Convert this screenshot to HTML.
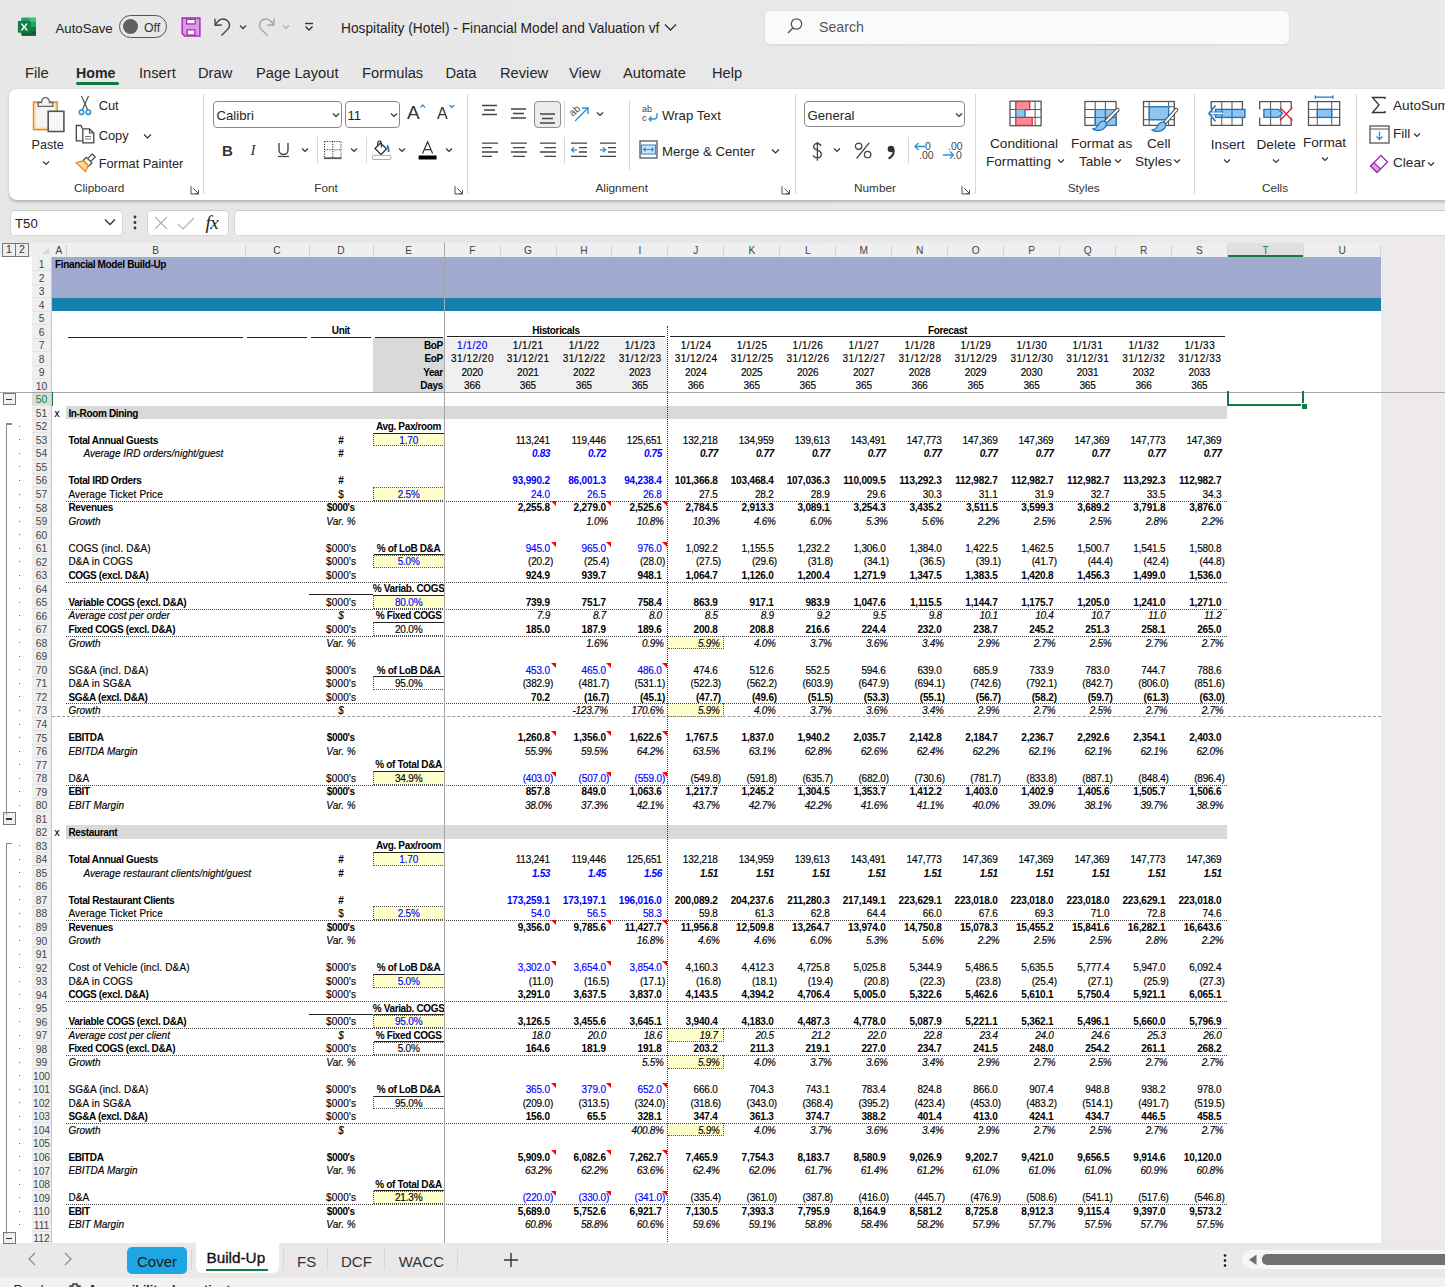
<!DOCTYPE html>
<html><head><meta charset="utf-8">
<style>
*{margin:0;padding:0;}
html,body{width:1445px;height:1287px;overflow:hidden;background:linear-gradient(to right,#e7e7e7 0%,#e9e8e9 55%,#ece9eb 100%);font-family:"Liberation Sans",sans-serif;}
.a{position:absolute;}
.t{position:absolute;white-space:nowrap;line-height:1;}
.t.c{text-align:center;}
.ch{position:absolute;height:14px;line-height:16.2px;text-align:center;font-size:10.2px;color:#444;}
.rh{position:absolute;left:32px;width:19px;height:13.5px;line-height:15px;text-align:center;font-size:10.3px;}
.ob{position:absolute;width:13.6px;height:13.5px;border:1.4px solid #6f7a86;background:#eeeeee;font-size:10.5px;line-height:11.5px;text-align:center;color:#333;box-sizing:border-box;}
.ob2{position:absolute;width:13px;height:12.5px;border:1px solid #777;background:#f0f0f0;font-size:10px;line-height:11px;text-align:center;color:#333;box-sizing:border-box;font-weight:bold;}
.u{position:absolute;white-space:nowrap;color:#222;}
</style></head><body>
<svg class="a" style="left:17px;top:17px;" width="20" height="20" viewBox="0 0 20 20"><rect x="4.5" y="0.8" width="14.5" height="18" rx="1" fill="#107c41"/>
<rect x="4.5" y="0.8" width="7.5" height="9.2" fill="#21a366"/><rect x="12" y="0.8" width="7" height="4.2" fill="#33c481"/>
<rect x="12" y="5" width="7" height="5" fill="#21a366"/><path d="M4.5 14.5 H19 V17.8 A1 1 0 0 1 18 18.8 H5.5 A1 1 0 0 1 4.5 17.8 Z" fill="#185c37"/>
<rect x="0.9" y="4.1" width="12.7" height="11.7" rx="1" fill="#107c41"/>
<path d="M3.6 6.4 H5.6 L7.25 9.2 L8.9 6.4 H10.9 L8.3 10 L11 13.6 H9 L7.25 10.8 L5.5 13.6 H3.5 L6.2 10 Z" fill="#fff"/></svg>
<div class="u" style="left:55.5px;top:20.7px;font-size:13.2px;line-height:15.2px;color:#222;font-weight:normal;">AutoSave</div>
<div class="a" style="left:119px;top:15px;width:48px;height:22.5px;border:1px solid #555;border-radius:12px;box-sizing:border-box;"></div>
<div class="a" style="left:123px;top:19.3px;width:15px;height:15px;border-radius:50%;background:#5f5f5f;"></div>
<div class="u" style="left:144px;top:21.2px;font-size:12.3px;line-height:14.1px;color:#333;font-weight:normal;">Off</div>
<svg class="a" style="left:181px;top:17px;" width="20" height="20" viewBox="0 0 20 20"><path d="M1.2 1 H18.9 V18.9 H3.6 L1.2 16.5 Z" fill="#d99be3" stroke="#a52fb5" stroke-width="1.5"/>
<rect x="5.6" y="2.3" width="8.6" height="4.6" fill="#fff" stroke="#a52fb5" stroke-width="1.3"/>
<rect x="6.2" y="12.8" width="7.6" height="5.2" fill="#fff" stroke="#a52fb5" stroke-width="1.3"/></svg>
<svg class="a" style="left:213px;top:17px;" width="20" height="21" viewBox="0 0 20 21"><path d="M2.3 8.3 C4.5 4 7 2 10 2 C13.5 2 16.5 4.5 16.5 8.5 C16.5 10.5 15.5 11.5 14.5 12.5 L8.5 18.5" fill="none" stroke="#444" stroke-width="1.4"/><path d="M1.8 1.6 L2.3 8.3 L8.8 8" fill="none" stroke="#444" stroke-width="1.4"/></svg>
<svg class="a" style="left:238.5px;top:24px;" width="8" height="6.0" viewBox="0 0 8 6.0"><path d="M1 1.5 L4.0 4.5 L7 1.5" fill="none" stroke="#444" stroke-width="1.4"/></svg>
<svg class="a" style="left:256px;top:17px;" width="20" height="21" viewBox="0 0 20 21"><path d="M17.7 8.3 C15.5 4 13 2 10 2 C6.5 2 3.5 4.5 3.5 8.5 C3.5 10.5 4.5 11.5 5.5 12.5 L11.5 18.5" fill="none" stroke="#a6a6a6" stroke-width="1.4"/><path d="M18.2 1.6 L17.7 8.3 L11.2 8" fill="none" stroke="#a6a6a6" stroke-width="1.4"/></svg>
<svg class="a" style="left:281.5px;top:24px;" width="8" height="6.0" viewBox="0 0 8 6.0"><path d="M1 1.5 L4.0 4.5 L7 1.5" fill="none" stroke="#b0b0b0" stroke-width="1.2"/></svg>
<svg class="a" style="left:303px;top:21px;" width="12" height="12" viewBox="0 0 12 12"><path d="M2 2.5 H10" stroke="#333" stroke-width="1.4"/><path d="M2.5 5.5 L6 9 L9.5 5.5" fill="none" stroke="#333" stroke-width="1.4"/></svg>
<div class="u" style="left:341px;top:20.6px;font-size:13.75px;line-height:15.8px;color:#222;font-weight:normal;">Hospitality (Hotel) - Financial Model and Valuation vf</div>
<svg class="a" style="left:664px;top:22.5px;" width="13" height="8.5" viewBox="0 0 13 8.5"><path d="M1 1.5 L6.5 7.0 L12 1.5" fill="none" stroke="#333" stroke-width="1.4"/></svg>
<div class="a" style="left:764px;top:9.5px;width:526px;height:35px;background:#fafafa;border:1px solid #e2e0e1;border-radius:6px;box-sizing:border-box;box-shadow:0 1px 1px rgba(0,0,0,0.06);"></div>
<svg class="a" style="left:786px;top:17px;" width="18" height="18" viewBox="0 0 18 18"><circle cx="10.5" cy="7" r="5.2" fill="none" stroke="#555" stroke-width="1.3"/><path d="M7 10.8 L2 16" stroke="#555" stroke-width="1.4"/></svg>
<div class="u" style="left:819px;top:18.6px;font-size:14.2px;line-height:16.3px;color:#555;font-weight:normal;">Search</div>
<div class="u" style="left:25px;top:64.9px;font-size:14.7px;line-height:16.9px;color:#262626;font-weight:normal;">File</div>
<div class="u" style="left:76px;top:65.3px;font-size:14.2px;line-height:16.3px;color:#262626;font-weight:bold;">Home</div>
<div class="u" style="left:139px;top:64.9px;font-size:14.7px;line-height:16.9px;color:#262626;font-weight:normal;">Insert</div>
<div class="u" style="left:198px;top:64.9px;font-size:14.7px;line-height:16.9px;color:#262626;font-weight:normal;">Draw</div>
<div class="u" style="left:256px;top:64.9px;font-size:14.7px;line-height:16.9px;color:#262626;font-weight:normal;">Page Layout</div>
<div class="u" style="left:362px;top:64.9px;font-size:14.7px;line-height:16.9px;color:#262626;font-weight:normal;">Formulas</div>
<div class="u" style="left:445.5px;top:64.9px;font-size:14.7px;line-height:16.9px;color:#262626;font-weight:normal;">Data</div>
<div class="u" style="left:500px;top:64.9px;font-size:14.7px;line-height:16.9px;color:#262626;font-weight:normal;">Review</div>
<div class="u" style="left:569px;top:64.9px;font-size:14.7px;line-height:16.9px;color:#262626;font-weight:normal;">View</div>
<div class="u" style="left:623px;top:64.9px;font-size:14.7px;line-height:16.9px;color:#262626;font-weight:normal;">Automate</div>
<div class="u" style="left:712px;top:64.9px;font-size:14.7px;line-height:16.9px;color:#262626;font-weight:normal;">Help</div>
<div class="a" style="left:76px;top:82px;width:43px;height:3px;border-radius:2px;background:#0e7a3e;"></div>
<div class="a" style="left:9px;top:88.5px;width:1460px;height:111px;background:#fff;border-radius:8px;box-shadow:0 1.5px 3px rgba(0,0,0,0.22);"></div>
<div class="u" style="left:39.2px;width:120px;text-align:center;top:182.3px;font-size:11.8px;line-height:13px;color:#333;">Clipboard</div>
<div class="u" style="left:266px;width:120px;text-align:center;top:182.3px;font-size:11.8px;line-height:13px;color:#333;">Font</div>
<div class="u" style="left:561.7px;width:120px;text-align:center;top:182.3px;font-size:11.8px;line-height:13px;color:#333;">Alignment</div>
<div class="u" style="left:815px;width:120px;text-align:center;top:182.3px;font-size:11.8px;line-height:13px;color:#333;">Number</div>
<div class="u" style="left:1023.7px;width:120px;text-align:center;top:182.3px;font-size:11.8px;line-height:13px;color:#333;">Styles</div>
<div class="u" style="left:1215px;width:120px;text-align:center;top:182.3px;font-size:11.8px;line-height:13px;color:#333;">Cells</div>
<div class="a" style="left:203.4px;top:94px;width:1px;height:100px;background:#d6d6d6;"></div>
<div class="a" style="left:466.7px;top:94px;width:1px;height:100px;background:#d6d6d6;"></div>
<div class="a" style="left:794.5px;top:94px;width:1px;height:100px;background:#d6d6d6;"></div>
<div class="a" style="left:974.5px;top:94px;width:1px;height:100px;background:#d6d6d6;"></div>
<div class="a" style="left:1193.5px;top:94px;width:1px;height:100px;background:#d6d6d6;"></div>
<div class="a" style="left:1356px;top:94px;width:1px;height:100px;background:#d6d6d6;"></div>
<svg class="a" style="left:190px;top:185px;" width="10" height="10" viewBox="0 0 10 10"><path d="M1 1 V9 H9" fill="none" stroke="#555" stroke-width="1"/><path d="M3.5 3.5 L8.5 8.5 M5 8.5 H8.5 V5" fill="none" stroke="#555" stroke-width="1"/></svg>
<svg class="a" style="left:454px;top:185px;" width="10" height="10" viewBox="0 0 10 10"><path d="M1 1 V9 H9" fill="none" stroke="#555" stroke-width="1"/><path d="M3.5 3.5 L8.5 8.5 M5 8.5 H8.5 V5" fill="none" stroke="#555" stroke-width="1"/></svg>
<svg class="a" style="left:781px;top:185px;" width="10" height="10" viewBox="0 0 10 10"><path d="M1 1 V9 H9" fill="none" stroke="#555" stroke-width="1"/><path d="M3.5 3.5 L8.5 8.5 M5 8.5 H8.5 V5" fill="none" stroke="#555" stroke-width="1"/></svg>
<svg class="a" style="left:961px;top:185px;" width="10" height="10" viewBox="0 0 10 10"><path d="M1 1 V9 H9" fill="none" stroke="#555" stroke-width="1"/><path d="M3.5 3.5 L8.5 8.5 M5 8.5 H8.5 V5" fill="none" stroke="#555" stroke-width="1"/></svg>
<svg class="a" style="left:32px;top:96px;" width="34" height="38" viewBox="0 0 34 38"><rect x="1.6" y="6.1" width="23.5" height="27.5" fill="#f4f4f4" stroke="#e8831f" stroke-width="1.6"/>
<rect x="3" y="7.5" width="20.7" height="24.7" fill="none" stroke="#fbd98a" stroke-width="1.3"/>
<path d="M6.1 10.4 V6.5 H9.5 C9.8 3 11.5 1.6 13.5 1.6 C15.5 1.6 17.2 3 17.5 6.5 H20.8 V10.4 Z" fill="#f4f4f4" stroke="#666" stroke-width="1.3"/>
<rect x="16.2" y="15.3" width="15.7" height="20.2" fill="#f7f7f7" stroke="#555" stroke-width="1.6"/></svg>
<div class="u" style="left:31.5px;top:138.2px;font-size:12.6px;line-height:14.5px;color:#262626;font-weight:normal;">Paste</div>
<svg class="a" style="left:42px;top:159.5px;" width="8" height="6.0" viewBox="0 0 8 6.0"><path d="M1 1.5 L4.0 4.5 L7 1.5" fill="none" stroke="#333" stroke-width="1.2"/></svg>
<svg class="a" style="left:76px;top:95px;" width="18" height="21" viewBox="0 0 18 21"><path d="M5.5 1 L11.8 15.2 M12.5 1 L6.2 15.2" stroke="#444" stroke-width="1.1"/><circle cx="5.5" cy="17.2" r="2.2" fill="#fff" stroke="#2b8fd6" stroke-width="1.5"/><circle cx="12.3" cy="17.2" r="2.2" fill="#fff" stroke="#2b8fd6" stroke-width="1.5"/></svg>
<div class="u" style="left:98.7px;top:99.4px;font-size:12.8px;line-height:14.7px;color:#262626;font-weight:normal;">Cut</div>
<svg class="a" style="left:75px;top:124px;" width="21" height="21" viewBox="0 0 21 21"><path d="M6.8 4.5 V2.8 C6.8 2 6.2 1.5 5.5 1.5 H1.3 V16.8 H6.8" fill="none" stroke="#444" stroke-width="1.3"/><path d="M7.8 4.8 H14.5 L18.8 9 V18.8 H7.8 Z" fill="#fff" stroke="#444" stroke-width="1.3"/><path d="M14.5 4.8 V9 H18.8" fill="none" stroke="#444" stroke-width="1.1"/><path d="M10 12.5 H16 M10 15 H16" stroke="#777" stroke-width="1"/></svg>
<div class="u" style="left:98.7px;top:128.6px;font-size:12.8px;line-height:14.7px;color:#262626;font-weight:normal;">Copy</div>
<svg class="a" style="left:142.5px;top:133px;" width="9" height="6.5" viewBox="0 0 9 6.5"><path d="M1 1.5 L4.5 5.0 L8 1.5" fill="none" stroke="#333" stroke-width="1.2"/></svg>
<svg class="a" style="left:75px;top:153px;" width="22" height="21" viewBox="0 0 22 21"><path d="M17.2 1 L20.2 4 L15.5 8.7 L12.5 5.7 Z" fill="#fff" stroke="#444" stroke-width="1.2"/><path d="M11.3 4.3 L16.9 9.9 L13.7 13.1 L8.1 7.5 Z" fill="#fff" stroke="#444" stroke-width="1.2"/><path d="M8.6 7.8 L13.4 12.6 C12.2 15 11.6 16.6 10.3 18.6 L1.2 9.6 C4 8.6 6.2 8.4 8.6 7.8 Z" fill="#fbd78d" stroke="#e8831f" stroke-width="1.3"/></svg>
<div class="u" style="left:98.7px;top:157.4px;font-size:12.8px;line-height:14.7px;color:#262626;font-weight:normal;">Format Painter</div>
<div class="a" style="left:213.4px;top:101.3px;width:129px;height:26.4px;border:1px solid #8a8a8a;border-radius:4px;box-sizing:border-box;"></div>
<div class="u" style="left:216.5px;top:108.3px;font-size:13.2px;line-height:15.2px;color:#262626;font-weight:normal;">Calibri</div>
<svg class="a" style="left:332px;top:112px;" width="8" height="6.0" viewBox="0 0 8 6.0"><path d="M1 1.5 L4.0 4.5 L7 1.5" fill="none" stroke="#333" stroke-width="1.2"/></svg>
<div class="a" style="left:345px;top:101.3px;width:55.3px;height:26.4px;border:1px solid #8a8a8a;border-radius:4px;box-sizing:border-box;"></div>
<div class="u" style="left:347.5px;top:108.3px;font-size:13.2px;line-height:15.2px;color:#262626;font-weight:normal;">11</div>
<svg class="a" style="left:390px;top:112px;" width="8" height="6.0" viewBox="0 0 8 6.0"><path d="M1 1.5 L4.0 4.5 L7 1.5" fill="none" stroke="#333" stroke-width="1.2"/></svg>
<svg class="a" style="left:407px;top:103px;" width="20" height="18" viewBox="0 0 20 18"><text x="0" y="16" font-family="Liberation Sans" font-size="19" fill="#333">A</text><path d="M13.5 4.5 L15.8 2 L18 4.5" fill="none" stroke="#2b8fd6" stroke-width="1.2"/></svg>
<svg class="a" style="left:437px;top:103px;" width="20" height="18" viewBox="0 0 20 18"><text x="0" y="16" font-family="Liberation Sans" font-size="16" fill="#333">A</text><path d="M12.5 2 L14.8 4.5 L17 2" fill="none" stroke="#2b8fd6" stroke-width="1.2"/></svg>
<div class="u" style="left:222px;top:141.9px;font-size:15px;line-height:17.2px;color:#333;font-weight:bold;">B</div>
<div class="u" style="left:250.5px;top:141.9px;font-size:15px;line-height:17.2px;color:#333;font-weight:normal;font-style:italic;font-family:Liberation Serif;">I</div>
<svg class="a" style="left:277px;top:142px;" width="13" height="16" viewBox="0 0 13 16"><path d="M2 1 V8 A4.5 4.5 0 0 0 11 8 V1" fill="none" stroke="#444" stroke-width="1.4"/><path d="M1 14.5 H12" stroke="#444" stroke-width="1.2"/></svg>
<svg class="a" style="left:301px;top:147px;" width="8" height="6.0" viewBox="0 0 8 6.0"><path d="M1 1.5 L4.0 4.5 L7 1.5" fill="none" stroke="#333" stroke-width="1.2"/></svg>
<div class="a" style="left:317px;top:137px;width:1px;height:26px;background:#d6d6d6;"></div>
<svg class="a" style="left:323px;top:140px;" width="20" height="20" viewBox="0 0 20 20"><path d="M1.5 1.5 H18 V18 M1.5 1.5 V18 M9.75 1.5 V18 M1.5 9.75 H18" fill="none" stroke="#444" stroke-width="1.1" stroke-dasharray="1.2 1.2"/><path d="M1 18.2 H18.5" stroke="#555" stroke-width="1.8"/></svg>
<svg class="a" style="left:350px;top:147px;" width="8" height="6.0" viewBox="0 0 8 6.0"><path d="M1 1.5 L4.0 4.5 L7 1.5" fill="none" stroke="#333" stroke-width="1.2"/></svg>
<div class="a" style="left:365.7px;top:137px;width:1px;height:26px;background:#d6d6d6;"></div>
<svg class="a" style="left:371px;top:140px;" width="22" height="21" viewBox="0 0 22 21"><path d="M4 8.5 L9.5 3 L15.5 9 L10 14.5 Z" fill="#fff" stroke="#333" stroke-width="1.3"/><path d="M6.8 5.8 V3.2 C6.8 1.6 7.8 1 8.6 1 C9.5 1 10.3 1.6 10.3 3.2 V7.3" fill="none" stroke="#333" stroke-width="1.2"/><path d="M15.8 5.6 C17.3 6.6 17.8 8.5 17.6 12" fill="none" stroke="#1f74c6" stroke-width="1.9"/><rect x="1.5" y="15.3" width="18.3" height="4.2" rx="1" fill="#fff" stroke="#aaa" stroke-width="1"/></svg>
<svg class="a" style="left:398px;top:147px;" width="8" height="6.0" viewBox="0 0 8 6.0"><path d="M1 1.5 L4.0 4.5 L7 1.5" fill="none" stroke="#333" stroke-width="1.2"/></svg>
<svg class="a" style="left:417px;top:140px;" width="21" height="21" viewBox="0 0 21 21"><path d="M5.6 13.5 L10.6 1.7 L15.6 13.5 M7.3 9.6 H13.9" fill="none" stroke="#333" stroke-width="1.2"/><rect x="1.6" y="15.5" width="18" height="4" fill="#000"/></svg>
<svg class="a" style="left:445px;top:147px;" width="8" height="6.0" viewBox="0 0 8 6.0"><path d="M1 1.5 L4.0 4.5 L7 1.5" fill="none" stroke="#333" stroke-width="1.2"/></svg>
<svg class="a" style="left:481px;top:104px;" width="17" height="14" viewBox="0 0 17 14"><path d="M1 1.5 H16 M3 6 H14 M1 10.5 H16" stroke="#444" stroke-width="1.3"/></svg>
<svg class="a" style="left:510px;top:107px;" width="17" height="14" viewBox="0 0 17 14"><path d="M1 2 H16 M3 6.5 H14 M1 11 H16" stroke="#444" stroke-width="1.3"/></svg>
<div class="a" style="left:534px;top:101.3px;width:26.5px;height:26.7px;background:#ececec;border:1px solid #8f8f8f;border-radius:4px;box-sizing:border-box;"></div>
<svg class="a" style="left:539px;top:112px;" width="17" height="14" viewBox="0 0 17 14"><path d="M1 2 H16 M3 6.5 H14 M1 11 H16" stroke="#444" stroke-width="1.3"/></svg>
<div class="a" style="left:563.6px;top:101px;width:1px;height:27px;background:#d6d6d6;"></div>
<svg class="a" style="left:569px;top:103px;" width="22" height="20" viewBox="0 0 22 20"><text x="1" y="11" font-family="Liberation Sans" font-size="10" fill="#444" transform="rotate(-40 6 9)">ab</text><path d="M6 18 L19 5 M13 5 H19 V11" fill="none" stroke="#2b8fd6" stroke-width="1.4"/></svg>
<svg class="a" style="left:596px;top:111px;" width="8" height="6.0" viewBox="0 0 8 6.0"><path d="M1 1.5 L4.0 4.5 L7 1.5" fill="none" stroke="#333" stroke-width="1.2"/></svg>
<svg class="a" style="left:481px;top:140px;" width="18" height="19" viewBox="0 0 18 19"><path d="M1 3.2 H17 M1 7.6 H11 M1 12 H17 M1 16.4 H11" stroke="#444" stroke-width="1.3"/></svg>
<svg class="a" style="left:510px;top:140px;" width="18" height="19" viewBox="0 0 18 19"><path d="M1 3.2 H17 M3 7.6 H15 M1 12 H17 M3 16.4 H15" stroke="#444" stroke-width="1.3"/></svg>
<svg class="a" style="left:539px;top:140px;" width="18" height="19" viewBox="0 0 18 19"><path d="M1 3.2 H17 M5.5 7.6 H17 M1 12 H17 M5.5 16.4 H17" stroke="#444" stroke-width="1.3"/></svg>
<div class="a" style="left:563.6px;top:137px;width:1px;height:26px;background:#d6d6d6;"></div>
<svg class="a" style="left:570px;top:140px;" width="18" height="19" viewBox="0 0 18 19"><path d="M1 3.2 H17 M9 7.6 H17 M9 12 H17 M1 16.4 H17" stroke="#444" stroke-width="1.3"/><path d="M7 9.8 H1.5 M4 7.3 L1.5 9.8 L4 12.3" fill="none" stroke="#2b8fd6" stroke-width="1.3"/></svg>
<svg class="a" style="left:599px;top:140px;" width="18" height="19" viewBox="0 0 18 19"><path d="M1 3.2 H17 M9 7.6 H17 M9 12 H17 M1 16.4 H17" stroke="#444" stroke-width="1.3"/><path d="M1 9.8 H6.5 M4 7.3 L6.5 9.8 L4 12.3" fill="none" stroke="#2b8fd6" stroke-width="1.3"/></svg>
<div class="a" style="left:628.5px;top:100px;width:1px;height:70px;background:#d6d6d6;"></div>
<svg class="a" style="left:641px;top:104px;" width="18" height="20" viewBox="0 0 18 20"><text x="1" y="8" font-family="Liberation Sans" font-size="9" fill="#444">ab</text><text x="1" y="17" font-family="Liberation Sans" font-size="9" fill="#444">c</text><path d="M16 9 V12 A3 3 0 0 1 13 15 H8 M10.5 12.5 L8 15 L10.5 17.5" fill="none" stroke="#2b8fd6" stroke-width="1.3"/></svg>
<div class="u" style="left:662px;top:108.1px;font-size:13.2px;line-height:15.2px;color:#262626;font-weight:normal;">Wrap Text</div>
<svg class="a" style="left:639px;top:140px;" width="19" height="20" viewBox="0 0 19 20"><rect x="1" y="1" width="17" height="17" fill="#fff" stroke="#555" stroke-width="1.3"/><rect x="2.5" y="5" width="14" height="9" fill="#cfe6f7" stroke="#2b8fd6" stroke-width="1.1"/><path d="M4.5 9.5 H14.5 M6.5 7.5 L4.5 9.5 L6.5 11.5 M12.5 7.5 L14.5 9.5 L12.5 11.5" fill="none" stroke="#2b8fd6" stroke-width="1.1"/></svg>
<div class="u" style="left:662px;top:144.1px;font-size:13.2px;line-height:15.2px;color:#262626;font-weight:normal;">Merge &amp; Center</div>
<svg class="a" style="left:771px;top:148px;" width="9" height="6.5" viewBox="0 0 9 6.5"><path d="M1 1.5 L4.5 5.0 L8 1.5" fill="none" stroke="#333" stroke-width="1.2"/></svg>
<div class="a" style="left:804.2px;top:101.4px;width:161.2px;height:26.1px;border:1px solid #8a8a8a;border-radius:4px;box-sizing:border-box;"></div>
<div class="u" style="left:807.5px;top:108.1px;font-size:13.2px;line-height:15.2px;color:#262626;font-weight:normal;">General</div>
<svg class="a" style="left:955px;top:112px;" width="8" height="6.0" viewBox="0 0 8 6.0"><path d="M1 1.5 L4.0 4.5 L7 1.5" fill="none" stroke="#333" stroke-width="1.2"/></svg>
<svg class="a" style="left:811px;top:140.5px;" width="13" height="21" viewBox="0 0 13 21"><path d="M10 5 C9.5 3.3 8 2.5 6.3 2.5 C4 2.5 2.6 3.8 2.6 5.7 C2.6 7.8 4.6 8.6 6.3 9.2 C8.4 9.9 10.3 10.8 10.3 13.4 C10.3 15.5 8.5 16.8 6.3 16.8 C4.3 16.8 2.8 15.8 2.2 14.2 M6.4 0.8 V19.8" fill="none" stroke="#444" stroke-width="1.3"/></svg>
<svg class="a" style="left:833px;top:147px;" width="8" height="6.0" viewBox="0 0 8 6.0"><path d="M1 1.5 L4.0 4.5 L7 1.5" fill="none" stroke="#333" stroke-width="1.2"/></svg>
<svg class="a" style="left:854px;top:142px;" width="19" height="18" viewBox="0 0 19 18"><circle cx="4.6" cy="4.3" r="3.2" fill="none" stroke="#444" stroke-width="1.3"/><circle cx="13.6" cy="12.6" r="3.2" fill="none" stroke="#444" stroke-width="1.3"/><path d="M15.2 0.8 L2.6 16.5" stroke="#444" stroke-width="1.3"/></svg>
<svg class="a" style="left:885px;top:142px;" width="12" height="18" viewBox="0 0 12 18"><circle cx="6" cy="7" r="3.3" fill="#333"/><path d="M8.8 7.5 C9 12 7 15 3.5 16.5" fill="none" stroke="#333" stroke-width="2"/></svg>
<div class="a" style="left:907.5px;top:137px;width:1px;height:26px;background:#d6d6d6;"></div>
<svg class="a" style="left:913px;top:140px;" width="22" height="22" viewBox="0 0 22 22"><text x="12" y="9.5" font-family="Liberation Sans" font-size="10.5" fill="#444">0</text><text x="6" y="19" font-family="Liberation Sans" font-size="10.5" fill="#444">.00</text><path d="M12 6.5 H2 M5.5 3 L2 6.5 L5.5 10" fill="none" stroke="#2b8fd6" stroke-width="1.3"/></svg>
<svg class="a" style="left:942px;top:140px;" width="22" height="22" viewBox="0 0 22 22"><text x="6" y="9.5" font-family="Liberation Sans" font-size="10.5" fill="#444">.00</text><text x="11" y="19" font-family="Liberation Sans" font-size="10.5" fill="#444">.0</text><path d="M1 15 H11.5 M8 11.5 L11.5 15 L8 18.5" fill="none" stroke="#2b8fd6" stroke-width="1.3"/></svg>
<svg class="a" style="left:1009px;top:100px;" width="34" height="28" viewBox="0 0 34 28"><rect x="1" y="1.2" width="31.1" height="24.5" fill="#fff" stroke="#555" stroke-width="1.3"/>
<path d="M26.1 1.2 V25.7 M1 9.5 H32 M1 17.4 H32" stroke="#555" stroke-width="1"/>
<rect x="6.8" y="1.5" width="13.9" height="8.2" fill="#f98e99" stroke="#e2262e" stroke-width="1.3"/>
<rect x="6.8" y="9.7" width="9.2" height="7.7" fill="#8fc4ee"/><path d="M6.8 9.7 V17.4 M16 9.7 V17.4" stroke="#1f74c6" stroke-width="1.4"/>
<rect x="6.8" y="17.4" width="16.4" height="8" fill="#f98e99" stroke="#e2262e" stroke-width="1.3"/></svg>
<div class="u" style="left:990px;top:136.0px;font-size:13.6px;line-height:15.6px;color:#262626;font-weight:normal;">Conditional</div>
<div class="u" style="left:986px;top:153.7px;font-size:13.6px;line-height:15.6px;color:#262626;font-weight:normal;">Formatting</div>
<svg class="a" style="left:1057px;top:158px;" width="8" height="6.0" viewBox="0 0 8 6.0"><path d="M1 1.5 L4.0 4.5 L7 1.5" fill="none" stroke="#333" stroke-width="1.2"/></svg>
<svg class="a" style="left:1083px;top:100px;" width="38" height="32" viewBox="0 0 38 32"><rect x="1.9" y="1.5" width="31.2" height="23.9" fill="#fff" stroke="#555" stroke-width="1.3"/>
<rect x="12.2" y="9.5" width="20.9" height="15.9" fill="#8fc4ee"/>
<path d="M12.2 1.5 V25.4 M22.4 1.5 V25.4 M1.9 9.5 H33.1 M1.9 17.5 H33.1" stroke="#555" stroke-width="1"/>
<path d="M12.2 9.5 V25.4 H33.1 V9.5 Z M22.4 9.5 V25.4 M12.2 17.5 H33.1" fill="none" stroke="#1f74c6" stroke-width="1.2"/>
<path d="M34.6 9.8 L21.5 23" stroke="#444" stroke-width="4" stroke-linecap="round"/><path d="M34.6 9.8 L21.5 23" stroke="#fff" stroke-width="2" stroke-linecap="round"/><path d="M23.0 22 C24.5 25 22.5 29.5 16.5 30.3 C13.5 30.6 11.0 29.8 10.0 29 C13.5 28.5 14.5 26.5 15.5 24.5 C17.0 21.5 20.5 20 23.0 22 Z" fill="#8fc4ee" stroke="#1f74c6" stroke-width="1.3"/></svg>
<div class="u" style="left:1071px;top:136.0px;font-size:13.6px;line-height:15.6px;color:#262626;font-weight:normal;">Format as</div>
<div class="u" style="left:1079px;top:153.7px;font-size:13.6px;line-height:15.6px;color:#262626;font-weight:normal;">Table</div>
<svg class="a" style="left:1114px;top:158px;" width="8" height="6.0" viewBox="0 0 8 6.0"><path d="M1 1.5 L4.0 4.5 L7 1.5" fill="none" stroke="#333" stroke-width="1.2"/></svg>
<svg class="a" style="left:1142px;top:100px;" width="38" height="32" viewBox="0 0 38 32"><rect x="1.5" y="1.5" width="30.8" height="23.9" fill="#fff" stroke="#555" stroke-width="1.3"/>
<path d="M7.2 1.5 V25.4 M26.6 1.5 V25.4 M1.5 6.8 H32.3 M1.5 19.7 H32.3" stroke="#555" stroke-width="1"/>
<rect x="7.2" y="6.8" width="19.4" height="12.9" fill="#8fc4ee" stroke="#1f74c6" stroke-width="1.3"/>
<path d="M34.2 9.8 L21.8 24" stroke="#444" stroke-width="4" stroke-linecap="round"/><path d="M34.2 9.8 L21.8 24" stroke="#fff" stroke-width="2" stroke-linecap="round"/><path d="M23.3 23 C24.8 26 22.8 30.5 16.8 31.3 C13.8 31.6 11.3 30.8 10.3 30 C13.8 29.5 14.8 27.5 15.8 25.5 C17.3 22.5 20.8 21 23.3 23 Z" fill="#8fc4ee" stroke="#1f74c6" stroke-width="1.3"/></svg>
<div class="u" style="left:1147px;top:136.0px;font-size:13.6px;line-height:15.6px;color:#262626;font-weight:normal;">Cell</div>
<div class="u" style="left:1135px;top:153.7px;font-size:13.6px;line-height:15.6px;color:#262626;font-weight:normal;">Styles</div>
<svg class="a" style="left:1173px;top:158px;" width="8" height="6.0" viewBox="0 0 8 6.0"><path d="M1 1.5 L4.0 4.5 L7 1.5" fill="none" stroke="#333" stroke-width="1.2"/></svg>
<svg class="a" style="left:1207px;top:100px;" width="40" height="28" viewBox="0 0 40 28"><path d="M4.2 9.4 V1.6 H35.4 V9.4 M4.2 17.4 V25.4 H35.4 V17.4" fill="#fff" stroke="#555" stroke-width="1.3"/>
<path d="M14.8 1.6 V9.4 M25 1.6 V9.4 M14.8 17.4 V25.4 M25 17.4 V25.4" stroke="#555" stroke-width="1"/>
<rect x="8.6" y="9.4" width="29.3" height="8" fill="#8fc4ee" stroke="#1f74c6" stroke-width="1.4"/>
<path d="M25 9.4 V17.4 M14.8 9.4 V17.4" stroke="#1f74c6" stroke-width="1.1"/>
<path d="M8.5 5.5 L2 13.4 L8.5 21.3" fill="none" stroke="#1f74c6" stroke-width="1.6"/>
<path d="M3 12 H16 M3 14.8 H16" stroke="#1f74c6" stroke-width="1.1"/><path d="M4 12.6 H15.5 V14.2 H4 Z" fill="#fff"/></svg>
<div class="u" style="left:1210.8px;top:137.3px;font-size:13.6px;line-height:15.6px;color:#262626;font-weight:normal;">Insert</div>
<svg class="a" style="left:1223px;top:158px;" width="8" height="6.0" viewBox="0 0 8 6.0"><path d="M1 1.5 L4.0 4.5 L7 1.5" fill="none" stroke="#333" stroke-width="1.2"/></svg>
<svg class="a" style="left:1258px;top:100px;" width="36" height="28" viewBox="0 0 36 28"><path d="M1.7 9.4 V1.6 H33.2 V9.4 M1.7 17.4 V25.4 H33.2 V17.4" fill="#fff" stroke="#555" stroke-width="1.3"/>
<path d="M12.6 1.6 V25.4 M22.8 1.6 V25.4" stroke="#555" stroke-width="1"/>
<path d="M5.9 9.4 H20.5 L24.6 13.4 L20.5 17.4 H5.9 Z" fill="#8fc4ee" stroke="#1f74c6" stroke-width="1.4"/>
<path d="M12.6 9.4 V17.4" stroke="#1f74c6" stroke-width="1.1"/>
<path d="M22 7.6 L34.4 20.6 M34.4 7.6 L22 20.6" stroke="#e2262e" stroke-width="1.4"/></svg>
<div class="u" style="left:1256.5px;top:137.3px;font-size:13.6px;line-height:15.6px;color:#262626;font-weight:normal;">Delete</div>
<svg class="a" style="left:1272px;top:158px;" width="8" height="6.0" viewBox="0 0 8 6.0"><path d="M1 1.5 L4.0 4.5 L7 1.5" fill="none" stroke="#333" stroke-width="1.2"/></svg>
<svg class="a" style="left:1307px;top:95px;" width="34" height="33" viewBox="0 0 34 33"><path d="M8.3 2.2 H25.9 M8.3 0.6 V3.8 M25.9 0.6 V3.8" stroke="#1f74c6" stroke-width="1.3"/>
<rect x="1.5" y="6.6" width="31.2" height="23.8" fill="#fff" stroke="#555" stroke-width="1.3"/>
<path d="M10.3 6.6 V30.4 M24.7 6.6 V30.4 M1.5 14.4 H32.7 M1.5 22.4 H32.7" stroke="#555" stroke-width="1"/>
<rect x="10.3" y="14.4" width="14.4" height="8" fill="#8fc4ee" stroke="#1f74c6" stroke-width="1.4"/></svg>
<div class="u" style="left:1303px;top:135.0px;font-size:13.6px;line-height:15.6px;color:#262626;font-weight:normal;">Format</div>
<svg class="a" style="left:1321px;top:156px;" width="8" height="6.0" viewBox="0 0 8 6.0"><path d="M1 1.5 L4.0 4.5 L7 1.5" fill="none" stroke="#333" stroke-width="1.2"/></svg>
<svg class="a" style="left:1371px;top:96px;" width="16" height="18" viewBox="0 0 16 18"><path d="M14 3 V1.5 H1.5 L8 9 L1.5 16.5 H14 V15" fill="none" stroke="#333" stroke-width="1.3"/></svg>
<div class="u" style="left:1393px;top:98.0px;font-size:13.6px;line-height:15.6px;color:#262626;font-weight:normal;">AutoSum</div>
<svg class="a" style="left:1369px;top:125px;" width="21" height="19" viewBox="0 0 21 19"><rect x="1" y="1" width="19" height="17" fill="#fff" stroke="#555" stroke-width="1.3"/><path d="M1 4 H20" stroke="#555" stroke-width="1"/><path d="M10.5 6.5 V14.5 M7.5 11.5 L10.5 14.5 L13.5 11.5" fill="none" stroke="#2b8fd6" stroke-width="1.3"/></svg>
<div class="u" style="left:1393px;top:126.2px;font-size:13.6px;line-height:15.6px;color:#262626;font-weight:normal;">Fill</div>
<svg class="a" style="left:1413px;top:132px;" width="8" height="6.0" viewBox="0 0 8 6.0"><path d="M1 1.5 L4.0 4.5 L7 1.5" fill="none" stroke="#333" stroke-width="1.2"/></svg>
<svg class="a" style="left:1369px;top:154px;" width="20" height="19" viewBox="0 0 20 19"><path d="M1.5 12 L12 1.5 L18.5 8 L8 18.5 Z" fill="#fff" stroke="#a22eb2" stroke-width="1.4"/><path d="M1.5 12 L5 8.5 L11.5 15 L8 18.5 Z" fill="#d9a0e0" stroke="#a22eb2" stroke-width="1.2"/></svg>
<div class="u" style="left:1393px;top:155.3px;font-size:13.6px;line-height:15.6px;color:#262626;font-weight:normal;">Clear</div>
<svg class="a" style="left:1427px;top:161px;" width="8" height="6.0" viewBox="0 0 8 6.0"><path d="M1 1.5 L4.0 4.5 L7 1.5" fill="none" stroke="#333" stroke-width="1.2"/></svg>
<div class="a" style="left:9.5px;top:209.6px;width:113.5px;height:26px;background:#fff;border:1px solid #d6d6d6;border-top-color:#c9c9c9;border-radius:5px;box-sizing:border-box;"></div>
<div class="u" style="left:15px;top:216.4px;font-size:13.2px;line-height:15.2px;color:#222;font-weight:normal;">T50</div>
<svg class="a" style="left:104px;top:218px;" width="12" height="8.0" viewBox="0 0 12 8.0"><path d="M1 1.5 L6.0 6.5 L11 1.5" fill="none" stroke="#333" stroke-width="1.3"/></svg>
<svg class="a" style="left:132px;top:214px;" width="6" height="18" viewBox="0 0 6 18"><circle cx="3" cy="3" r="1.4" fill="#333"/><circle cx="3" cy="8.5" r="1.4" fill="#333"/><circle cx="3" cy="14" r="1.4" fill="#333"/></svg>
<div class="a" style="left:147px;top:209.6px;width:81.5px;height:26px;background:#fff;border:1px solid #d6d6d6;border-top-color:#c9c9c9;border-radius:5px;box-sizing:border-box;"></div>
<svg class="a" style="left:152px;top:214px;" width="18" height="18" viewBox="0 0 18 18"><path d="M3 3 L15 15 M15 3 L3 15" stroke="#b0b0b0" stroke-width="1.2"/></svg>
<svg class="a" style="left:176px;top:214px;" width="20" height="18" viewBox="0 0 20 18"><path d="M2 10 L7 15 L18 4" fill="none" stroke="#b0b0b0" stroke-width="1.2"/></svg>
<div class="u" style="left:205.5px;top:211.5px;font-size:19px;line-height:21.8px;color:#222;font-weight:normal;font-family:Liberation Serif;letter-spacing:-0.5px;"><i>fx</i></div>
<div class="a" style="left:234px;top:209.6px;width:1230px;height:26px;background:#fff;border:1px solid #d6d6d6;border-top-color:#c9c9c9;border-radius:5px;box-sizing:border-box;"></div>
<div class="a" style="left:0;top:1242.5px;width:1445px;height:35.5px;background:#ebe8e9;"></div>
<div class="a" style="left:0;top:1278px;width:1445px;height:9px;background:#f3f2f2;"></div>
<svg class="a" style="left:26px;top:1251px;" width="12" height="16" viewBox="0 0 12 16"><path d="M9 2 L3 8 L9 14" fill="none" stroke="#8a8a8a" stroke-width="1.2"/></svg>
<svg class="a" style="left:62px;top:1251px;" width="12" height="16" viewBox="0 0 12 16"><path d="M3 2 L9 8 L3 14" fill="none" stroke="#8a8a8a" stroke-width="1.2"/></svg>
<div class="a" style="left:127px;top:1246.5px;width:60px;height:27px;background:#1ea6e3;border-radius:5px;"></div>
<div class="u" style="left:137px;top:1252.7px;font-size:15px;line-height:17.2px;color:#1a1a1a;font-weight:normal;">Cover</div>
<div class="a" style="left:191.3px;top:1249px;width:1px;height:21px;background:#d6d6d6;"></div>
<div class="a" style="left:196px;top:1242px;width:82.5px;height:31px;background:#fff;border-radius:0 0 6px 6px;"></div>
<div class="u" style="left:206.5px;top:1248.5px;font-size:15.3px;line-height:17.6px;color:#111;font-weight:normal;-webkit-text-stroke:0.35px #111;">Build-Up</div>
<div class="a" style="left:206px;top:1268.5px;width:62px;height:2px;background:#107c41;"></div>
<div class="a" style="left:283px;top:1249px;width:1px;height:21px;background:#d6d6d6;"></div>
<div class="u" style="left:297px;top:1252.7px;font-size:15px;line-height:17.2px;color:#333;font-weight:normal;">FS</div>
<div class="a" style="left:327px;top:1249px;width:1px;height:21px;background:#d6d6d6;"></div>
<div class="u" style="left:341px;top:1252.7px;font-size:15px;line-height:17.2px;color:#333;font-weight:normal;">DCF</div>
<div class="a" style="left:383.8px;top:1249px;width:1px;height:21px;background:#d6d6d6;"></div>
<div class="u" style="left:398.7px;top:1252.7px;font-size:15px;line-height:17.2px;color:#333;font-weight:normal;">WACC</div>
<div class="a" style="left:456.6px;top:1249px;width:1px;height:21px;background:#d6d6d6;"></div>
<svg class="a" style="left:503px;top:1252px;" width="16" height="16" viewBox="0 0 16 16"><path d="M8 1 V15 M1 8 H15" stroke="#333" stroke-width="1.4"/></svg>
<svg class="a" style="left:1222px;top:1253px;" width="6" height="15" viewBox="0 0 6 15"><circle cx="3" cy="2.5" r="1.3" fill="#111"/><circle cx="3" cy="7.5" r="1.3" fill="#111"/><circle cx="3" cy="12.5" r="1.3" fill="#111"/></svg>
<div class="a" style="left:1242.4px;top:1249.8px;width:250px;height:19px;background:#f7f5f6;border-radius:10px;"></div>
<svg class="a" style="left:1248px;top:1254px;" width="10" height="12" viewBox="0 0 10 12"><path d="M8.5 0.5 V11 L1 5.75 Z" fill="#707070"/></svg>
<div class="a" style="left:1261.6px;top:1254px;width:250px;height:10.5px;background:#707070;border-radius:5px;"></div>
<div class="u" style="left:13.5px;top:1283.3px;font-size:12.5px;line-height:14.4px;color:#222;font-weight:normal;">Ready</div>
<svg class="a" style="left:67px;top:1283px;" width="16" height="8" viewBox="0 0 16 8"><path d="M3 8 V3 H6 V1 H10 V3 H13 V8" fill="none" stroke="#333" stroke-width="1.3"/></svg>
<div class="u" style="left:88px;top:1283.3px;font-size:12.5px;line-height:14.4px;color:#222;font-weight:bold;">Accessibility: Investigate</div>
<div class="a" style="left:0.0px;top:243.00px;width:1445.0px;height:999.50px;background:#ffffff;"></div>
<div class="a" style="left:1380.6px;top:243.00px;width:64.4px;height:999.50px;background:#eeeaeb;"></div>
<div class="a" style="left:32.0px;top:243.00px;width:1348.6px;height:14.00px;background:#efefef;"></div>
<div class="a" style="left:32.0px;top:257.00px;width:19.5px;height:985.50px;background:#efefef;"></div>
<div class="a" style="left:0.0px;top:243.00px;width:32.0px;height:999.50px;background:#ffffff;"></div>
<div class="a" style="left:0.0px;top:243.00px;width:32.0px;height:14.00px;background:#efefef;"></div>
<div class="ob" style="left:2.2px;top:243.3px;">1</div><div class="ob" style="left:15.2px;top:243.3px;">2</div>
<div class="ch" style="left:51.5px;width:14.9px;top:243px;">A</div>
<div class="a" style="left:65.9px;top:245px;width:1px;height:12px;background:#d4d4d4;"></div>
<div class="ch" style="left:66.4px;width:178.6px;top:243px;">B</div>
<div class="a" style="left:244.5px;top:245px;width:1px;height:12px;background:#d4d4d4;"></div>
<div class="ch" style="left:245.0px;width:64.0px;top:243px;">C</div>
<div class="a" style="left:308.5px;top:245px;width:1px;height:12px;background:#d4d4d4;"></div>
<div class="ch" style="left:309.0px;width:64.0px;top:243px;">D</div>
<div class="a" style="left:372.5px;top:245px;width:1px;height:12px;background:#d4d4d4;"></div>
<div class="ch" style="left:373.0px;width:71.5px;top:243px;">E</div>
<div class="a" style="left:444.0px;top:245px;width:1px;height:12px;background:#d4d4d4;"></div>
<div class="ch" style="left:444.5px;width:55.5px;top:243px;">F</div>
<div class="a" style="left:499.5px;top:245px;width:1px;height:12px;background:#d4d4d4;"></div>
<div class="ch" style="left:500.0px;width:56.0px;top:243px;">G</div>
<div class="a" style="left:555.5px;top:245px;width:1px;height:12px;background:#d4d4d4;"></div>
<div class="ch" style="left:556.0px;width:56.0px;top:243px;">H</div>
<div class="a" style="left:611.4px;top:245px;width:1px;height:12px;background:#d4d4d4;"></div>
<div class="ch" style="left:611.9px;width:56.0px;top:243px;">I</div>
<div class="a" style="left:667.4px;top:245px;width:1px;height:12px;background:#d4d4d4;"></div>
<div class="ch" style="left:667.9px;width:56.0px;top:243px;">J</div>
<div class="a" style="left:723.3px;top:245px;width:1px;height:12px;background:#d4d4d4;"></div>
<div class="ch" style="left:723.8px;width:56.0px;top:243px;">K</div>
<div class="a" style="left:779.3px;top:245px;width:1px;height:12px;background:#d4d4d4;"></div>
<div class="ch" style="left:779.8px;width:56.0px;top:243px;">L</div>
<div class="a" style="left:835.3px;top:245px;width:1px;height:12px;background:#d4d4d4;"></div>
<div class="ch" style="left:835.8px;width:56.0px;top:243px;">M</div>
<div class="a" style="left:891.2px;top:245px;width:1px;height:12px;background:#d4d4d4;"></div>
<div class="ch" style="left:891.7px;width:56.0px;top:243px;">N</div>
<div class="a" style="left:947.2px;top:245px;width:1px;height:12px;background:#d4d4d4;"></div>
<div class="ch" style="left:947.7px;width:56.0px;top:243px;">O</div>
<div class="a" style="left:1003.2px;top:245px;width:1px;height:12px;background:#d4d4d4;"></div>
<div class="ch" style="left:1003.7px;width:56.0px;top:243px;">P</div>
<div class="a" style="left:1059.1px;top:245px;width:1px;height:12px;background:#d4d4d4;"></div>
<div class="ch" style="left:1059.6px;width:56.0px;top:243px;">Q</div>
<div class="a" style="left:1115.1px;top:245px;width:1px;height:12px;background:#d4d4d4;"></div>
<div class="ch" style="left:1115.6px;width:56.0px;top:243px;">R</div>
<div class="a" style="left:1171.0px;top:245px;width:1px;height:12px;background:#d4d4d4;"></div>
<div class="ch" style="left:1171.5px;width:56.0px;top:243px;">S</div>
<div class="a" style="left:1227.0px;top:245px;width:1px;height:12px;background:#d4d4d4;"></div>
<div class="a" style="left:1227.5px;top:243.00px;width:76.2px;height:14.00px;background:#e0e0e0;"></div>
<div class="a" style="left:1227.5px;top:255.30px;width:76.2px;height:1.70px;background:#107c41;"></div>
<div class="ch" style="left:1227.5px;width:76.2px;top:243px;color:#107c41;">T</div>
<div class="a" style="left:1303.2px;top:245px;width:1px;height:12px;background:#d4d4d4;"></div>
<div class="ch" style="left:1303.7px;width:76.9px;top:243px;">U</div>
<div class="a" style="left:1380.1px;top:245px;width:1px;height:12px;background:#d4d4d4;"></div>
<div class="a" style="left:42px;top:247.7px;width:0;height:0;border-left:7px solid transparent;border-bottom:6.5px solid #d8d8d8;"></div>
<div class="rh" style="top:257.00px;color:#444">1</div>
<div class="a" style="left:32px;top:270.03px;width:19.5px;height:1px;background:#e2e2e2;"></div>
<div class="rh" style="top:270.53px;color:#444">2</div>
<div class="a" style="left:32px;top:283.56px;width:19.5px;height:1px;background:#e2e2e2;"></div>
<div class="rh" style="top:284.06px;color:#444">3</div>
<div class="a" style="left:32px;top:297.09px;width:19.5px;height:1px;background:#e2e2e2;"></div>
<div class="rh" style="top:297.59px;color:#444">4</div>
<div class="a" style="left:32px;top:310.62px;width:19.5px;height:1px;background:#e2e2e2;"></div>
<div class="rh" style="top:311.12px;color:#444">5</div>
<div class="a" style="left:32px;top:324.15px;width:19.5px;height:1px;background:#e2e2e2;"></div>
<div class="rh" style="top:324.65px;color:#444">6</div>
<div class="a" style="left:32px;top:337.68px;width:19.5px;height:1px;background:#e2e2e2;"></div>
<div class="rh" style="top:338.18px;color:#444">7</div>
<div class="a" style="left:32px;top:351.21px;width:19.5px;height:1px;background:#e2e2e2;"></div>
<div class="rh" style="top:351.71px;color:#444">8</div>
<div class="a" style="left:32px;top:364.74px;width:19.5px;height:1px;background:#e2e2e2;"></div>
<div class="rh" style="top:365.24px;color:#444">9</div>
<div class="a" style="left:32px;top:378.27px;width:19.5px;height:1px;background:#e2e2e2;"></div>
<div class="rh" style="top:378.77px;color:#444">10</div>
<div class="a" style="left:32px;top:391.80px;width:19.5px;height:1px;background:#e2e2e2;"></div>
<div class="a" style="left:32.0px;top:392.30px;width:19.5px;height:13.53px;background:#dcdcdc;"></div>
<div class="rh" style="top:392.30px;color:#107c41">50</div>
<div class="a" style="left:32px;top:405.33px;width:19.5px;height:1px;background:#e2e2e2;"></div>
<div class="rh" style="top:405.83px;color:#444">51</div>
<div class="a" style="left:32px;top:418.86px;width:19.5px;height:1px;background:#e2e2e2;"></div>
<div class="rh" style="top:419.36px;color:#444">52</div>
<div class="a" style="left:32px;top:432.39px;width:19.5px;height:1px;background:#e2e2e2;"></div>
<div class="rh" style="top:432.89px;color:#444">53</div>
<div class="a" style="left:32px;top:445.92px;width:19.5px;height:1px;background:#e2e2e2;"></div>
<div class="rh" style="top:446.42px;color:#444">54</div>
<div class="a" style="left:32px;top:459.45px;width:19.5px;height:1px;background:#e2e2e2;"></div>
<div class="rh" style="top:459.95px;color:#444">55</div>
<div class="a" style="left:32px;top:472.98px;width:19.5px;height:1px;background:#e2e2e2;"></div>
<div class="rh" style="top:473.48px;color:#444">56</div>
<div class="a" style="left:32px;top:486.51px;width:19.5px;height:1px;background:#e2e2e2;"></div>
<div class="rh" style="top:487.01px;color:#444">57</div>
<div class="a" style="left:32px;top:500.04px;width:19.5px;height:1px;background:#e2e2e2;"></div>
<div class="rh" style="top:500.54px;color:#444">58</div>
<div class="a" style="left:32px;top:513.57px;width:19.5px;height:1px;background:#e2e2e2;"></div>
<div class="rh" style="top:514.07px;color:#444">59</div>
<div class="a" style="left:32px;top:527.10px;width:19.5px;height:1px;background:#e2e2e2;"></div>
<div class="rh" style="top:527.60px;color:#444">60</div>
<div class="a" style="left:32px;top:540.63px;width:19.5px;height:1px;background:#e2e2e2;"></div>
<div class="rh" style="top:541.13px;color:#444">61</div>
<div class="a" style="left:32px;top:554.16px;width:19.5px;height:1px;background:#e2e2e2;"></div>
<div class="rh" style="top:554.66px;color:#444">62</div>
<div class="a" style="left:32px;top:567.69px;width:19.5px;height:1px;background:#e2e2e2;"></div>
<div class="rh" style="top:568.19px;color:#444">63</div>
<div class="a" style="left:32px;top:581.22px;width:19.5px;height:1px;background:#e2e2e2;"></div>
<div class="rh" style="top:581.72px;color:#444">64</div>
<div class="a" style="left:32px;top:594.75px;width:19.5px;height:1px;background:#e2e2e2;"></div>
<div class="rh" style="top:595.25px;color:#444">65</div>
<div class="a" style="left:32px;top:608.28px;width:19.5px;height:1px;background:#e2e2e2;"></div>
<div class="rh" style="top:608.78px;color:#444">66</div>
<div class="a" style="left:32px;top:621.81px;width:19.5px;height:1px;background:#e2e2e2;"></div>
<div class="rh" style="top:622.31px;color:#444">67</div>
<div class="a" style="left:32px;top:635.34px;width:19.5px;height:1px;background:#e2e2e2;"></div>
<div class="rh" style="top:635.84px;color:#444">68</div>
<div class="a" style="left:32px;top:648.87px;width:19.5px;height:1px;background:#e2e2e2;"></div>
<div class="rh" style="top:649.37px;color:#444">69</div>
<div class="a" style="left:32px;top:662.40px;width:19.5px;height:1px;background:#e2e2e2;"></div>
<div class="rh" style="top:662.90px;color:#444">70</div>
<div class="a" style="left:32px;top:675.93px;width:19.5px;height:1px;background:#e2e2e2;"></div>
<div class="rh" style="top:676.43px;color:#444">71</div>
<div class="a" style="left:32px;top:689.46px;width:19.5px;height:1px;background:#e2e2e2;"></div>
<div class="rh" style="top:689.96px;color:#444">72</div>
<div class="a" style="left:32px;top:702.99px;width:19.5px;height:1px;background:#e2e2e2;"></div>
<div class="rh" style="top:703.49px;color:#444">73</div>
<div class="a" style="left:32px;top:716.52px;width:19.5px;height:1px;background:#e2e2e2;"></div>
<div class="rh" style="top:717.02px;color:#444">74</div>
<div class="a" style="left:32px;top:730.05px;width:19.5px;height:1px;background:#e2e2e2;"></div>
<div class="rh" style="top:730.55px;color:#444">75</div>
<div class="a" style="left:32px;top:743.58px;width:19.5px;height:1px;background:#e2e2e2;"></div>
<div class="rh" style="top:744.08px;color:#444">76</div>
<div class="a" style="left:32px;top:757.11px;width:19.5px;height:1px;background:#e2e2e2;"></div>
<div class="rh" style="top:757.61px;color:#444">77</div>
<div class="a" style="left:32px;top:770.64px;width:19.5px;height:1px;background:#e2e2e2;"></div>
<div class="rh" style="top:771.14px;color:#444">78</div>
<div class="a" style="left:32px;top:784.17px;width:19.5px;height:1px;background:#e2e2e2;"></div>
<div class="rh" style="top:784.67px;color:#444">79</div>
<div class="a" style="left:32px;top:797.70px;width:19.5px;height:1px;background:#e2e2e2;"></div>
<div class="rh" style="top:798.20px;color:#444">80</div>
<div class="a" style="left:32px;top:811.23px;width:19.5px;height:1px;background:#e2e2e2;"></div>
<div class="rh" style="top:811.73px;color:#444">81</div>
<div class="a" style="left:32px;top:824.76px;width:19.5px;height:1px;background:#e2e2e2;"></div>
<div class="rh" style="top:825.26px;color:#444">82</div>
<div class="a" style="left:32px;top:838.29px;width:19.5px;height:1px;background:#e2e2e2;"></div>
<div class="rh" style="top:838.79px;color:#444">83</div>
<div class="a" style="left:32px;top:851.82px;width:19.5px;height:1px;background:#e2e2e2;"></div>
<div class="rh" style="top:852.32px;color:#444">84</div>
<div class="a" style="left:32px;top:865.35px;width:19.5px;height:1px;background:#e2e2e2;"></div>
<div class="rh" style="top:865.85px;color:#444">85</div>
<div class="a" style="left:32px;top:878.88px;width:19.5px;height:1px;background:#e2e2e2;"></div>
<div class="rh" style="top:879.38px;color:#444">86</div>
<div class="a" style="left:32px;top:892.41px;width:19.5px;height:1px;background:#e2e2e2;"></div>
<div class="rh" style="top:892.91px;color:#444">87</div>
<div class="a" style="left:32px;top:905.94px;width:19.5px;height:1px;background:#e2e2e2;"></div>
<div class="rh" style="top:906.44px;color:#444">88</div>
<div class="a" style="left:32px;top:919.47px;width:19.5px;height:1px;background:#e2e2e2;"></div>
<div class="rh" style="top:919.97px;color:#444">89</div>
<div class="a" style="left:32px;top:933.00px;width:19.5px;height:1px;background:#e2e2e2;"></div>
<div class="rh" style="top:933.50px;color:#444">90</div>
<div class="a" style="left:32px;top:946.53px;width:19.5px;height:1px;background:#e2e2e2;"></div>
<div class="rh" style="top:947.03px;color:#444">91</div>
<div class="a" style="left:32px;top:960.06px;width:19.5px;height:1px;background:#e2e2e2;"></div>
<div class="rh" style="top:960.56px;color:#444">92</div>
<div class="a" style="left:32px;top:973.59px;width:19.5px;height:1px;background:#e2e2e2;"></div>
<div class="rh" style="top:974.09px;color:#444">93</div>
<div class="a" style="left:32px;top:987.12px;width:19.5px;height:1px;background:#e2e2e2;"></div>
<div class="rh" style="top:987.62px;color:#444">94</div>
<div class="a" style="left:32px;top:1000.65px;width:19.5px;height:1px;background:#e2e2e2;"></div>
<div class="rh" style="top:1001.15px;color:#444">95</div>
<div class="a" style="left:32px;top:1014.18px;width:19.5px;height:1px;background:#e2e2e2;"></div>
<div class="rh" style="top:1014.68px;color:#444">96</div>
<div class="a" style="left:32px;top:1027.71px;width:19.5px;height:1px;background:#e2e2e2;"></div>
<div class="rh" style="top:1028.21px;color:#444">97</div>
<div class="a" style="left:32px;top:1041.24px;width:19.5px;height:1px;background:#e2e2e2;"></div>
<div class="rh" style="top:1041.74px;color:#444">98</div>
<div class="a" style="left:32px;top:1054.77px;width:19.5px;height:1px;background:#e2e2e2;"></div>
<div class="rh" style="top:1055.27px;color:#444">99</div>
<div class="a" style="left:32px;top:1068.30px;width:19.5px;height:1px;background:#e2e2e2;"></div>
<div class="rh" style="top:1068.80px;color:#444">100</div>
<div class="a" style="left:32px;top:1081.83px;width:19.5px;height:1px;background:#e2e2e2;"></div>
<div class="rh" style="top:1082.33px;color:#444">101</div>
<div class="a" style="left:32px;top:1095.36px;width:19.5px;height:1px;background:#e2e2e2;"></div>
<div class="rh" style="top:1095.86px;color:#444">102</div>
<div class="a" style="left:32px;top:1108.89px;width:19.5px;height:1px;background:#e2e2e2;"></div>
<div class="rh" style="top:1109.39px;color:#444">103</div>
<div class="a" style="left:32px;top:1122.42px;width:19.5px;height:1px;background:#e2e2e2;"></div>
<div class="rh" style="top:1122.92px;color:#444">104</div>
<div class="a" style="left:32px;top:1135.95px;width:19.5px;height:1px;background:#e2e2e2;"></div>
<div class="rh" style="top:1136.45px;color:#444">105</div>
<div class="a" style="left:32px;top:1149.48px;width:19.5px;height:1px;background:#e2e2e2;"></div>
<div class="rh" style="top:1149.98px;color:#444">106</div>
<div class="a" style="left:32px;top:1163.01px;width:19.5px;height:1px;background:#e2e2e2;"></div>
<div class="rh" style="top:1163.51px;color:#444">107</div>
<div class="a" style="left:32px;top:1176.54px;width:19.5px;height:1px;background:#e2e2e2;"></div>
<div class="rh" style="top:1177.04px;color:#444">108</div>
<div class="a" style="left:32px;top:1190.07px;width:19.5px;height:1px;background:#e2e2e2;"></div>
<div class="rh" style="top:1190.57px;color:#444">109</div>
<div class="a" style="left:32px;top:1203.60px;width:19.5px;height:1px;background:#e2e2e2;"></div>
<div class="rh" style="top:1204.10px;color:#444">110</div>
<div class="a" style="left:32px;top:1217.13px;width:19.5px;height:1px;background:#e2e2e2;"></div>
<div class="rh" style="top:1217.63px;color:#444">111</div>
<div class="a" style="left:32px;top:1230.66px;width:19.5px;height:1px;background:#e2e2e2;"></div>
<div class="rh" style="top:1231.16px;color:#444">112</div>
<div class="a" style="left:32px;top:1244.19px;width:19.5px;height:1px;background:#e2e2e2;"></div>
<div class="a" style="left:51.0px;top:257.00px;width:1.0px;height:985.50px;background:#c8c8c8;"></div>
<div class="a" style="left:51.5px;top:257.00px;width:1329.1px;height:40.59px;background:#a0aacf;"></div>
<div class="a" style="left:51.5px;top:297.59px;width:1329.1px;height:13.53px;background:#1681ad;"></div>
<div class="t" style="left:55.0px;top:259.67px;font-size:10px;letter-spacing:-0.35px;font-weight:bold;color:#000;">Financial Model Build-Up</div>
<div class="a" style="left:373.0px;top:338.18px;width:71.5px;height:54.12px;background:#d9d9d9;"></div>
<div class="a" style="left:444.5px;top:338.18px;width:223.4px;height:54.12px;background:#f0f0f0;"></div>
<div class="a" style="left:68.4px;top:337.18px;width:174.6px;height:0;border-top:1.5px solid #222;"></div>
<div class="a" style="left:247.0px;top:337.18px;width:60.0px;height:0;border-top:1.5px solid #222;"></div>
<div class="a" style="left:311.0px;top:337.18px;width:60.0px;height:0;border-top:1.5px solid #222;"></div>
<div class="a" style="left:375.0px;top:337.18px;width:67.5px;height:0;border-top:1.5px solid #222;"></div>
<div class="a" style="left:447.0px;top:336.48px;width:217.5px;height:0;border-top:1.5px solid #222;"></div>
<div class="a" style="left:670.1px;top:336.48px;width:555.1px;height:0;border-top:1.5px solid #222;"></div>
<div class="t c" style="left:280.8px;width:120px;top:327.31px;font-size:10px;letter-spacing:-0.35px;font-weight:bold;color:#000;margin-top:-1.6px;">Unit</div>
<div class="t c" style="left:496.0px;width:120px;top:327.31px;font-size:10px;letter-spacing:-0.35px;font-weight:bold;color:#000;margin-top:-1.6px;">Historicals</div>
<div class="t c" style="left:887.5px;width:120px;top:327.31px;font-size:10px;letter-spacing:-0.35px;font-weight:bold;color:#000;margin-top:-1.6px;">Forecast</div>
<div class="t" style="right:1002.15px;top:340.85px;font-size:10px;letter-spacing:-0.35px;font-weight:bold;color:#000;">BoP</div>
<div class="t" style="right:1002.15px;top:354.38px;font-size:10px;letter-spacing:-0.35px;font-weight:bold;color:#000;">EoP</div>
<div class="t" style="right:1002.15px;top:367.91px;font-size:10px;letter-spacing:-0.35px;font-weight:bold;color:#000;">Year</div>
<div class="t" style="right:1002.15px;top:381.44px;font-size:10px;letter-spacing:-0.35px;font-weight:bold;color:#000;">Days</div>
<div class="t c" style="left:412.5px;width:120px;top:340.85px;font-size:10px;letter-spacing:0.5px;-webkit-text-stroke:0.15px;color:#0000ff;">1/1/20</div>
<div class="t c" style="left:412.5px;width:120px;top:354.38px;font-size:10px;letter-spacing:0.5px;-webkit-text-stroke:0.15px;color:#000;">31/12/20</div>
<div class="t c" style="left:412.2px;width:120px;top:367.91px;font-size:10px;letter-spacing:-0.17px;-webkit-text-stroke:0.15px;color:#000;">2020</div>
<div class="t c" style="left:412.2px;width:120px;top:381.44px;font-size:10px;letter-spacing:-0.17px;-webkit-text-stroke:0.15px;color:#000;">366</div>
<div class="t c" style="left:468.2px;width:120px;top:340.85px;font-size:10px;letter-spacing:0.5px;-webkit-text-stroke:0.15px;color:#000;">1/1/21</div>
<div class="t c" style="left:468.2px;width:120px;top:354.38px;font-size:10px;letter-spacing:0.5px;-webkit-text-stroke:0.15px;color:#000;">31/12/21</div>
<div class="t c" style="left:467.9px;width:120px;top:367.91px;font-size:10px;letter-spacing:-0.17px;-webkit-text-stroke:0.15px;color:#000;">2021</div>
<div class="t c" style="left:467.9px;width:120px;top:381.44px;font-size:10px;letter-spacing:-0.17px;-webkit-text-stroke:0.15px;color:#000;">365</div>
<div class="t c" style="left:524.2px;width:120px;top:340.85px;font-size:10px;letter-spacing:0.5px;-webkit-text-stroke:0.15px;color:#000;">1/1/22</div>
<div class="t c" style="left:524.2px;width:120px;top:354.38px;font-size:10px;letter-spacing:0.5px;-webkit-text-stroke:0.15px;color:#000;">31/12/22</div>
<div class="t c" style="left:523.9px;width:120px;top:367.91px;font-size:10px;letter-spacing:-0.17px;-webkit-text-stroke:0.15px;color:#000;">2022</div>
<div class="t c" style="left:523.9px;width:120px;top:381.44px;font-size:10px;letter-spacing:-0.17px;-webkit-text-stroke:0.15px;color:#000;">365</div>
<div class="t c" style="left:580.2px;width:120px;top:340.85px;font-size:10px;letter-spacing:0.5px;-webkit-text-stroke:0.15px;color:#000;">1/1/23</div>
<div class="t c" style="left:580.2px;width:120px;top:354.38px;font-size:10px;letter-spacing:0.5px;-webkit-text-stroke:0.15px;color:#000;">31/12/23</div>
<div class="t c" style="left:579.8px;width:120px;top:367.91px;font-size:10px;letter-spacing:-0.17px;-webkit-text-stroke:0.15px;color:#000;">2023</div>
<div class="t c" style="left:579.8px;width:120px;top:381.44px;font-size:10px;letter-spacing:-0.17px;-webkit-text-stroke:0.15px;color:#000;">365</div>
<div class="t c" style="left:636.1px;width:120px;top:340.85px;font-size:10px;letter-spacing:0.5px;-webkit-text-stroke:0.15px;color:#000;">1/1/24</div>
<div class="t c" style="left:636.1px;width:120px;top:354.38px;font-size:10px;letter-spacing:0.5px;-webkit-text-stroke:0.15px;color:#000;">31/12/24</div>
<div class="t c" style="left:635.8px;width:120px;top:367.91px;font-size:10px;letter-spacing:-0.17px;-webkit-text-stroke:0.15px;color:#000;">2024</div>
<div class="t c" style="left:635.8px;width:120px;top:381.44px;font-size:10px;letter-spacing:-0.17px;-webkit-text-stroke:0.15px;color:#000;">366</div>
<div class="t c" style="left:692.1px;width:120px;top:340.85px;font-size:10px;letter-spacing:0.5px;-webkit-text-stroke:0.15px;color:#000;">1/1/25</div>
<div class="t c" style="left:692.1px;width:120px;top:354.38px;font-size:10px;letter-spacing:0.5px;-webkit-text-stroke:0.15px;color:#000;">31/12/25</div>
<div class="t c" style="left:691.7px;width:120px;top:367.91px;font-size:10px;letter-spacing:-0.17px;-webkit-text-stroke:0.15px;color:#000;">2025</div>
<div class="t c" style="left:691.7px;width:120px;top:381.44px;font-size:10px;letter-spacing:-0.17px;-webkit-text-stroke:0.15px;color:#000;">365</div>
<div class="t c" style="left:748.0px;width:120px;top:340.85px;font-size:10px;letter-spacing:0.5px;-webkit-text-stroke:0.15px;color:#000;">1/1/26</div>
<div class="t c" style="left:748.0px;width:120px;top:354.38px;font-size:10px;letter-spacing:0.5px;-webkit-text-stroke:0.15px;color:#000;">31/12/26</div>
<div class="t c" style="left:747.7px;width:120px;top:367.91px;font-size:10px;letter-spacing:-0.17px;-webkit-text-stroke:0.15px;color:#000;">2026</div>
<div class="t c" style="left:747.7px;width:120px;top:381.44px;font-size:10px;letter-spacing:-0.17px;-webkit-text-stroke:0.15px;color:#000;">365</div>
<div class="t c" style="left:804.0px;width:120px;top:340.85px;font-size:10px;letter-spacing:0.5px;-webkit-text-stroke:0.15px;color:#000;">1/1/27</div>
<div class="t c" style="left:804.0px;width:120px;top:354.38px;font-size:10px;letter-spacing:0.5px;-webkit-text-stroke:0.15px;color:#000;">31/12/27</div>
<div class="t c" style="left:803.7px;width:120px;top:367.91px;font-size:10px;letter-spacing:-0.17px;-webkit-text-stroke:0.15px;color:#000;">2027</div>
<div class="t c" style="left:803.7px;width:120px;top:381.44px;font-size:10px;letter-spacing:-0.17px;-webkit-text-stroke:0.15px;color:#000;">365</div>
<div class="t c" style="left:860.0px;width:120px;top:340.85px;font-size:10px;letter-spacing:0.5px;-webkit-text-stroke:0.15px;color:#000;">1/1/28</div>
<div class="t c" style="left:860.0px;width:120px;top:354.38px;font-size:10px;letter-spacing:0.5px;-webkit-text-stroke:0.15px;color:#000;">31/12/28</div>
<div class="t c" style="left:859.6px;width:120px;top:367.91px;font-size:10px;letter-spacing:-0.17px;-webkit-text-stroke:0.15px;color:#000;">2028</div>
<div class="t c" style="left:859.6px;width:120px;top:381.44px;font-size:10px;letter-spacing:-0.17px;-webkit-text-stroke:0.15px;color:#000;">366</div>
<div class="t c" style="left:915.9px;width:120px;top:340.85px;font-size:10px;letter-spacing:0.5px;-webkit-text-stroke:0.15px;color:#000;">1/1/29</div>
<div class="t c" style="left:915.9px;width:120px;top:354.38px;font-size:10px;letter-spacing:0.5px;-webkit-text-stroke:0.15px;color:#000;">31/12/29</div>
<div class="t c" style="left:915.6px;width:120px;top:367.91px;font-size:10px;letter-spacing:-0.17px;-webkit-text-stroke:0.15px;color:#000;">2029</div>
<div class="t c" style="left:915.6px;width:120px;top:381.44px;font-size:10px;letter-spacing:-0.17px;-webkit-text-stroke:0.15px;color:#000;">365</div>
<div class="t c" style="left:971.9px;width:120px;top:340.85px;font-size:10px;letter-spacing:0.5px;-webkit-text-stroke:0.15px;color:#000;">1/1/30</div>
<div class="t c" style="left:971.9px;width:120px;top:354.38px;font-size:10px;letter-spacing:0.5px;-webkit-text-stroke:0.15px;color:#000;">31/12/30</div>
<div class="t c" style="left:971.5px;width:120px;top:367.91px;font-size:10px;letter-spacing:-0.17px;-webkit-text-stroke:0.15px;color:#000;">2030</div>
<div class="t c" style="left:971.5px;width:120px;top:381.44px;font-size:10px;letter-spacing:-0.17px;-webkit-text-stroke:0.15px;color:#000;">365</div>
<div class="t c" style="left:1027.8px;width:120px;top:340.85px;font-size:10px;letter-spacing:0.5px;-webkit-text-stroke:0.15px;color:#000;">1/1/31</div>
<div class="t c" style="left:1027.8px;width:120px;top:354.38px;font-size:10px;letter-spacing:0.5px;-webkit-text-stroke:0.15px;color:#000;">31/12/31</div>
<div class="t c" style="left:1027.5px;width:120px;top:367.91px;font-size:10px;letter-spacing:-0.17px;-webkit-text-stroke:0.15px;color:#000;">2031</div>
<div class="t c" style="left:1027.5px;width:120px;top:381.44px;font-size:10px;letter-spacing:-0.17px;-webkit-text-stroke:0.15px;color:#000;">365</div>
<div class="t c" style="left:1083.8px;width:120px;top:340.85px;font-size:10px;letter-spacing:0.5px;-webkit-text-stroke:0.15px;color:#000;">1/1/32</div>
<div class="t c" style="left:1083.8px;width:120px;top:354.38px;font-size:10px;letter-spacing:0.5px;-webkit-text-stroke:0.15px;color:#000;">31/12/32</div>
<div class="t c" style="left:1083.5px;width:120px;top:367.91px;font-size:10px;letter-spacing:-0.17px;-webkit-text-stroke:0.15px;color:#000;">2032</div>
<div class="t c" style="left:1083.5px;width:120px;top:381.44px;font-size:10px;letter-spacing:-0.17px;-webkit-text-stroke:0.15px;color:#000;">366</div>
<div class="t c" style="left:1139.8px;width:120px;top:340.85px;font-size:10px;letter-spacing:0.5px;-webkit-text-stroke:0.15px;color:#000;">1/1/33</div>
<div class="t c" style="left:1139.8px;width:120px;top:354.38px;font-size:10px;letter-spacing:0.5px;-webkit-text-stroke:0.15px;color:#000;">31/12/33</div>
<div class="t c" style="left:1139.4px;width:120px;top:367.91px;font-size:10px;letter-spacing:-0.17px;-webkit-text-stroke:0.15px;color:#000;">2033</div>
<div class="t c" style="left:1139.4px;width:120px;top:381.44px;font-size:10px;letter-spacing:-0.17px;-webkit-text-stroke:0.15px;color:#000;">365</div>
<div class="a" style="left:66.4px;top:405.83px;width:1161.1px;height:13.53px;background:#d9d9d9;"></div>
<div class="t" style="left:54.5px;top:408.50px;font-size:10px;letter-spacing:0.15px;-webkit-text-stroke:0.15px;color:#000;">x</div>
<div class="t" style="left:68.4px;top:408.50px;font-size:10px;letter-spacing:-0.35px;font-weight:bold;color:#000;">In-Room Dining</div>
<div class="a" style="left:66.4px;top:825.26px;width:1161.1px;height:13.53px;background:#d9d9d9;"></div>
<div class="t" style="left:54.5px;top:827.92px;font-size:10px;letter-spacing:0.15px;-webkit-text-stroke:0.15px;color:#000;">x</div>
<div class="t" style="left:68.4px;top:827.92px;font-size:10px;letter-spacing:-0.35px;font-weight:bold;color:#000;">Restaurant</div>
<div class="t c" style="left:348.6px;width:120px;top:422.03px;font-size:10px;letter-spacing:-0.35px;font-weight:bold;color:#000;">Avg. Pax/room</div>
<div class="a" style="left:373.0px;top:432.89px;width:71.5px;height:13.53px;background:#ffffcc;box-sizing:border-box;border:1px dotted #555;"></div>
<div class="t c" style="left:348.7px;width:120px;top:435.56px;font-size:10px;letter-spacing:-0.17px;-webkit-text-stroke:0.15px;color:#0000ff;">1.70</div>
<div class="a" style="left:373.0px;top:487.01px;width:71.5px;height:13.53px;background:#ffffcc;box-sizing:border-box;border:1px dotted #555;"></div>
<div class="t c" style="left:348.7px;width:120px;top:489.68px;font-size:10px;letter-spacing:-0.17px;-webkit-text-stroke:0.15px;color:#0000ff;">2.5%</div>
<div class="t c" style="left:348.6px;width:120px;top:543.79px;font-size:10px;letter-spacing:-0.35px;font-weight:bold;color:#000;">% of LoB D&amp;A</div>
<div class="a" style="left:373.0px;top:554.66px;width:71.5px;height:13.53px;background:#ffffcc;box-sizing:border-box;border:1px dotted #555;"></div>
<div class="t c" style="left:348.7px;width:120px;top:557.32px;font-size:10px;letter-spacing:-0.17px;-webkit-text-stroke:0.15px;color:#0000ff;">5.0%</div>
<div class="t c" style="left:348.6px;width:120px;top:584.38px;font-size:10px;letter-spacing:-0.35px;font-weight:bold;color:#000;">% Variab. COGS</div>
<div class="a" style="left:373.0px;top:595.25px;width:71.5px;height:13.53px;background:#ffffcc;box-sizing:border-box;border:1px dotted #555;"></div>
<div class="t c" style="left:348.7px;width:120px;top:597.91px;font-size:10px;letter-spacing:-0.17px;-webkit-text-stroke:0.15px;color:#0000ff;">80.0%</div>
<div class="t c" style="left:348.6px;width:120px;top:611.44px;font-size:10px;letter-spacing:-0.35px;font-weight:bold;color:#000;">% Fixed COGS</div>
<div class="a" style="left:373.0px;top:622.31px;width:71.5px;height:13.53px;background:#ffffff;box-sizing:border-box;border:1px dotted #555;"></div>
<div class="t c" style="left:348.7px;width:120px;top:624.97px;font-size:10px;letter-spacing:-0.17px;-webkit-text-stroke:0.15px;color:#000;">20.0%</div>
<div class="t c" style="left:348.6px;width:120px;top:665.56px;font-size:10px;letter-spacing:-0.35px;font-weight:bold;color:#000;">% of LoB D&amp;A</div>
<div class="a" style="left:373.0px;top:676.43px;width:71.5px;height:13.53px;background:#ffffff;box-sizing:border-box;border:1px dotted #555;"></div>
<div class="t c" style="left:348.7px;width:120px;top:679.10px;font-size:10px;letter-spacing:-0.17px;-webkit-text-stroke:0.15px;color:#000;">95.0%</div>
<div class="t c" style="left:348.6px;width:120px;top:760.27px;font-size:10px;letter-spacing:-0.35px;font-weight:bold;color:#000;">% of Total D&amp;A</div>
<div class="a" style="left:373.0px;top:771.14px;width:71.5px;height:13.53px;background:#ffffcc;box-sizing:border-box;border:1px dotted #555;"></div>
<div class="t c" style="left:348.7px;width:120px;top:773.80px;font-size:10px;letter-spacing:-0.17px;-webkit-text-stroke:0.15px;color:#000;">34.9%</div>
<div class="t c" style="left:348.6px;width:120px;top:841.45px;font-size:10px;letter-spacing:-0.35px;font-weight:bold;color:#000;">Avg. Pax/room</div>
<div class="a" style="left:373.0px;top:852.32px;width:71.5px;height:13.53px;background:#ffffcc;box-sizing:border-box;border:1px dotted #555;"></div>
<div class="t c" style="left:348.7px;width:120px;top:854.98px;font-size:10px;letter-spacing:-0.17px;-webkit-text-stroke:0.15px;color:#0000ff;">1.70</div>
<div class="a" style="left:373.0px;top:906.44px;width:71.5px;height:13.53px;background:#ffffcc;box-sizing:border-box;border:1px dotted #555;"></div>
<div class="t c" style="left:348.7px;width:120px;top:909.10px;font-size:10px;letter-spacing:-0.17px;-webkit-text-stroke:0.15px;color:#0000ff;">2.5%</div>
<div class="t c" style="left:348.6px;width:120px;top:963.22px;font-size:10px;letter-spacing:-0.35px;font-weight:bold;color:#000;">% of LoB D&amp;A</div>
<div class="a" style="left:373.0px;top:974.09px;width:71.5px;height:13.53px;background:#ffffcc;box-sizing:border-box;border:1px dotted #555;"></div>
<div class="t c" style="left:348.7px;width:120px;top:976.75px;font-size:10px;letter-spacing:-0.17px;-webkit-text-stroke:0.15px;color:#0000ff;">5.0%</div>
<div class="t c" style="left:348.6px;width:120px;top:1003.81px;font-size:10px;letter-spacing:-0.35px;font-weight:bold;color:#000;">% Variab. COGS</div>
<div class="a" style="left:373.0px;top:1014.68px;width:71.5px;height:13.53px;background:#ffffcc;box-sizing:border-box;border:1px dotted #555;"></div>
<div class="t c" style="left:348.7px;width:120px;top:1017.34px;font-size:10px;letter-spacing:-0.17px;-webkit-text-stroke:0.15px;color:#0000ff;">95.0%</div>
<div class="t c" style="left:348.6px;width:120px;top:1030.88px;font-size:10px;letter-spacing:-0.35px;font-weight:bold;color:#000;">% Fixed COGS</div>
<div class="a" style="left:373.0px;top:1041.74px;width:71.5px;height:13.53px;background:#ffffff;box-sizing:border-box;border:1px dotted #555;"></div>
<div class="t c" style="left:348.7px;width:120px;top:1044.40px;font-size:10px;letter-spacing:-0.17px;-webkit-text-stroke:0.15px;color:#000;">5.0%</div>
<div class="t c" style="left:348.6px;width:120px;top:1084.99px;font-size:10px;letter-spacing:-0.35px;font-weight:bold;color:#000;">% of LoB D&amp;A</div>
<div class="a" style="left:373.0px;top:1095.86px;width:71.5px;height:13.53px;background:#ffffff;box-sizing:border-box;border:1px dotted #555;"></div>
<div class="t c" style="left:348.7px;width:120px;top:1098.53px;font-size:10px;letter-spacing:-0.17px;-webkit-text-stroke:0.15px;color:#000;">95.0%</div>
<div class="t c" style="left:348.6px;width:120px;top:1179.70px;font-size:10px;letter-spacing:-0.35px;font-weight:bold;color:#000;">% of Total D&amp;A</div>
<div class="a" style="left:373.0px;top:1190.57px;width:71.5px;height:13.53px;background:#ffffcc;box-sizing:border-box;border:1px dotted #555;"></div>
<div class="t c" style="left:348.7px;width:120px;top:1193.23px;font-size:10px;letter-spacing:-0.17px;-webkit-text-stroke:0.15px;color:#000;">21.3%</div>
<div class="a" style="left:374.0px;top:432.59px;width:69.5px;height:0;border-top:1.5px solid #222;"></div>
<div class="a" style="left:374.0px;top:554.36px;width:69.5px;height:0;border-top:1.5px solid #222;"></div>
<div class="a" style="left:374.0px;top:594.95px;width:69.5px;height:0;border-top:1.5px solid #222;"></div>
<div class="a" style="left:374.0px;top:622.01px;width:69.5px;height:0;border-top:1.5px solid #222;"></div>
<div class="a" style="left:374.0px;top:676.13px;width:69.5px;height:0;border-top:1.5px solid #222;"></div>
<div class="a" style="left:374.0px;top:770.84px;width:69.5px;height:0;border-top:1.5px solid #222;"></div>
<div class="a" style="left:374.0px;top:852.02px;width:69.5px;height:0;border-top:1.5px solid #222;"></div>
<div class="a" style="left:374.0px;top:973.79px;width:69.5px;height:0;border-top:1.5px solid #222;"></div>
<div class="a" style="left:374.0px;top:1014.38px;width:69.5px;height:0;border-top:1.5px solid #222;"></div>
<div class="a" style="left:374.0px;top:1041.44px;width:69.5px;height:0;border-top:1.5px solid #222;"></div>
<div class="a" style="left:374.0px;top:1095.56px;width:69.5px;height:0;border-top:1.5px solid #222;"></div>
<div class="a" style="left:374.0px;top:1190.27px;width:69.5px;height:0;border-top:1.5px solid #222;"></div>
<div class="a" style="left:309.0px;top:594.25px;width:64.0px;height:0;border-top:1px solid #222;"></div>
<div class="a" style="left:309.0px;top:1013.68px;width:64.0px;height:0;border-top:1px solid #222;"></div>
<div class="a" style="left:667.9px;top:635.84px;width:56.0px;height:13.53px;background:#ffffcc;box-sizing:border-box;border-right:1px dotted #555;border-bottom:1px dotted #555;"></div>
<div class="a" style="left:667.9px;top:703.49px;width:56.0px;height:13.53px;background:#ffffcc;box-sizing:border-box;border-right:1px dotted #555;border-bottom:1px dotted #555;"></div>
<div class="a" style="left:667.9px;top:1028.21px;width:56.0px;height:13.53px;background:#ffffcc;box-sizing:border-box;border-right:1px dotted #555;border-bottom:1px dotted #555;"></div>
<div class="a" style="left:667.9px;top:1055.27px;width:56.0px;height:13.53px;background:#ffffcc;box-sizing:border-box;border-right:1px dotted #555;border-bottom:1px dotted #555;"></div>
<div class="a" style="left:667.9px;top:1122.92px;width:56.0px;height:13.53px;background:#ffffcc;box-sizing:border-box;border-right:1px dotted #555;border-bottom:1px dotted #555;"></div>
<div class="a" style="left:66.4px;top:500.54px;width:1161.1px;height:0;border-top:1px dotted #444;"></div>
<div class="a" style="left:66.4px;top:581.72px;width:1161.1px;height:0;border-top:1px dotted #444;"></div>
<div class="a" style="left:66.4px;top:608.78px;width:1161.1px;height:0;border-top:1px dotted #444;"></div>
<div class="a" style="left:66.4px;top:635.84px;width:1161.1px;height:0;border-top:1px dotted #444;"></div>
<div class="a" style="left:66.4px;top:703.49px;width:1161.1px;height:0;border-top:1px dotted #444;"></div>
<div class="a" style="left:66.4px;top:784.67px;width:1161.1px;height:0;border-top:1px dotted #444;"></div>
<div class="a" style="left:66.4px;top:919.97px;width:1161.1px;height:0;border-top:1px dotted #444;"></div>
<div class="a" style="left:66.4px;top:1001.15px;width:1161.1px;height:0;border-top:1px dotted #444;"></div>
<div class="a" style="left:66.4px;top:1028.21px;width:1161.1px;height:0;border-top:1px dotted #444;"></div>
<div class="a" style="left:66.4px;top:1055.27px;width:1161.1px;height:0;border-top:1px dotted #444;"></div>
<div class="a" style="left:66.4px;top:1122.92px;width:1161.1px;height:0;border-top:1px dotted #444;"></div>
<div class="a" style="left:66.4px;top:1204.10px;width:1161.1px;height:0;border-top:1px dotted #444;"></div>
<div class="a" style="left:51.5px;top:716.22px;width:1329.1px;height:0;border-top:1px dashed #9a9a9a;"></div>
<div class="a" style="left:667.2px;top:325.6px;width:0;height:916.9px;border-left:1px dotted #333;"></div>
<div class="t" style="left:68.4px;top:435.56px;font-size:10px;letter-spacing:-0.35px;font-weight:bold;color:#000;">Total Annual Guests</div>
<div class="t c" style="left:280.8px;width:120px;top:435.56px;font-size:10px;letter-spacing:-0.35px;font-weight:bold;color:#000;">#</div>
<div class="t" style="left:83.4px;top:449.08px;font-size:10px;letter-spacing:0px;font-style:italic;-webkit-text-stroke:0.15px;color:#000;">Average IRD orders/night/guest</div>
<div class="t c" style="left:280.8px;width:120px;top:449.08px;font-size:10px;letter-spacing:-0.35px;font-weight:bold;color:#000;">#</div>
<div class="t" style="left:68.4px;top:476.15px;font-size:10px;letter-spacing:-0.35px;font-weight:bold;color:#000;">Total IRD Orders</div>
<div class="t c" style="left:280.8px;width:120px;top:476.15px;font-size:10px;letter-spacing:-0.35px;font-weight:bold;color:#000;">#</div>
<div class="t" style="left:68.4px;top:489.68px;font-size:10px;letter-spacing:0.15px;-webkit-text-stroke:0.15px;color:#000;">Average Ticket Price</div>
<div class="t c" style="left:281.1px;width:120px;top:489.68px;font-size:10px;letter-spacing:0.15px;-webkit-text-stroke:0.15px;color:#000;">$</div>
<div class="t" style="left:68.4px;top:503.20px;font-size:10px;letter-spacing:-0.35px;font-weight:bold;color:#000;">Revenues</div>
<div class="t c" style="left:280.8px;width:120px;top:503.20px;font-size:10px;letter-spacing:-0.35px;font-weight:bold;color:#000;">$000's</div>
<div class="t" style="left:68.4px;top:516.73px;font-size:10px;letter-spacing:0px;font-style:italic;-webkit-text-stroke:0.15px;color:#000;">Growth</div>
<div class="t c" style="left:281.0px;width:120px;top:516.73px;font-size:10px;letter-spacing:0px;font-style:italic;-webkit-text-stroke:0.15px;color:#000;">Var. %</div>
<div class="t" style="left:68.4px;top:543.79px;font-size:10px;letter-spacing:0.15px;-webkit-text-stroke:0.15px;color:#000;">COGS (incl. D&amp;A)</div>
<div class="t c" style="left:281.1px;width:120px;top:543.79px;font-size:10px;letter-spacing:0.15px;-webkit-text-stroke:0.15px;color:#000;">$000's</div>
<div class="t" style="left:68.4px;top:557.32px;font-size:10px;letter-spacing:0.15px;-webkit-text-stroke:0.15px;color:#000;">D&amp;A in COGS</div>
<div class="t c" style="left:281.1px;width:120px;top:557.32px;font-size:10px;letter-spacing:0.15px;-webkit-text-stroke:0.15px;color:#000;">$000's</div>
<div class="t" style="left:68.4px;top:570.86px;font-size:10px;letter-spacing:-0.35px;font-weight:bold;color:#000;">COGS (excl. D&amp;A)</div>
<div class="t c" style="left:281.1px;width:120px;top:570.86px;font-size:10px;letter-spacing:0.15px;-webkit-text-stroke:0.15px;color:#000;">$000's</div>
<div class="t" style="left:68.4px;top:597.91px;font-size:10px;letter-spacing:-0.35px;font-weight:bold;color:#000;">Variable COGS (excl. D&amp;A)</div>
<div class="t c" style="left:281.1px;width:120px;top:597.91px;font-size:10px;letter-spacing:0.15px;-webkit-text-stroke:0.15px;color:#000;">$000's</div>
<div class="t" style="left:68.4px;top:611.44px;font-size:10px;letter-spacing:0px;font-style:italic;-webkit-text-stroke:0.15px;color:#000;">Average cost per order</div>
<div class="t c" style="left:281.0px;width:120px;top:611.44px;font-size:10px;letter-spacing:0px;font-style:italic;-webkit-text-stroke:0.15px;color:#000;">$</div>
<div class="t" style="left:68.4px;top:624.97px;font-size:10px;letter-spacing:-0.35px;font-weight:bold;color:#000;">Fixed COGS (excl. D&amp;A)</div>
<div class="t c" style="left:281.1px;width:120px;top:624.97px;font-size:10px;letter-spacing:0.15px;-webkit-text-stroke:0.15px;color:#000;">$000's</div>
<div class="t" style="left:68.4px;top:638.50px;font-size:10px;letter-spacing:0px;font-style:italic;-webkit-text-stroke:0.15px;color:#000;">Growth</div>
<div class="t c" style="left:281.0px;width:120px;top:638.50px;font-size:10px;letter-spacing:0px;font-style:italic;-webkit-text-stroke:0.15px;color:#000;">Var. %</div>
<div class="t" style="left:68.4px;top:665.56px;font-size:10px;letter-spacing:0.15px;-webkit-text-stroke:0.15px;color:#000;">SG&amp;A (incl. D&amp;A)</div>
<div class="t c" style="left:281.1px;width:120px;top:665.56px;font-size:10px;letter-spacing:0.15px;-webkit-text-stroke:0.15px;color:#000;">$000's</div>
<div class="t" style="left:68.4px;top:679.10px;font-size:10px;letter-spacing:0.15px;-webkit-text-stroke:0.15px;color:#000;">D&amp;A in SG&amp;A</div>
<div class="t c" style="left:281.1px;width:120px;top:679.10px;font-size:10px;letter-spacing:0.15px;-webkit-text-stroke:0.15px;color:#000;">$000's</div>
<div class="t" style="left:68.4px;top:692.62px;font-size:10px;letter-spacing:-0.35px;font-weight:bold;color:#000;">SG&amp;A (excl. D&amp;A)</div>
<div class="t c" style="left:281.1px;width:120px;top:692.62px;font-size:10px;letter-spacing:0.15px;-webkit-text-stroke:0.15px;color:#000;">$000's</div>
<div class="t" style="left:68.4px;top:706.15px;font-size:10px;letter-spacing:0px;font-style:italic;-webkit-text-stroke:0.15px;color:#000;">Growth</div>
<div class="t c" style="left:281.0px;width:120px;top:706.15px;font-size:10px;letter-spacing:0px;font-style:italic;-webkit-text-stroke:0.15px;color:#000;">$</div>
<div class="t" style="left:68.4px;top:733.21px;font-size:10px;letter-spacing:-0.35px;font-weight:bold;color:#000;">EBITDA</div>
<div class="t c" style="left:280.8px;width:120px;top:733.21px;font-size:10px;letter-spacing:-0.35px;font-weight:bold;color:#000;">$000's</div>
<div class="t" style="left:68.4px;top:746.74px;font-size:10px;letter-spacing:0px;font-style:italic;-webkit-text-stroke:0.15px;color:#000;">EBITDA Margin</div>
<div class="t c" style="left:281.0px;width:120px;top:746.74px;font-size:10px;letter-spacing:0px;font-style:italic;-webkit-text-stroke:0.15px;color:#000;">Var. %</div>
<div class="t" style="left:68.4px;top:773.80px;font-size:10px;letter-spacing:0.15px;-webkit-text-stroke:0.15px;color:#000;">D&amp;A</div>
<div class="t c" style="left:281.1px;width:120px;top:773.80px;font-size:10px;letter-spacing:0.15px;-webkit-text-stroke:0.15px;color:#000;">$000's</div>
<div class="t" style="left:68.4px;top:787.33px;font-size:10px;letter-spacing:-0.35px;font-weight:bold;color:#000;">EBIT</div>
<div class="t c" style="left:280.8px;width:120px;top:787.33px;font-size:10px;letter-spacing:-0.35px;font-weight:bold;color:#000;">$000's</div>
<div class="t" style="left:68.4px;top:800.86px;font-size:10px;letter-spacing:0px;font-style:italic;-webkit-text-stroke:0.15px;color:#000;">EBIT Margin</div>
<div class="t c" style="left:281.0px;width:120px;top:800.86px;font-size:10px;letter-spacing:0px;font-style:italic;-webkit-text-stroke:0.15px;color:#000;">Var. %</div>
<div class="t" style="left:68.4px;top:854.98px;font-size:10px;letter-spacing:-0.35px;font-weight:bold;color:#000;">Total Annual Guests</div>
<div class="t c" style="left:280.8px;width:120px;top:854.98px;font-size:10px;letter-spacing:-0.35px;font-weight:bold;color:#000;">#</div>
<div class="t" style="left:83.4px;top:868.51px;font-size:10px;letter-spacing:0px;font-style:italic;-webkit-text-stroke:0.15px;color:#000;">Average restaurant clients/night/guest</div>
<div class="t c" style="left:280.8px;width:120px;top:868.51px;font-size:10px;letter-spacing:-0.35px;font-weight:bold;color:#000;">#</div>
<div class="t" style="left:68.4px;top:895.57px;font-size:10px;letter-spacing:-0.35px;font-weight:bold;color:#000;">Total Restaurant Clients</div>
<div class="t c" style="left:280.8px;width:120px;top:895.57px;font-size:10px;letter-spacing:-0.35px;font-weight:bold;color:#000;">#</div>
<div class="t" style="left:68.4px;top:909.10px;font-size:10px;letter-spacing:0.15px;-webkit-text-stroke:0.15px;color:#000;">Average Ticket Price</div>
<div class="t c" style="left:281.1px;width:120px;top:909.10px;font-size:10px;letter-spacing:0.15px;-webkit-text-stroke:0.15px;color:#000;">$</div>
<div class="t" style="left:68.4px;top:922.63px;font-size:10px;letter-spacing:-0.35px;font-weight:bold;color:#000;">Revenues</div>
<div class="t c" style="left:280.8px;width:120px;top:922.63px;font-size:10px;letter-spacing:-0.35px;font-weight:bold;color:#000;">$000's</div>
<div class="t" style="left:68.4px;top:936.16px;font-size:10px;letter-spacing:0px;font-style:italic;-webkit-text-stroke:0.15px;color:#000;">Growth</div>
<div class="t c" style="left:281.0px;width:120px;top:936.16px;font-size:10px;letter-spacing:0px;font-style:italic;-webkit-text-stroke:0.15px;color:#000;">Var. %</div>
<div class="t" style="left:68.4px;top:963.22px;font-size:10px;letter-spacing:0.15px;-webkit-text-stroke:0.15px;color:#000;">Cost of Vehicle (incl. D&amp;A)</div>
<div class="t c" style="left:281.1px;width:120px;top:963.22px;font-size:10px;letter-spacing:0.15px;-webkit-text-stroke:0.15px;color:#000;">$000's</div>
<div class="t" style="left:68.4px;top:976.75px;font-size:10px;letter-spacing:0.15px;-webkit-text-stroke:0.15px;color:#000;">D&amp;A in COGS</div>
<div class="t c" style="left:281.1px;width:120px;top:976.75px;font-size:10px;letter-spacing:0.15px;-webkit-text-stroke:0.15px;color:#000;">$000's</div>
<div class="t" style="left:68.4px;top:990.28px;font-size:10px;letter-spacing:-0.35px;font-weight:bold;color:#000;">COGS (excl. D&amp;A)</div>
<div class="t c" style="left:281.1px;width:120px;top:990.28px;font-size:10px;letter-spacing:0.15px;-webkit-text-stroke:0.15px;color:#000;">$000's</div>
<div class="t" style="left:68.4px;top:1017.34px;font-size:10px;letter-spacing:-0.35px;font-weight:bold;color:#000;">Variable COGS (excl. D&amp;A)</div>
<div class="t c" style="left:281.1px;width:120px;top:1017.34px;font-size:10px;letter-spacing:0.15px;-webkit-text-stroke:0.15px;color:#000;">$000's</div>
<div class="t" style="left:68.4px;top:1030.88px;font-size:10px;letter-spacing:0px;font-style:italic;-webkit-text-stroke:0.15px;color:#000;">Average cost per client</div>
<div class="t c" style="left:281.0px;width:120px;top:1030.88px;font-size:10px;letter-spacing:0px;font-style:italic;-webkit-text-stroke:0.15px;color:#000;">$</div>
<div class="t" style="left:68.4px;top:1044.40px;font-size:10px;letter-spacing:-0.35px;font-weight:bold;color:#000;">Fixed COGS (excl. D&amp;A)</div>
<div class="t c" style="left:281.1px;width:120px;top:1044.40px;font-size:10px;letter-spacing:0.15px;-webkit-text-stroke:0.15px;color:#000;">$000's</div>
<div class="t" style="left:68.4px;top:1057.93px;font-size:10px;letter-spacing:0px;font-style:italic;-webkit-text-stroke:0.15px;color:#000;">Growth</div>
<div class="t c" style="left:281.0px;width:120px;top:1057.93px;font-size:10px;letter-spacing:0px;font-style:italic;-webkit-text-stroke:0.15px;color:#000;">Var. %</div>
<div class="t" style="left:68.4px;top:1084.99px;font-size:10px;letter-spacing:0.15px;-webkit-text-stroke:0.15px;color:#000;">SG&amp;A (incl. D&amp;A)</div>
<div class="t c" style="left:281.1px;width:120px;top:1084.99px;font-size:10px;letter-spacing:0.15px;-webkit-text-stroke:0.15px;color:#000;">$000's</div>
<div class="t" style="left:68.4px;top:1098.53px;font-size:10px;letter-spacing:0.15px;-webkit-text-stroke:0.15px;color:#000;">D&amp;A in SG&amp;A</div>
<div class="t c" style="left:281.1px;width:120px;top:1098.53px;font-size:10px;letter-spacing:0.15px;-webkit-text-stroke:0.15px;color:#000;">$000's</div>
<div class="t" style="left:68.4px;top:1112.05px;font-size:10px;letter-spacing:-0.35px;font-weight:bold;color:#000;">SG&amp;A (excl. D&amp;A)</div>
<div class="t c" style="left:281.1px;width:120px;top:1112.05px;font-size:10px;letter-spacing:0.15px;-webkit-text-stroke:0.15px;color:#000;">$000's</div>
<div class="t" style="left:68.4px;top:1125.59px;font-size:10px;letter-spacing:0px;font-style:italic;-webkit-text-stroke:0.15px;color:#000;">Growth</div>
<div class="t c" style="left:281.0px;width:120px;top:1125.59px;font-size:10px;letter-spacing:0px;font-style:italic;-webkit-text-stroke:0.15px;color:#000;">$</div>
<div class="t" style="left:68.4px;top:1152.64px;font-size:10px;letter-spacing:-0.35px;font-weight:bold;color:#000;">EBITDA</div>
<div class="t c" style="left:280.8px;width:120px;top:1152.64px;font-size:10px;letter-spacing:-0.35px;font-weight:bold;color:#000;">$000's</div>
<div class="t" style="left:68.4px;top:1166.17px;font-size:10px;letter-spacing:0px;font-style:italic;-webkit-text-stroke:0.15px;color:#000;">EBITDA Margin</div>
<div class="t c" style="left:281.0px;width:120px;top:1166.17px;font-size:10px;letter-spacing:0px;font-style:italic;-webkit-text-stroke:0.15px;color:#000;">Var. %</div>
<div class="t" style="left:68.4px;top:1193.23px;font-size:10px;letter-spacing:0.15px;-webkit-text-stroke:0.15px;color:#000;">D&amp;A</div>
<div class="t c" style="left:281.1px;width:120px;top:1193.23px;font-size:10px;letter-spacing:0.15px;-webkit-text-stroke:0.15px;color:#000;">$000's</div>
<div class="t" style="left:68.4px;top:1206.76px;font-size:10px;letter-spacing:-0.35px;font-weight:bold;color:#000;">EBIT</div>
<div class="t c" style="left:280.8px;width:120px;top:1206.76px;font-size:10px;letter-spacing:-0.35px;font-weight:bold;color:#000;">$000's</div>
<div class="t" style="left:68.4px;top:1220.30px;font-size:10px;letter-spacing:0px;font-style:italic;-webkit-text-stroke:0.15px;color:#000;">EBIT Margin</div>
<div class="t c" style="left:281.0px;width:120px;top:1220.30px;font-size:10px;letter-spacing:0px;font-style:italic;-webkit-text-stroke:0.15px;color:#000;">Var. %</div>
<div class="t" style="right:895.17px;top:435.56px;font-size:10px;letter-spacing:-0.17px;-webkit-text-stroke:0.15px;color:#000;">113,241</div>
<div class="t" style="right:839.21px;top:435.56px;font-size:10px;letter-spacing:-0.17px;-webkit-text-stroke:0.15px;color:#000;">119,446</div>
<div class="t" style="right:783.25px;top:435.56px;font-size:10px;letter-spacing:-0.17px;-webkit-text-stroke:0.15px;color:#000;">125,651</div>
<div class="t" style="right:727.28px;top:435.56px;font-size:10px;letter-spacing:-0.17px;-webkit-text-stroke:0.15px;color:#000;">132,218</div>
<div class="t" style="right:671.32px;top:435.56px;font-size:10px;letter-spacing:-0.17px;-webkit-text-stroke:0.15px;color:#000;">134,959</div>
<div class="t" style="right:615.36px;top:435.56px;font-size:10px;letter-spacing:-0.17px;-webkit-text-stroke:0.15px;color:#000;">139,613</div>
<div class="t" style="right:559.40px;top:435.56px;font-size:10px;letter-spacing:-0.17px;-webkit-text-stroke:0.15px;color:#000;">143,491</div>
<div class="t" style="right:503.44px;top:435.56px;font-size:10px;letter-spacing:-0.17px;-webkit-text-stroke:0.15px;color:#000;">147,773</div>
<div class="t" style="right:447.48px;top:435.56px;font-size:10px;letter-spacing:-0.17px;-webkit-text-stroke:0.15px;color:#000;">147,369</div>
<div class="t" style="right:391.51px;top:435.56px;font-size:10px;letter-spacing:-0.17px;-webkit-text-stroke:0.15px;color:#000;">147,369</div>
<div class="t" style="right:335.55px;top:435.56px;font-size:10px;letter-spacing:-0.17px;-webkit-text-stroke:0.15px;color:#000;">147,369</div>
<div class="t" style="right:279.59px;top:435.56px;font-size:10px;letter-spacing:-0.17px;-webkit-text-stroke:0.15px;color:#000;">147,773</div>
<div class="t" style="right:223.63px;top:435.56px;font-size:10px;letter-spacing:-0.17px;-webkit-text-stroke:0.15px;color:#000;">147,369</div>
<div class="t" style="right:894.96px;top:449.08px;font-size:10px;letter-spacing:-0.38px;font-weight:bold;font-style:italic;color:#0000ff;">0.83</div>
<div class="t" style="right:839.00px;top:449.08px;font-size:10px;letter-spacing:-0.38px;font-weight:bold;font-style:italic;color:#0000ff;">0.72</div>
<div class="t" style="right:783.04px;top:449.08px;font-size:10px;letter-spacing:-0.38px;font-weight:bold;font-style:italic;color:#0000ff;">0.75</div>
<div class="t" style="right:727.07px;top:449.08px;font-size:10px;letter-spacing:-0.38px;font-weight:bold;font-style:italic;color:#000;">0.77</div>
<div class="t" style="right:671.11px;top:449.08px;font-size:10px;letter-spacing:-0.38px;font-weight:bold;font-style:italic;color:#000;">0.77</div>
<div class="t" style="right:615.15px;top:449.08px;font-size:10px;letter-spacing:-0.38px;font-weight:bold;font-style:italic;color:#000;">0.77</div>
<div class="t" style="right:559.19px;top:449.08px;font-size:10px;letter-spacing:-0.38px;font-weight:bold;font-style:italic;color:#000;">0.77</div>
<div class="t" style="right:503.23px;top:449.08px;font-size:10px;letter-spacing:-0.38px;font-weight:bold;font-style:italic;color:#000;">0.77</div>
<div class="t" style="right:447.27px;top:449.08px;font-size:10px;letter-spacing:-0.38px;font-weight:bold;font-style:italic;color:#000;">0.77</div>
<div class="t" style="right:391.30px;top:449.08px;font-size:10px;letter-spacing:-0.38px;font-weight:bold;font-style:italic;color:#000;">0.77</div>
<div class="t" style="right:335.34px;top:449.08px;font-size:10px;letter-spacing:-0.38px;font-weight:bold;font-style:italic;color:#000;">0.77</div>
<div class="t" style="right:279.38px;top:449.08px;font-size:10px;letter-spacing:-0.38px;font-weight:bold;font-style:italic;color:#000;">0.77</div>
<div class="t" style="right:223.42px;top:449.08px;font-size:10px;letter-spacing:-0.38px;font-weight:bold;font-style:italic;color:#000;">0.77</div>
<div class="t" style="right:895.17px;top:476.15px;font-size:10px;letter-spacing:-0.17px;font-weight:bold;color:#0000ff;">93,990.2</div>
<div class="t" style="right:839.21px;top:476.15px;font-size:10px;letter-spacing:-0.17px;font-weight:bold;color:#0000ff;">86,001.3</div>
<div class="t" style="right:783.25px;top:476.15px;font-size:10px;letter-spacing:-0.17px;font-weight:bold;color:#0000ff;">94,238.4</div>
<div class="t" style="right:727.28px;top:476.15px;font-size:10px;letter-spacing:-0.17px;font-weight:bold;color:#000;">101,366.8</div>
<div class="t" style="right:671.32px;top:476.15px;font-size:10px;letter-spacing:-0.17px;font-weight:bold;color:#000;">103,468.4</div>
<div class="t" style="right:615.36px;top:476.15px;font-size:10px;letter-spacing:-0.17px;font-weight:bold;color:#000;">107,036.3</div>
<div class="t" style="right:559.40px;top:476.15px;font-size:10px;letter-spacing:-0.17px;font-weight:bold;color:#000;">110,009.5</div>
<div class="t" style="right:503.44px;top:476.15px;font-size:10px;letter-spacing:-0.17px;font-weight:bold;color:#000;">113,292.3</div>
<div class="t" style="right:447.48px;top:476.15px;font-size:10px;letter-spacing:-0.17px;font-weight:bold;color:#000;">112,982.7</div>
<div class="t" style="right:391.51px;top:476.15px;font-size:10px;letter-spacing:-0.17px;font-weight:bold;color:#000;">112,982.7</div>
<div class="t" style="right:335.55px;top:476.15px;font-size:10px;letter-spacing:-0.17px;font-weight:bold;color:#000;">112,982.7</div>
<div class="t" style="right:279.59px;top:476.15px;font-size:10px;letter-spacing:-0.17px;font-weight:bold;color:#000;">113,292.3</div>
<div class="t" style="right:223.63px;top:476.15px;font-size:10px;letter-spacing:-0.17px;font-weight:bold;color:#000;">112,982.7</div>
<div class="t" style="right:895.17px;top:489.68px;font-size:10px;letter-spacing:-0.17px;-webkit-text-stroke:0.15px;color:#0000ff;">24.0</div>
<div class="t" style="right:839.21px;top:489.68px;font-size:10px;letter-spacing:-0.17px;-webkit-text-stroke:0.15px;color:#0000ff;">26.5</div>
<div class="t" style="right:783.25px;top:489.68px;font-size:10px;letter-spacing:-0.17px;-webkit-text-stroke:0.15px;color:#0000ff;">26.8</div>
<div class="t" style="right:727.28px;top:489.68px;font-size:10px;letter-spacing:-0.17px;-webkit-text-stroke:0.15px;color:#000;">27.5</div>
<div class="t" style="right:671.32px;top:489.68px;font-size:10px;letter-spacing:-0.17px;-webkit-text-stroke:0.15px;color:#000;">28.2</div>
<div class="t" style="right:615.36px;top:489.68px;font-size:10px;letter-spacing:-0.17px;-webkit-text-stroke:0.15px;color:#000;">28.9</div>
<div class="t" style="right:559.40px;top:489.68px;font-size:10px;letter-spacing:-0.17px;-webkit-text-stroke:0.15px;color:#000;">29.6</div>
<div class="t" style="right:503.44px;top:489.68px;font-size:10px;letter-spacing:-0.17px;-webkit-text-stroke:0.15px;color:#000;">30.3</div>
<div class="t" style="right:447.48px;top:489.68px;font-size:10px;letter-spacing:-0.17px;-webkit-text-stroke:0.15px;color:#000;">31.1</div>
<div class="t" style="right:391.51px;top:489.68px;font-size:10px;letter-spacing:-0.17px;-webkit-text-stroke:0.15px;color:#000;">31.9</div>
<div class="t" style="right:335.55px;top:489.68px;font-size:10px;letter-spacing:-0.17px;-webkit-text-stroke:0.15px;color:#000;">32.7</div>
<div class="t" style="right:279.59px;top:489.68px;font-size:10px;letter-spacing:-0.17px;-webkit-text-stroke:0.15px;color:#000;">33.5</div>
<div class="t" style="right:223.63px;top:489.68px;font-size:10px;letter-spacing:-0.17px;-webkit-text-stroke:0.15px;color:#000;">34.3</div>
<div class="t" style="right:895.17px;top:503.20px;font-size:10px;letter-spacing:-0.17px;font-weight:bold;color:#000;">2,255.8</div>
<div class="t" style="right:839.21px;top:503.20px;font-size:10px;letter-spacing:-0.17px;font-weight:bold;color:#000;">2,279.0</div>
<div class="t" style="right:783.25px;top:503.20px;font-size:10px;letter-spacing:-0.17px;font-weight:bold;color:#000;">2,525.6</div>
<div class="t" style="right:727.28px;top:503.20px;font-size:10px;letter-spacing:-0.17px;font-weight:bold;color:#000;">2,784.5</div>
<div class="t" style="right:671.32px;top:503.20px;font-size:10px;letter-spacing:-0.17px;font-weight:bold;color:#000;">2,913.3</div>
<div class="t" style="right:615.36px;top:503.20px;font-size:10px;letter-spacing:-0.17px;font-weight:bold;color:#000;">3,089.1</div>
<div class="t" style="right:559.40px;top:503.20px;font-size:10px;letter-spacing:-0.17px;font-weight:bold;color:#000;">3,254.3</div>
<div class="t" style="right:503.44px;top:503.20px;font-size:10px;letter-spacing:-0.17px;font-weight:bold;color:#000;">3,435.2</div>
<div class="t" style="right:447.48px;top:503.20px;font-size:10px;letter-spacing:-0.17px;font-weight:bold;color:#000;">3,511.5</div>
<div class="t" style="right:391.51px;top:503.20px;font-size:10px;letter-spacing:-0.17px;font-weight:bold;color:#000;">3,599.3</div>
<div class="t" style="right:335.55px;top:503.20px;font-size:10px;letter-spacing:-0.17px;font-weight:bold;color:#000;">3,689.2</div>
<div class="t" style="right:279.59px;top:503.20px;font-size:10px;letter-spacing:-0.17px;font-weight:bold;color:#000;">3,791.8</div>
<div class="t" style="right:223.63px;top:503.20px;font-size:10px;letter-spacing:-0.17px;font-weight:bold;color:#000;">3,876.0</div>
<div class="t" style="right:837.28px;top:516.73px;font-size:10px;letter-spacing:-0.3px;font-style:italic;-webkit-text-stroke:0.15px;color:#000;">1.0%</div>
<div class="t" style="right:781.32px;top:516.73px;font-size:10px;letter-spacing:-0.3px;font-style:italic;-webkit-text-stroke:0.15px;color:#000;">10.8%</div>
<div class="t" style="right:725.35px;top:516.73px;font-size:10px;letter-spacing:-0.3px;font-style:italic;-webkit-text-stroke:0.15px;color:#000;">10.3%</div>
<div class="t" style="right:669.39px;top:516.73px;font-size:10px;letter-spacing:-0.3px;font-style:italic;-webkit-text-stroke:0.15px;color:#000;">4.6%</div>
<div class="t" style="right:613.43px;top:516.73px;font-size:10px;letter-spacing:-0.3px;font-style:italic;-webkit-text-stroke:0.15px;color:#000;">6.0%</div>
<div class="t" style="right:557.47px;top:516.73px;font-size:10px;letter-spacing:-0.3px;font-style:italic;-webkit-text-stroke:0.15px;color:#000;">5.3%</div>
<div class="t" style="right:501.51px;top:516.73px;font-size:10px;letter-spacing:-0.3px;font-style:italic;-webkit-text-stroke:0.15px;color:#000;">5.6%</div>
<div class="t" style="right:445.55px;top:516.73px;font-size:10px;letter-spacing:-0.3px;font-style:italic;-webkit-text-stroke:0.15px;color:#000;">2.2%</div>
<div class="t" style="right:389.58px;top:516.73px;font-size:10px;letter-spacing:-0.3px;font-style:italic;-webkit-text-stroke:0.15px;color:#000;">2.5%</div>
<div class="t" style="right:333.62px;top:516.73px;font-size:10px;letter-spacing:-0.3px;font-style:italic;-webkit-text-stroke:0.15px;color:#000;">2.5%</div>
<div class="t" style="right:277.66px;top:516.73px;font-size:10px;letter-spacing:-0.3px;font-style:italic;-webkit-text-stroke:0.15px;color:#000;">2.8%</div>
<div class="t" style="right:221.70px;top:516.73px;font-size:10px;letter-spacing:-0.3px;font-style:italic;-webkit-text-stroke:0.15px;color:#000;">2.2%</div>
<div class="t" style="right:895.17px;top:543.79px;font-size:10px;letter-spacing:-0.17px;-webkit-text-stroke:0.15px;color:#0000ff;">945.0</div>
<div class="t" style="right:839.21px;top:543.79px;font-size:10px;letter-spacing:-0.17px;-webkit-text-stroke:0.15px;color:#0000ff;">965.0</div>
<div class="t" style="right:783.25px;top:543.79px;font-size:10px;letter-spacing:-0.17px;-webkit-text-stroke:0.15px;color:#0000ff;">976.0</div>
<div class="t" style="right:727.28px;top:543.79px;font-size:10px;letter-spacing:-0.17px;-webkit-text-stroke:0.15px;color:#000;">1,092.2</div>
<div class="t" style="right:671.32px;top:543.79px;font-size:10px;letter-spacing:-0.17px;-webkit-text-stroke:0.15px;color:#000;">1,155.5</div>
<div class="t" style="right:615.36px;top:543.79px;font-size:10px;letter-spacing:-0.17px;-webkit-text-stroke:0.15px;color:#000;">1,232.2</div>
<div class="t" style="right:559.40px;top:543.79px;font-size:10px;letter-spacing:-0.17px;-webkit-text-stroke:0.15px;color:#000;">1,306.0</div>
<div class="t" style="right:503.44px;top:543.79px;font-size:10px;letter-spacing:-0.17px;-webkit-text-stroke:0.15px;color:#000;">1,384.0</div>
<div class="t" style="right:447.48px;top:543.79px;font-size:10px;letter-spacing:-0.17px;-webkit-text-stroke:0.15px;color:#000;">1,422.5</div>
<div class="t" style="right:391.51px;top:543.79px;font-size:10px;letter-spacing:-0.17px;-webkit-text-stroke:0.15px;color:#000;">1,462.5</div>
<div class="t" style="right:335.55px;top:543.79px;font-size:10px;letter-spacing:-0.17px;-webkit-text-stroke:0.15px;color:#000;">1,500.7</div>
<div class="t" style="right:279.59px;top:543.79px;font-size:10px;letter-spacing:-0.17px;-webkit-text-stroke:0.15px;color:#000;">1,541.5</div>
<div class="t" style="right:223.63px;top:543.79px;font-size:10px;letter-spacing:-0.17px;-webkit-text-stroke:0.15px;color:#000;">1,580.8</div>
<div class="t" style="right:891.87px;top:557.32px;font-size:10px;letter-spacing:-0.17px;-webkit-text-stroke:0.15px;color:#000;">(20.2)</div>
<div class="t" style="right:835.91px;top:557.32px;font-size:10px;letter-spacing:-0.17px;-webkit-text-stroke:0.15px;color:#000;">(25.4)</div>
<div class="t" style="right:779.95px;top:557.32px;font-size:10px;letter-spacing:-0.17px;-webkit-text-stroke:0.15px;color:#000;">(28.0)</div>
<div class="t" style="right:723.98px;top:557.32px;font-size:10px;letter-spacing:-0.17px;-webkit-text-stroke:0.15px;color:#000;">(27.5)</div>
<div class="t" style="right:668.02px;top:557.32px;font-size:10px;letter-spacing:-0.17px;-webkit-text-stroke:0.15px;color:#000;">(29.6)</div>
<div class="t" style="right:612.06px;top:557.32px;font-size:10px;letter-spacing:-0.17px;-webkit-text-stroke:0.15px;color:#000;">(31.8)</div>
<div class="t" style="right:556.10px;top:557.32px;font-size:10px;letter-spacing:-0.17px;-webkit-text-stroke:0.15px;color:#000;">(34.1)</div>
<div class="t" style="right:500.14px;top:557.32px;font-size:10px;letter-spacing:-0.17px;-webkit-text-stroke:0.15px;color:#000;">(36.5)</div>
<div class="t" style="right:444.18px;top:557.32px;font-size:10px;letter-spacing:-0.17px;-webkit-text-stroke:0.15px;color:#000;">(39.1)</div>
<div class="t" style="right:388.21px;top:557.32px;font-size:10px;letter-spacing:-0.17px;-webkit-text-stroke:0.15px;color:#000;">(41.7)</div>
<div class="t" style="right:332.25px;top:557.32px;font-size:10px;letter-spacing:-0.17px;-webkit-text-stroke:0.15px;color:#000;">(44.4)</div>
<div class="t" style="right:276.29px;top:557.32px;font-size:10px;letter-spacing:-0.17px;-webkit-text-stroke:0.15px;color:#000;">(42.4)</div>
<div class="t" style="right:220.33px;top:557.32px;font-size:10px;letter-spacing:-0.17px;-webkit-text-stroke:0.15px;color:#000;">(44.8)</div>
<div class="t" style="right:895.17px;top:570.86px;font-size:10px;letter-spacing:-0.17px;font-weight:bold;color:#000;">924.9</div>
<div class="t" style="right:839.21px;top:570.86px;font-size:10px;letter-spacing:-0.17px;font-weight:bold;color:#000;">939.7</div>
<div class="t" style="right:783.25px;top:570.86px;font-size:10px;letter-spacing:-0.17px;font-weight:bold;color:#000;">948.1</div>
<div class="t" style="right:727.28px;top:570.86px;font-size:10px;letter-spacing:-0.17px;font-weight:bold;color:#000;">1,064.7</div>
<div class="t" style="right:671.32px;top:570.86px;font-size:10px;letter-spacing:-0.17px;font-weight:bold;color:#000;">1,126.0</div>
<div class="t" style="right:615.36px;top:570.86px;font-size:10px;letter-spacing:-0.17px;font-weight:bold;color:#000;">1,200.4</div>
<div class="t" style="right:559.40px;top:570.86px;font-size:10px;letter-spacing:-0.17px;font-weight:bold;color:#000;">1,271.9</div>
<div class="t" style="right:503.44px;top:570.86px;font-size:10px;letter-spacing:-0.17px;font-weight:bold;color:#000;">1,347.5</div>
<div class="t" style="right:447.48px;top:570.86px;font-size:10px;letter-spacing:-0.17px;font-weight:bold;color:#000;">1,383.5</div>
<div class="t" style="right:391.51px;top:570.86px;font-size:10px;letter-spacing:-0.17px;font-weight:bold;color:#000;">1,420.8</div>
<div class="t" style="right:335.55px;top:570.86px;font-size:10px;letter-spacing:-0.17px;font-weight:bold;color:#000;">1,456.3</div>
<div class="t" style="right:279.59px;top:570.86px;font-size:10px;letter-spacing:-0.17px;font-weight:bold;color:#000;">1,499.0</div>
<div class="t" style="right:223.63px;top:570.86px;font-size:10px;letter-spacing:-0.17px;font-weight:bold;color:#000;">1,536.0</div>
<div class="t" style="right:895.17px;top:597.91px;font-size:10px;letter-spacing:-0.17px;font-weight:bold;color:#000;">739.9</div>
<div class="t" style="right:839.21px;top:597.91px;font-size:10px;letter-spacing:-0.17px;font-weight:bold;color:#000;">751.7</div>
<div class="t" style="right:783.25px;top:597.91px;font-size:10px;letter-spacing:-0.17px;font-weight:bold;color:#000;">758.4</div>
<div class="t" style="right:727.28px;top:597.91px;font-size:10px;letter-spacing:-0.17px;font-weight:bold;color:#000;">863.9</div>
<div class="t" style="right:671.32px;top:597.91px;font-size:10px;letter-spacing:-0.17px;font-weight:bold;color:#000;">917.1</div>
<div class="t" style="right:615.36px;top:597.91px;font-size:10px;letter-spacing:-0.17px;font-weight:bold;color:#000;">983.9</div>
<div class="t" style="right:559.40px;top:597.91px;font-size:10px;letter-spacing:-0.17px;font-weight:bold;color:#000;">1,047.6</div>
<div class="t" style="right:503.44px;top:597.91px;font-size:10px;letter-spacing:-0.17px;font-weight:bold;color:#000;">1,115.5</div>
<div class="t" style="right:447.48px;top:597.91px;font-size:10px;letter-spacing:-0.17px;font-weight:bold;color:#000;">1,144.7</div>
<div class="t" style="right:391.51px;top:597.91px;font-size:10px;letter-spacing:-0.17px;font-weight:bold;color:#000;">1,175.7</div>
<div class="t" style="right:335.55px;top:597.91px;font-size:10px;letter-spacing:-0.17px;font-weight:bold;color:#000;">1,205.0</div>
<div class="t" style="right:279.59px;top:597.91px;font-size:10px;letter-spacing:-0.17px;font-weight:bold;color:#000;">1,241.0</div>
<div class="t" style="right:223.63px;top:597.91px;font-size:10px;letter-spacing:-0.17px;font-weight:bold;color:#000;">1,271.0</div>
<div class="t" style="right:895.04px;top:611.44px;font-size:10px;letter-spacing:-0.3px;font-style:italic;-webkit-text-stroke:0.15px;color:#000;">7.9</div>
<div class="t" style="right:839.08px;top:611.44px;font-size:10px;letter-spacing:-0.3px;font-style:italic;-webkit-text-stroke:0.15px;color:#000;">8.7</div>
<div class="t" style="right:783.12px;top:611.44px;font-size:10px;letter-spacing:-0.3px;font-style:italic;-webkit-text-stroke:0.15px;color:#000;">8.0</div>
<div class="t" style="right:727.15px;top:611.44px;font-size:10px;letter-spacing:-0.3px;font-style:italic;-webkit-text-stroke:0.15px;color:#000;">8.5</div>
<div class="t" style="right:671.19px;top:611.44px;font-size:10px;letter-spacing:-0.3px;font-style:italic;-webkit-text-stroke:0.15px;color:#000;">8.9</div>
<div class="t" style="right:615.23px;top:611.44px;font-size:10px;letter-spacing:-0.3px;font-style:italic;-webkit-text-stroke:0.15px;color:#000;">9.2</div>
<div class="t" style="right:559.27px;top:611.44px;font-size:10px;letter-spacing:-0.3px;font-style:italic;-webkit-text-stroke:0.15px;color:#000;">9.5</div>
<div class="t" style="right:503.31px;top:611.44px;font-size:10px;letter-spacing:-0.3px;font-style:italic;-webkit-text-stroke:0.15px;color:#000;">9.8</div>
<div class="t" style="right:447.35px;top:611.44px;font-size:10px;letter-spacing:-0.3px;font-style:italic;-webkit-text-stroke:0.15px;color:#000;">10.1</div>
<div class="t" style="right:391.38px;top:611.44px;font-size:10px;letter-spacing:-0.3px;font-style:italic;-webkit-text-stroke:0.15px;color:#000;">10.4</div>
<div class="t" style="right:335.42px;top:611.44px;font-size:10px;letter-spacing:-0.3px;font-style:italic;-webkit-text-stroke:0.15px;color:#000;">10.7</div>
<div class="t" style="right:279.46px;top:611.44px;font-size:10px;letter-spacing:-0.3px;font-style:italic;-webkit-text-stroke:0.15px;color:#000;">11.0</div>
<div class="t" style="right:223.50px;top:611.44px;font-size:10px;letter-spacing:-0.3px;font-style:italic;-webkit-text-stroke:0.15px;color:#000;">11.2</div>
<div class="t" style="right:895.17px;top:624.97px;font-size:10px;letter-spacing:-0.17px;font-weight:bold;color:#000;">185.0</div>
<div class="t" style="right:839.21px;top:624.97px;font-size:10px;letter-spacing:-0.17px;font-weight:bold;color:#000;">187.9</div>
<div class="t" style="right:783.25px;top:624.97px;font-size:10px;letter-spacing:-0.17px;font-weight:bold;color:#000;">189.6</div>
<div class="t" style="right:727.28px;top:624.97px;font-size:10px;letter-spacing:-0.17px;font-weight:bold;color:#000;">200.8</div>
<div class="t" style="right:671.32px;top:624.97px;font-size:10px;letter-spacing:-0.17px;font-weight:bold;color:#000;">208.8</div>
<div class="t" style="right:615.36px;top:624.97px;font-size:10px;letter-spacing:-0.17px;font-weight:bold;color:#000;">216.6</div>
<div class="t" style="right:559.40px;top:624.97px;font-size:10px;letter-spacing:-0.17px;font-weight:bold;color:#000;">224.4</div>
<div class="t" style="right:503.44px;top:624.97px;font-size:10px;letter-spacing:-0.17px;font-weight:bold;color:#000;">232.0</div>
<div class="t" style="right:447.48px;top:624.97px;font-size:10px;letter-spacing:-0.17px;font-weight:bold;color:#000;">238.7</div>
<div class="t" style="right:391.51px;top:624.97px;font-size:10px;letter-spacing:-0.17px;font-weight:bold;color:#000;">245.2</div>
<div class="t" style="right:335.55px;top:624.97px;font-size:10px;letter-spacing:-0.17px;font-weight:bold;color:#000;">251.3</div>
<div class="t" style="right:279.59px;top:624.97px;font-size:10px;letter-spacing:-0.17px;font-weight:bold;color:#000;">258.1</div>
<div class="t" style="right:223.63px;top:624.97px;font-size:10px;letter-spacing:-0.17px;font-weight:bold;color:#000;">265.0</div>
<div class="t" style="right:837.28px;top:638.50px;font-size:10px;letter-spacing:-0.3px;font-style:italic;-webkit-text-stroke:0.15px;color:#000;">1.6%</div>
<div class="t" style="right:781.32px;top:638.50px;font-size:10px;letter-spacing:-0.3px;font-style:italic;-webkit-text-stroke:0.15px;color:#000;">0.9%</div>
<div class="t" style="right:725.35px;top:638.50px;font-size:10px;letter-spacing:-0.3px;font-style:italic;-webkit-text-stroke:0.15px;color:#000;">5.9%</div>
<div class="t" style="right:669.39px;top:638.50px;font-size:10px;letter-spacing:-0.3px;font-style:italic;-webkit-text-stroke:0.15px;color:#000;">4.0%</div>
<div class="t" style="right:613.43px;top:638.50px;font-size:10px;letter-spacing:-0.3px;font-style:italic;-webkit-text-stroke:0.15px;color:#000;">3.7%</div>
<div class="t" style="right:557.47px;top:638.50px;font-size:10px;letter-spacing:-0.3px;font-style:italic;-webkit-text-stroke:0.15px;color:#000;">3.6%</div>
<div class="t" style="right:501.51px;top:638.50px;font-size:10px;letter-spacing:-0.3px;font-style:italic;-webkit-text-stroke:0.15px;color:#000;">3.4%</div>
<div class="t" style="right:445.55px;top:638.50px;font-size:10px;letter-spacing:-0.3px;font-style:italic;-webkit-text-stroke:0.15px;color:#000;">2.9%</div>
<div class="t" style="right:389.58px;top:638.50px;font-size:10px;letter-spacing:-0.3px;font-style:italic;-webkit-text-stroke:0.15px;color:#000;">2.7%</div>
<div class="t" style="right:333.62px;top:638.50px;font-size:10px;letter-spacing:-0.3px;font-style:italic;-webkit-text-stroke:0.15px;color:#000;">2.5%</div>
<div class="t" style="right:277.66px;top:638.50px;font-size:10px;letter-spacing:-0.3px;font-style:italic;-webkit-text-stroke:0.15px;color:#000;">2.7%</div>
<div class="t" style="right:221.70px;top:638.50px;font-size:10px;letter-spacing:-0.3px;font-style:italic;-webkit-text-stroke:0.15px;color:#000;">2.7%</div>
<div class="t" style="right:895.17px;top:665.56px;font-size:10px;letter-spacing:-0.17px;-webkit-text-stroke:0.15px;color:#0000ff;">453.0</div>
<div class="t" style="right:839.21px;top:665.56px;font-size:10px;letter-spacing:-0.17px;-webkit-text-stroke:0.15px;color:#0000ff;">465.0</div>
<div class="t" style="right:783.25px;top:665.56px;font-size:10px;letter-spacing:-0.17px;-webkit-text-stroke:0.15px;color:#0000ff;">486.0</div>
<div class="t" style="right:727.28px;top:665.56px;font-size:10px;letter-spacing:-0.17px;-webkit-text-stroke:0.15px;color:#000;">474.6</div>
<div class="t" style="right:671.32px;top:665.56px;font-size:10px;letter-spacing:-0.17px;-webkit-text-stroke:0.15px;color:#000;">512.6</div>
<div class="t" style="right:615.36px;top:665.56px;font-size:10px;letter-spacing:-0.17px;-webkit-text-stroke:0.15px;color:#000;">552.5</div>
<div class="t" style="right:559.40px;top:665.56px;font-size:10px;letter-spacing:-0.17px;-webkit-text-stroke:0.15px;color:#000;">594.6</div>
<div class="t" style="right:503.44px;top:665.56px;font-size:10px;letter-spacing:-0.17px;-webkit-text-stroke:0.15px;color:#000;">639.0</div>
<div class="t" style="right:447.48px;top:665.56px;font-size:10px;letter-spacing:-0.17px;-webkit-text-stroke:0.15px;color:#000;">685.9</div>
<div class="t" style="right:391.51px;top:665.56px;font-size:10px;letter-spacing:-0.17px;-webkit-text-stroke:0.15px;color:#000;">733.9</div>
<div class="t" style="right:335.55px;top:665.56px;font-size:10px;letter-spacing:-0.17px;-webkit-text-stroke:0.15px;color:#000;">783.0</div>
<div class="t" style="right:279.59px;top:665.56px;font-size:10px;letter-spacing:-0.17px;-webkit-text-stroke:0.15px;color:#000;">744.7</div>
<div class="t" style="right:223.63px;top:665.56px;font-size:10px;letter-spacing:-0.17px;-webkit-text-stroke:0.15px;color:#000;">788.6</div>
<div class="t" style="right:891.87px;top:679.10px;font-size:10px;letter-spacing:-0.17px;-webkit-text-stroke:0.15px;color:#000;">(382.9)</div>
<div class="t" style="right:835.91px;top:679.10px;font-size:10px;letter-spacing:-0.17px;-webkit-text-stroke:0.15px;color:#000;">(481.7)</div>
<div class="t" style="right:779.95px;top:679.10px;font-size:10px;letter-spacing:-0.17px;-webkit-text-stroke:0.15px;color:#000;">(531.1)</div>
<div class="t" style="right:723.98px;top:679.10px;font-size:10px;letter-spacing:-0.17px;-webkit-text-stroke:0.15px;color:#000;">(522.3)</div>
<div class="t" style="right:668.02px;top:679.10px;font-size:10px;letter-spacing:-0.17px;-webkit-text-stroke:0.15px;color:#000;">(562.2)</div>
<div class="t" style="right:612.06px;top:679.10px;font-size:10px;letter-spacing:-0.17px;-webkit-text-stroke:0.15px;color:#000;">(603.9)</div>
<div class="t" style="right:556.10px;top:679.10px;font-size:10px;letter-spacing:-0.17px;-webkit-text-stroke:0.15px;color:#000;">(647.9)</div>
<div class="t" style="right:500.14px;top:679.10px;font-size:10px;letter-spacing:-0.17px;-webkit-text-stroke:0.15px;color:#000;">(694.1)</div>
<div class="t" style="right:444.18px;top:679.10px;font-size:10px;letter-spacing:-0.17px;-webkit-text-stroke:0.15px;color:#000;">(742.6)</div>
<div class="t" style="right:388.21px;top:679.10px;font-size:10px;letter-spacing:-0.17px;-webkit-text-stroke:0.15px;color:#000;">(792.1)</div>
<div class="t" style="right:332.25px;top:679.10px;font-size:10px;letter-spacing:-0.17px;-webkit-text-stroke:0.15px;color:#000;">(842.7)</div>
<div class="t" style="right:276.29px;top:679.10px;font-size:10px;letter-spacing:-0.17px;-webkit-text-stroke:0.15px;color:#000;">(806.0)</div>
<div class="t" style="right:220.33px;top:679.10px;font-size:10px;letter-spacing:-0.17px;-webkit-text-stroke:0.15px;color:#000;">(851.6)</div>
<div class="t" style="right:895.17px;top:692.62px;font-size:10px;letter-spacing:-0.17px;font-weight:bold;color:#000;">70.2</div>
<div class="t" style="right:835.91px;top:692.62px;font-size:10px;letter-spacing:-0.17px;font-weight:bold;color:#000;">(16.7)</div>
<div class="t" style="right:779.95px;top:692.62px;font-size:10px;letter-spacing:-0.17px;font-weight:bold;color:#000;">(45.1)</div>
<div class="t" style="right:723.98px;top:692.62px;font-size:10px;letter-spacing:-0.17px;font-weight:bold;color:#000;">(47.7)</div>
<div class="t" style="right:668.02px;top:692.62px;font-size:10px;letter-spacing:-0.17px;font-weight:bold;color:#000;">(49.6)</div>
<div class="t" style="right:612.06px;top:692.62px;font-size:10px;letter-spacing:-0.17px;font-weight:bold;color:#000;">(51.5)</div>
<div class="t" style="right:556.10px;top:692.62px;font-size:10px;letter-spacing:-0.17px;font-weight:bold;color:#000;">(53.3)</div>
<div class="t" style="right:500.14px;top:692.62px;font-size:10px;letter-spacing:-0.17px;font-weight:bold;color:#000;">(55.1)</div>
<div class="t" style="right:444.18px;top:692.62px;font-size:10px;letter-spacing:-0.17px;font-weight:bold;color:#000;">(56.7)</div>
<div class="t" style="right:388.21px;top:692.62px;font-size:10px;letter-spacing:-0.17px;font-weight:bold;color:#000;">(58.2)</div>
<div class="t" style="right:332.25px;top:692.62px;font-size:10px;letter-spacing:-0.17px;font-weight:bold;color:#000;">(59.7)</div>
<div class="t" style="right:276.29px;top:692.62px;font-size:10px;letter-spacing:-0.17px;font-weight:bold;color:#000;">(61.3)</div>
<div class="t" style="right:220.33px;top:692.62px;font-size:10px;letter-spacing:-0.17px;font-weight:bold;color:#000;">(63.0)</div>
<div class="t" style="right:837.28px;top:706.15px;font-size:10px;letter-spacing:-0.3px;font-style:italic;-webkit-text-stroke:0.15px;color:#000;">-123.7%</div>
<div class="t" style="right:781.32px;top:706.15px;font-size:10px;letter-spacing:-0.3px;font-style:italic;-webkit-text-stroke:0.15px;color:#000;">170.6%</div>
<div class="t" style="right:725.35px;top:706.15px;font-size:10px;letter-spacing:-0.3px;font-style:italic;-webkit-text-stroke:0.15px;color:#000;">5.9%</div>
<div class="t" style="right:669.39px;top:706.15px;font-size:10px;letter-spacing:-0.3px;font-style:italic;-webkit-text-stroke:0.15px;color:#000;">4.0%</div>
<div class="t" style="right:613.43px;top:706.15px;font-size:10px;letter-spacing:-0.3px;font-style:italic;-webkit-text-stroke:0.15px;color:#000;">3.7%</div>
<div class="t" style="right:557.47px;top:706.15px;font-size:10px;letter-spacing:-0.3px;font-style:italic;-webkit-text-stroke:0.15px;color:#000;">3.6%</div>
<div class="t" style="right:501.51px;top:706.15px;font-size:10px;letter-spacing:-0.3px;font-style:italic;-webkit-text-stroke:0.15px;color:#000;">3.4%</div>
<div class="t" style="right:445.55px;top:706.15px;font-size:10px;letter-spacing:-0.3px;font-style:italic;-webkit-text-stroke:0.15px;color:#000;">2.9%</div>
<div class="t" style="right:389.58px;top:706.15px;font-size:10px;letter-spacing:-0.3px;font-style:italic;-webkit-text-stroke:0.15px;color:#000;">2.7%</div>
<div class="t" style="right:333.62px;top:706.15px;font-size:10px;letter-spacing:-0.3px;font-style:italic;-webkit-text-stroke:0.15px;color:#000;">2.5%</div>
<div class="t" style="right:277.66px;top:706.15px;font-size:10px;letter-spacing:-0.3px;font-style:italic;-webkit-text-stroke:0.15px;color:#000;">2.7%</div>
<div class="t" style="right:221.70px;top:706.15px;font-size:10px;letter-spacing:-0.3px;font-style:italic;-webkit-text-stroke:0.15px;color:#000;">2.7%</div>
<div class="t" style="right:895.17px;top:733.21px;font-size:10px;letter-spacing:-0.17px;font-weight:bold;color:#000;">1,260.8</div>
<div class="t" style="right:839.21px;top:733.21px;font-size:10px;letter-spacing:-0.17px;font-weight:bold;color:#000;">1,356.0</div>
<div class="t" style="right:783.25px;top:733.21px;font-size:10px;letter-spacing:-0.17px;font-weight:bold;color:#000;">1,622.6</div>
<div class="t" style="right:727.28px;top:733.21px;font-size:10px;letter-spacing:-0.17px;font-weight:bold;color:#000;">1,767.5</div>
<div class="t" style="right:671.32px;top:733.21px;font-size:10px;letter-spacing:-0.17px;font-weight:bold;color:#000;">1,837.0</div>
<div class="t" style="right:615.36px;top:733.21px;font-size:10px;letter-spacing:-0.17px;font-weight:bold;color:#000;">1,940.2</div>
<div class="t" style="right:559.40px;top:733.21px;font-size:10px;letter-spacing:-0.17px;font-weight:bold;color:#000;">2,035.7</div>
<div class="t" style="right:503.44px;top:733.21px;font-size:10px;letter-spacing:-0.17px;font-weight:bold;color:#000;">2,142.8</div>
<div class="t" style="right:447.48px;top:733.21px;font-size:10px;letter-spacing:-0.17px;font-weight:bold;color:#000;">2,184.7</div>
<div class="t" style="right:391.51px;top:733.21px;font-size:10px;letter-spacing:-0.17px;font-weight:bold;color:#000;">2,236.7</div>
<div class="t" style="right:335.55px;top:733.21px;font-size:10px;letter-spacing:-0.17px;font-weight:bold;color:#000;">2,292.6</div>
<div class="t" style="right:279.59px;top:733.21px;font-size:10px;letter-spacing:-0.17px;font-weight:bold;color:#000;">2,354.1</div>
<div class="t" style="right:223.63px;top:733.21px;font-size:10px;letter-spacing:-0.17px;font-weight:bold;color:#000;">2,403.0</div>
<div class="t" style="right:893.24px;top:746.74px;font-size:10px;letter-spacing:-0.3px;font-style:italic;-webkit-text-stroke:0.15px;color:#000;">55.9%</div>
<div class="t" style="right:837.28px;top:746.74px;font-size:10px;letter-spacing:-0.3px;font-style:italic;-webkit-text-stroke:0.15px;color:#000;">59.5%</div>
<div class="t" style="right:781.32px;top:746.74px;font-size:10px;letter-spacing:-0.3px;font-style:italic;-webkit-text-stroke:0.15px;color:#000;">64.2%</div>
<div class="t" style="right:725.35px;top:746.74px;font-size:10px;letter-spacing:-0.3px;font-style:italic;-webkit-text-stroke:0.15px;color:#000;">63.5%</div>
<div class="t" style="right:669.39px;top:746.74px;font-size:10px;letter-spacing:-0.3px;font-style:italic;-webkit-text-stroke:0.15px;color:#000;">63.1%</div>
<div class="t" style="right:613.43px;top:746.74px;font-size:10px;letter-spacing:-0.3px;font-style:italic;-webkit-text-stroke:0.15px;color:#000;">62.8%</div>
<div class="t" style="right:557.47px;top:746.74px;font-size:10px;letter-spacing:-0.3px;font-style:italic;-webkit-text-stroke:0.15px;color:#000;">62.6%</div>
<div class="t" style="right:501.51px;top:746.74px;font-size:10px;letter-spacing:-0.3px;font-style:italic;-webkit-text-stroke:0.15px;color:#000;">62.4%</div>
<div class="t" style="right:445.55px;top:746.74px;font-size:10px;letter-spacing:-0.3px;font-style:italic;-webkit-text-stroke:0.15px;color:#000;">62.2%</div>
<div class="t" style="right:389.58px;top:746.74px;font-size:10px;letter-spacing:-0.3px;font-style:italic;-webkit-text-stroke:0.15px;color:#000;">62.1%</div>
<div class="t" style="right:333.62px;top:746.74px;font-size:10px;letter-spacing:-0.3px;font-style:italic;-webkit-text-stroke:0.15px;color:#000;">62.1%</div>
<div class="t" style="right:277.66px;top:746.74px;font-size:10px;letter-spacing:-0.3px;font-style:italic;-webkit-text-stroke:0.15px;color:#000;">62.1%</div>
<div class="t" style="right:221.70px;top:746.74px;font-size:10px;letter-spacing:-0.3px;font-style:italic;-webkit-text-stroke:0.15px;color:#000;">62.0%</div>
<div class="t" style="right:891.87px;top:773.80px;font-size:10px;letter-spacing:-0.17px;-webkit-text-stroke:0.15px;color:#0000ff;">(403.0)</div>
<div class="t" style="right:835.91px;top:773.80px;font-size:10px;letter-spacing:-0.17px;-webkit-text-stroke:0.15px;color:#0000ff;">(507.0)</div>
<div class="t" style="right:779.95px;top:773.80px;font-size:10px;letter-spacing:-0.17px;-webkit-text-stroke:0.15px;color:#0000ff;">(559.0)</div>
<div class="t" style="right:723.98px;top:773.80px;font-size:10px;letter-spacing:-0.17px;-webkit-text-stroke:0.15px;color:#000;">(549.8)</div>
<div class="t" style="right:668.02px;top:773.80px;font-size:10px;letter-spacing:-0.17px;-webkit-text-stroke:0.15px;color:#000;">(591.8)</div>
<div class="t" style="right:612.06px;top:773.80px;font-size:10px;letter-spacing:-0.17px;-webkit-text-stroke:0.15px;color:#000;">(635.7)</div>
<div class="t" style="right:556.10px;top:773.80px;font-size:10px;letter-spacing:-0.17px;-webkit-text-stroke:0.15px;color:#000;">(682.0)</div>
<div class="t" style="right:500.14px;top:773.80px;font-size:10px;letter-spacing:-0.17px;-webkit-text-stroke:0.15px;color:#000;">(730.6)</div>
<div class="t" style="right:444.18px;top:773.80px;font-size:10px;letter-spacing:-0.17px;-webkit-text-stroke:0.15px;color:#000;">(781.7)</div>
<div class="t" style="right:388.21px;top:773.80px;font-size:10px;letter-spacing:-0.17px;-webkit-text-stroke:0.15px;color:#000;">(833.8)</div>
<div class="t" style="right:332.25px;top:773.80px;font-size:10px;letter-spacing:-0.17px;-webkit-text-stroke:0.15px;color:#000;">(887.1)</div>
<div class="t" style="right:276.29px;top:773.80px;font-size:10px;letter-spacing:-0.17px;-webkit-text-stroke:0.15px;color:#000;">(848.4)</div>
<div class="t" style="right:220.33px;top:773.80px;font-size:10px;letter-spacing:-0.17px;-webkit-text-stroke:0.15px;color:#000;">(896.4)</div>
<div class="t" style="right:895.17px;top:787.33px;font-size:10px;letter-spacing:-0.17px;font-weight:bold;color:#000;">857.8</div>
<div class="t" style="right:839.21px;top:787.33px;font-size:10px;letter-spacing:-0.17px;font-weight:bold;color:#000;">849.0</div>
<div class="t" style="right:783.25px;top:787.33px;font-size:10px;letter-spacing:-0.17px;font-weight:bold;color:#000;">1,063.6</div>
<div class="t" style="right:727.28px;top:787.33px;font-size:10px;letter-spacing:-0.17px;font-weight:bold;color:#000;">1,217.7</div>
<div class="t" style="right:671.32px;top:787.33px;font-size:10px;letter-spacing:-0.17px;font-weight:bold;color:#000;">1,245.2</div>
<div class="t" style="right:615.36px;top:787.33px;font-size:10px;letter-spacing:-0.17px;font-weight:bold;color:#000;">1,304.5</div>
<div class="t" style="right:559.40px;top:787.33px;font-size:10px;letter-spacing:-0.17px;font-weight:bold;color:#000;">1,353.7</div>
<div class="t" style="right:503.44px;top:787.33px;font-size:10px;letter-spacing:-0.17px;font-weight:bold;color:#000;">1,412.2</div>
<div class="t" style="right:447.48px;top:787.33px;font-size:10px;letter-spacing:-0.17px;font-weight:bold;color:#000;">1,403.0</div>
<div class="t" style="right:391.51px;top:787.33px;font-size:10px;letter-spacing:-0.17px;font-weight:bold;color:#000;">1,402.9</div>
<div class="t" style="right:335.55px;top:787.33px;font-size:10px;letter-spacing:-0.17px;font-weight:bold;color:#000;">1,405.6</div>
<div class="t" style="right:279.59px;top:787.33px;font-size:10px;letter-spacing:-0.17px;font-weight:bold;color:#000;">1,505.7</div>
<div class="t" style="right:223.63px;top:787.33px;font-size:10px;letter-spacing:-0.17px;font-weight:bold;color:#000;">1,506.6</div>
<div class="t" style="right:893.24px;top:800.86px;font-size:10px;letter-spacing:-0.3px;font-style:italic;-webkit-text-stroke:0.15px;color:#000;">38.0%</div>
<div class="t" style="right:837.28px;top:800.86px;font-size:10px;letter-spacing:-0.3px;font-style:italic;-webkit-text-stroke:0.15px;color:#000;">37.3%</div>
<div class="t" style="right:781.32px;top:800.86px;font-size:10px;letter-spacing:-0.3px;font-style:italic;-webkit-text-stroke:0.15px;color:#000;">42.1%</div>
<div class="t" style="right:725.35px;top:800.86px;font-size:10px;letter-spacing:-0.3px;font-style:italic;-webkit-text-stroke:0.15px;color:#000;">43.7%</div>
<div class="t" style="right:669.39px;top:800.86px;font-size:10px;letter-spacing:-0.3px;font-style:italic;-webkit-text-stroke:0.15px;color:#000;">42.7%</div>
<div class="t" style="right:613.43px;top:800.86px;font-size:10px;letter-spacing:-0.3px;font-style:italic;-webkit-text-stroke:0.15px;color:#000;">42.2%</div>
<div class="t" style="right:557.47px;top:800.86px;font-size:10px;letter-spacing:-0.3px;font-style:italic;-webkit-text-stroke:0.15px;color:#000;">41.6%</div>
<div class="t" style="right:501.51px;top:800.86px;font-size:10px;letter-spacing:-0.3px;font-style:italic;-webkit-text-stroke:0.15px;color:#000;">41.1%</div>
<div class="t" style="right:445.55px;top:800.86px;font-size:10px;letter-spacing:-0.3px;font-style:italic;-webkit-text-stroke:0.15px;color:#000;">40.0%</div>
<div class="t" style="right:389.58px;top:800.86px;font-size:10px;letter-spacing:-0.3px;font-style:italic;-webkit-text-stroke:0.15px;color:#000;">39.0%</div>
<div class="t" style="right:333.62px;top:800.86px;font-size:10px;letter-spacing:-0.3px;font-style:italic;-webkit-text-stroke:0.15px;color:#000;">38.1%</div>
<div class="t" style="right:277.66px;top:800.86px;font-size:10px;letter-spacing:-0.3px;font-style:italic;-webkit-text-stroke:0.15px;color:#000;">39.7%</div>
<div class="t" style="right:221.70px;top:800.86px;font-size:10px;letter-spacing:-0.3px;font-style:italic;-webkit-text-stroke:0.15px;color:#000;">38.9%</div>
<div class="t" style="right:895.17px;top:854.98px;font-size:10px;letter-spacing:-0.17px;-webkit-text-stroke:0.15px;color:#000;">113,241</div>
<div class="t" style="right:839.21px;top:854.98px;font-size:10px;letter-spacing:-0.17px;-webkit-text-stroke:0.15px;color:#000;">119,446</div>
<div class="t" style="right:783.25px;top:854.98px;font-size:10px;letter-spacing:-0.17px;-webkit-text-stroke:0.15px;color:#000;">125,651</div>
<div class="t" style="right:727.28px;top:854.98px;font-size:10px;letter-spacing:-0.17px;-webkit-text-stroke:0.15px;color:#000;">132,218</div>
<div class="t" style="right:671.32px;top:854.98px;font-size:10px;letter-spacing:-0.17px;-webkit-text-stroke:0.15px;color:#000;">134,959</div>
<div class="t" style="right:615.36px;top:854.98px;font-size:10px;letter-spacing:-0.17px;-webkit-text-stroke:0.15px;color:#000;">139,613</div>
<div class="t" style="right:559.40px;top:854.98px;font-size:10px;letter-spacing:-0.17px;-webkit-text-stroke:0.15px;color:#000;">143,491</div>
<div class="t" style="right:503.44px;top:854.98px;font-size:10px;letter-spacing:-0.17px;-webkit-text-stroke:0.15px;color:#000;">147,773</div>
<div class="t" style="right:447.48px;top:854.98px;font-size:10px;letter-spacing:-0.17px;-webkit-text-stroke:0.15px;color:#000;">147,369</div>
<div class="t" style="right:391.51px;top:854.98px;font-size:10px;letter-spacing:-0.17px;-webkit-text-stroke:0.15px;color:#000;">147,369</div>
<div class="t" style="right:335.55px;top:854.98px;font-size:10px;letter-spacing:-0.17px;-webkit-text-stroke:0.15px;color:#000;">147,369</div>
<div class="t" style="right:279.59px;top:854.98px;font-size:10px;letter-spacing:-0.17px;-webkit-text-stroke:0.15px;color:#000;">147,773</div>
<div class="t" style="right:223.63px;top:854.98px;font-size:10px;letter-spacing:-0.17px;-webkit-text-stroke:0.15px;color:#000;">147,369</div>
<div class="t" style="right:894.96px;top:868.51px;font-size:10px;letter-spacing:-0.38px;font-weight:bold;font-style:italic;color:#0000ff;">1.53</div>
<div class="t" style="right:839.00px;top:868.51px;font-size:10px;letter-spacing:-0.38px;font-weight:bold;font-style:italic;color:#0000ff;">1.45</div>
<div class="t" style="right:783.04px;top:868.51px;font-size:10px;letter-spacing:-0.38px;font-weight:bold;font-style:italic;color:#0000ff;">1.56</div>
<div class="t" style="right:727.07px;top:868.51px;font-size:10px;letter-spacing:-0.38px;font-weight:bold;font-style:italic;color:#000;">1.51</div>
<div class="t" style="right:671.11px;top:868.51px;font-size:10px;letter-spacing:-0.38px;font-weight:bold;font-style:italic;color:#000;">1.51</div>
<div class="t" style="right:615.15px;top:868.51px;font-size:10px;letter-spacing:-0.38px;font-weight:bold;font-style:italic;color:#000;">1.51</div>
<div class="t" style="right:559.19px;top:868.51px;font-size:10px;letter-spacing:-0.38px;font-weight:bold;font-style:italic;color:#000;">1.51</div>
<div class="t" style="right:503.23px;top:868.51px;font-size:10px;letter-spacing:-0.38px;font-weight:bold;font-style:italic;color:#000;">1.51</div>
<div class="t" style="right:447.27px;top:868.51px;font-size:10px;letter-spacing:-0.38px;font-weight:bold;font-style:italic;color:#000;">1.51</div>
<div class="t" style="right:391.30px;top:868.51px;font-size:10px;letter-spacing:-0.38px;font-weight:bold;font-style:italic;color:#000;">1.51</div>
<div class="t" style="right:335.34px;top:868.51px;font-size:10px;letter-spacing:-0.38px;font-weight:bold;font-style:italic;color:#000;">1.51</div>
<div class="t" style="right:279.38px;top:868.51px;font-size:10px;letter-spacing:-0.38px;font-weight:bold;font-style:italic;color:#000;">1.51</div>
<div class="t" style="right:223.42px;top:868.51px;font-size:10px;letter-spacing:-0.38px;font-weight:bold;font-style:italic;color:#000;">1.51</div>
<div class="t" style="right:895.17px;top:895.57px;font-size:10px;letter-spacing:-0.17px;font-weight:bold;color:#0000ff;">173,259.1</div>
<div class="t" style="right:839.21px;top:895.57px;font-size:10px;letter-spacing:-0.17px;font-weight:bold;color:#0000ff;">173,197.1</div>
<div class="t" style="right:783.25px;top:895.57px;font-size:10px;letter-spacing:-0.17px;font-weight:bold;color:#0000ff;">196,016.0</div>
<div class="t" style="right:727.28px;top:895.57px;font-size:10px;letter-spacing:-0.17px;font-weight:bold;color:#000;">200,089.2</div>
<div class="t" style="right:671.32px;top:895.57px;font-size:10px;letter-spacing:-0.17px;font-weight:bold;color:#000;">204,237.6</div>
<div class="t" style="right:615.36px;top:895.57px;font-size:10px;letter-spacing:-0.17px;font-weight:bold;color:#000;">211,280.3</div>
<div class="t" style="right:559.40px;top:895.57px;font-size:10px;letter-spacing:-0.17px;font-weight:bold;color:#000;">217,149.1</div>
<div class="t" style="right:503.44px;top:895.57px;font-size:10px;letter-spacing:-0.17px;font-weight:bold;color:#000;">223,629.1</div>
<div class="t" style="right:447.48px;top:895.57px;font-size:10px;letter-spacing:-0.17px;font-weight:bold;color:#000;">223,018.0</div>
<div class="t" style="right:391.51px;top:895.57px;font-size:10px;letter-spacing:-0.17px;font-weight:bold;color:#000;">223,018.0</div>
<div class="t" style="right:335.55px;top:895.57px;font-size:10px;letter-spacing:-0.17px;font-weight:bold;color:#000;">223,018.0</div>
<div class="t" style="right:279.59px;top:895.57px;font-size:10px;letter-spacing:-0.17px;font-weight:bold;color:#000;">223,629.1</div>
<div class="t" style="right:223.63px;top:895.57px;font-size:10px;letter-spacing:-0.17px;font-weight:bold;color:#000;">223,018.0</div>
<div class="t" style="right:895.17px;top:909.10px;font-size:10px;letter-spacing:-0.17px;-webkit-text-stroke:0.15px;color:#0000ff;">54.0</div>
<div class="t" style="right:839.21px;top:909.10px;font-size:10px;letter-spacing:-0.17px;-webkit-text-stroke:0.15px;color:#0000ff;">56.5</div>
<div class="t" style="right:783.25px;top:909.10px;font-size:10px;letter-spacing:-0.17px;-webkit-text-stroke:0.15px;color:#0000ff;">58.3</div>
<div class="t" style="right:727.28px;top:909.10px;font-size:10px;letter-spacing:-0.17px;-webkit-text-stroke:0.15px;color:#000;">59.8</div>
<div class="t" style="right:671.32px;top:909.10px;font-size:10px;letter-spacing:-0.17px;-webkit-text-stroke:0.15px;color:#000;">61.3</div>
<div class="t" style="right:615.36px;top:909.10px;font-size:10px;letter-spacing:-0.17px;-webkit-text-stroke:0.15px;color:#000;">62.8</div>
<div class="t" style="right:559.40px;top:909.10px;font-size:10px;letter-spacing:-0.17px;-webkit-text-stroke:0.15px;color:#000;">64.4</div>
<div class="t" style="right:503.44px;top:909.10px;font-size:10px;letter-spacing:-0.17px;-webkit-text-stroke:0.15px;color:#000;">66.0</div>
<div class="t" style="right:447.48px;top:909.10px;font-size:10px;letter-spacing:-0.17px;-webkit-text-stroke:0.15px;color:#000;">67.6</div>
<div class="t" style="right:391.51px;top:909.10px;font-size:10px;letter-spacing:-0.17px;-webkit-text-stroke:0.15px;color:#000;">69.3</div>
<div class="t" style="right:335.55px;top:909.10px;font-size:10px;letter-spacing:-0.17px;-webkit-text-stroke:0.15px;color:#000;">71.0</div>
<div class="t" style="right:279.59px;top:909.10px;font-size:10px;letter-spacing:-0.17px;-webkit-text-stroke:0.15px;color:#000;">72.8</div>
<div class="t" style="right:223.63px;top:909.10px;font-size:10px;letter-spacing:-0.17px;-webkit-text-stroke:0.15px;color:#000;">74.6</div>
<div class="t" style="right:895.17px;top:922.63px;font-size:10px;letter-spacing:-0.17px;font-weight:bold;color:#000;">9,356.0</div>
<div class="t" style="right:839.21px;top:922.63px;font-size:10px;letter-spacing:-0.17px;font-weight:bold;color:#000;">9,785.6</div>
<div class="t" style="right:783.25px;top:922.63px;font-size:10px;letter-spacing:-0.17px;font-weight:bold;color:#000;">11,427.7</div>
<div class="t" style="right:727.28px;top:922.63px;font-size:10px;letter-spacing:-0.17px;font-weight:bold;color:#000;">11,956.8</div>
<div class="t" style="right:671.32px;top:922.63px;font-size:10px;letter-spacing:-0.17px;font-weight:bold;color:#000;">12,509.8</div>
<div class="t" style="right:615.36px;top:922.63px;font-size:10px;letter-spacing:-0.17px;font-weight:bold;color:#000;">13,264.7</div>
<div class="t" style="right:559.40px;top:922.63px;font-size:10px;letter-spacing:-0.17px;font-weight:bold;color:#000;">13,974.0</div>
<div class="t" style="right:503.44px;top:922.63px;font-size:10px;letter-spacing:-0.17px;font-weight:bold;color:#000;">14,750.8</div>
<div class="t" style="right:447.48px;top:922.63px;font-size:10px;letter-spacing:-0.17px;font-weight:bold;color:#000;">15,078.3</div>
<div class="t" style="right:391.51px;top:922.63px;font-size:10px;letter-spacing:-0.17px;font-weight:bold;color:#000;">15,455.2</div>
<div class="t" style="right:335.55px;top:922.63px;font-size:10px;letter-spacing:-0.17px;font-weight:bold;color:#000;">15,841.6</div>
<div class="t" style="right:279.59px;top:922.63px;font-size:10px;letter-spacing:-0.17px;font-weight:bold;color:#000;">16,282.1</div>
<div class="t" style="right:223.63px;top:922.63px;font-size:10px;letter-spacing:-0.17px;font-weight:bold;color:#000;">16,643.6</div>
<div class="t" style="right:781.32px;top:936.16px;font-size:10px;letter-spacing:-0.3px;font-style:italic;-webkit-text-stroke:0.15px;color:#000;">16.8%</div>
<div class="t" style="right:725.35px;top:936.16px;font-size:10px;letter-spacing:-0.3px;font-style:italic;-webkit-text-stroke:0.15px;color:#000;">4.6%</div>
<div class="t" style="right:669.39px;top:936.16px;font-size:10px;letter-spacing:-0.3px;font-style:italic;-webkit-text-stroke:0.15px;color:#000;">4.6%</div>
<div class="t" style="right:613.43px;top:936.16px;font-size:10px;letter-spacing:-0.3px;font-style:italic;-webkit-text-stroke:0.15px;color:#000;">6.0%</div>
<div class="t" style="right:557.47px;top:936.16px;font-size:10px;letter-spacing:-0.3px;font-style:italic;-webkit-text-stroke:0.15px;color:#000;">5.3%</div>
<div class="t" style="right:501.51px;top:936.16px;font-size:10px;letter-spacing:-0.3px;font-style:italic;-webkit-text-stroke:0.15px;color:#000;">5.6%</div>
<div class="t" style="right:445.55px;top:936.16px;font-size:10px;letter-spacing:-0.3px;font-style:italic;-webkit-text-stroke:0.15px;color:#000;">2.2%</div>
<div class="t" style="right:389.58px;top:936.16px;font-size:10px;letter-spacing:-0.3px;font-style:italic;-webkit-text-stroke:0.15px;color:#000;">2.5%</div>
<div class="t" style="right:333.62px;top:936.16px;font-size:10px;letter-spacing:-0.3px;font-style:italic;-webkit-text-stroke:0.15px;color:#000;">2.5%</div>
<div class="t" style="right:277.66px;top:936.16px;font-size:10px;letter-spacing:-0.3px;font-style:italic;-webkit-text-stroke:0.15px;color:#000;">2.8%</div>
<div class="t" style="right:221.70px;top:936.16px;font-size:10px;letter-spacing:-0.3px;font-style:italic;-webkit-text-stroke:0.15px;color:#000;">2.2%</div>
<div class="t" style="right:895.17px;top:963.22px;font-size:10px;letter-spacing:-0.17px;-webkit-text-stroke:0.15px;color:#0000ff;">3,302.0</div>
<div class="t" style="right:839.21px;top:963.22px;font-size:10px;letter-spacing:-0.17px;-webkit-text-stroke:0.15px;color:#0000ff;">3,654.0</div>
<div class="t" style="right:783.25px;top:963.22px;font-size:10px;letter-spacing:-0.17px;-webkit-text-stroke:0.15px;color:#0000ff;">3,854.0</div>
<div class="t" style="right:727.28px;top:963.22px;font-size:10px;letter-spacing:-0.17px;-webkit-text-stroke:0.15px;color:#000;">4,160.3</div>
<div class="t" style="right:671.32px;top:963.22px;font-size:10px;letter-spacing:-0.17px;-webkit-text-stroke:0.15px;color:#000;">4,412.3</div>
<div class="t" style="right:615.36px;top:963.22px;font-size:10px;letter-spacing:-0.17px;-webkit-text-stroke:0.15px;color:#000;">4,725.8</div>
<div class="t" style="right:559.40px;top:963.22px;font-size:10px;letter-spacing:-0.17px;-webkit-text-stroke:0.15px;color:#000;">5,025.8</div>
<div class="t" style="right:503.44px;top:963.22px;font-size:10px;letter-spacing:-0.17px;-webkit-text-stroke:0.15px;color:#000;">5,344.9</div>
<div class="t" style="right:447.48px;top:963.22px;font-size:10px;letter-spacing:-0.17px;-webkit-text-stroke:0.15px;color:#000;">5,486.5</div>
<div class="t" style="right:391.51px;top:963.22px;font-size:10px;letter-spacing:-0.17px;-webkit-text-stroke:0.15px;color:#000;">5,635.5</div>
<div class="t" style="right:335.55px;top:963.22px;font-size:10px;letter-spacing:-0.17px;-webkit-text-stroke:0.15px;color:#000;">5,777.4</div>
<div class="t" style="right:279.59px;top:963.22px;font-size:10px;letter-spacing:-0.17px;-webkit-text-stroke:0.15px;color:#000;">5,947.0</div>
<div class="t" style="right:223.63px;top:963.22px;font-size:10px;letter-spacing:-0.17px;-webkit-text-stroke:0.15px;color:#000;">6,092.4</div>
<div class="t" style="right:891.87px;top:976.75px;font-size:10px;letter-spacing:-0.17px;-webkit-text-stroke:0.15px;color:#000;">(11.0)</div>
<div class="t" style="right:835.91px;top:976.75px;font-size:10px;letter-spacing:-0.17px;-webkit-text-stroke:0.15px;color:#000;">(16.5)</div>
<div class="t" style="right:779.95px;top:976.75px;font-size:10px;letter-spacing:-0.17px;-webkit-text-stroke:0.15px;color:#000;">(17.1)</div>
<div class="t" style="right:723.98px;top:976.75px;font-size:10px;letter-spacing:-0.17px;-webkit-text-stroke:0.15px;color:#000;">(16.8)</div>
<div class="t" style="right:668.02px;top:976.75px;font-size:10px;letter-spacing:-0.17px;-webkit-text-stroke:0.15px;color:#000;">(18.1)</div>
<div class="t" style="right:612.06px;top:976.75px;font-size:10px;letter-spacing:-0.17px;-webkit-text-stroke:0.15px;color:#000;">(19.4)</div>
<div class="t" style="right:556.10px;top:976.75px;font-size:10px;letter-spacing:-0.17px;-webkit-text-stroke:0.15px;color:#000;">(20.8)</div>
<div class="t" style="right:500.14px;top:976.75px;font-size:10px;letter-spacing:-0.17px;-webkit-text-stroke:0.15px;color:#000;">(22.3)</div>
<div class="t" style="right:444.18px;top:976.75px;font-size:10px;letter-spacing:-0.17px;-webkit-text-stroke:0.15px;color:#000;">(23.8)</div>
<div class="t" style="right:388.21px;top:976.75px;font-size:10px;letter-spacing:-0.17px;-webkit-text-stroke:0.15px;color:#000;">(25.4)</div>
<div class="t" style="right:332.25px;top:976.75px;font-size:10px;letter-spacing:-0.17px;-webkit-text-stroke:0.15px;color:#000;">(27.1)</div>
<div class="t" style="right:276.29px;top:976.75px;font-size:10px;letter-spacing:-0.17px;-webkit-text-stroke:0.15px;color:#000;">(25.9)</div>
<div class="t" style="right:220.33px;top:976.75px;font-size:10px;letter-spacing:-0.17px;-webkit-text-stroke:0.15px;color:#000;">(27.3)</div>
<div class="t" style="right:895.17px;top:990.28px;font-size:10px;letter-spacing:-0.17px;font-weight:bold;color:#000;">3,291.0</div>
<div class="t" style="right:839.21px;top:990.28px;font-size:10px;letter-spacing:-0.17px;font-weight:bold;color:#000;">3,637.5</div>
<div class="t" style="right:783.25px;top:990.28px;font-size:10px;letter-spacing:-0.17px;font-weight:bold;color:#000;">3,837.0</div>
<div class="t" style="right:727.28px;top:990.28px;font-size:10px;letter-spacing:-0.17px;font-weight:bold;color:#000;">4,143.5</div>
<div class="t" style="right:671.32px;top:990.28px;font-size:10px;letter-spacing:-0.17px;font-weight:bold;color:#000;">4,394.2</div>
<div class="t" style="right:615.36px;top:990.28px;font-size:10px;letter-spacing:-0.17px;font-weight:bold;color:#000;">4,706.4</div>
<div class="t" style="right:559.40px;top:990.28px;font-size:10px;letter-spacing:-0.17px;font-weight:bold;color:#000;">5,005.0</div>
<div class="t" style="right:503.44px;top:990.28px;font-size:10px;letter-spacing:-0.17px;font-weight:bold;color:#000;">5,322.6</div>
<div class="t" style="right:447.48px;top:990.28px;font-size:10px;letter-spacing:-0.17px;font-weight:bold;color:#000;">5,462.6</div>
<div class="t" style="right:391.51px;top:990.28px;font-size:10px;letter-spacing:-0.17px;font-weight:bold;color:#000;">5,610.1</div>
<div class="t" style="right:335.55px;top:990.28px;font-size:10px;letter-spacing:-0.17px;font-weight:bold;color:#000;">5,750.4</div>
<div class="t" style="right:279.59px;top:990.28px;font-size:10px;letter-spacing:-0.17px;font-weight:bold;color:#000;">5,921.1</div>
<div class="t" style="right:223.63px;top:990.28px;font-size:10px;letter-spacing:-0.17px;font-weight:bold;color:#000;">6,065.1</div>
<div class="t" style="right:895.17px;top:1017.34px;font-size:10px;letter-spacing:-0.17px;font-weight:bold;color:#000;">3,126.5</div>
<div class="t" style="right:839.21px;top:1017.34px;font-size:10px;letter-spacing:-0.17px;font-weight:bold;color:#000;">3,455.6</div>
<div class="t" style="right:783.25px;top:1017.34px;font-size:10px;letter-spacing:-0.17px;font-weight:bold;color:#000;">3,645.1</div>
<div class="t" style="right:727.28px;top:1017.34px;font-size:10px;letter-spacing:-0.17px;font-weight:bold;color:#000;">3,940.4</div>
<div class="t" style="right:671.32px;top:1017.34px;font-size:10px;letter-spacing:-0.17px;font-weight:bold;color:#000;">4,183.0</div>
<div class="t" style="right:615.36px;top:1017.34px;font-size:10px;letter-spacing:-0.17px;font-weight:bold;color:#000;">4,487.3</div>
<div class="t" style="right:559.40px;top:1017.34px;font-size:10px;letter-spacing:-0.17px;font-weight:bold;color:#000;">4,778.0</div>
<div class="t" style="right:503.44px;top:1017.34px;font-size:10px;letter-spacing:-0.17px;font-weight:bold;color:#000;">5,087.9</div>
<div class="t" style="right:447.48px;top:1017.34px;font-size:10px;letter-spacing:-0.17px;font-weight:bold;color:#000;">5,221.1</div>
<div class="t" style="right:391.51px;top:1017.34px;font-size:10px;letter-spacing:-0.17px;font-weight:bold;color:#000;">5,362.1</div>
<div class="t" style="right:335.55px;top:1017.34px;font-size:10px;letter-spacing:-0.17px;font-weight:bold;color:#000;">5,496.1</div>
<div class="t" style="right:279.59px;top:1017.34px;font-size:10px;letter-spacing:-0.17px;font-weight:bold;color:#000;">5,660.0</div>
<div class="t" style="right:223.63px;top:1017.34px;font-size:10px;letter-spacing:-0.17px;font-weight:bold;color:#000;">5,796.9</div>
<div class="t" style="right:895.04px;top:1030.88px;font-size:10px;letter-spacing:-0.3px;font-style:italic;-webkit-text-stroke:0.15px;color:#000;">18.0</div>
<div class="t" style="right:839.08px;top:1030.88px;font-size:10px;letter-spacing:-0.3px;font-style:italic;-webkit-text-stroke:0.15px;color:#000;">20.0</div>
<div class="t" style="right:783.12px;top:1030.88px;font-size:10px;letter-spacing:-0.3px;font-style:italic;-webkit-text-stroke:0.15px;color:#000;">18.6</div>
<div class="t" style="right:727.15px;top:1030.88px;font-size:10px;letter-spacing:-0.3px;font-style:italic;-webkit-text-stroke:0.15px;color:#000;">19.7</div>
<div class="t" style="right:671.19px;top:1030.88px;font-size:10px;letter-spacing:-0.3px;font-style:italic;-webkit-text-stroke:0.15px;color:#000;">20.5</div>
<div class="t" style="right:615.23px;top:1030.88px;font-size:10px;letter-spacing:-0.3px;font-style:italic;-webkit-text-stroke:0.15px;color:#000;">21.2</div>
<div class="t" style="right:559.27px;top:1030.88px;font-size:10px;letter-spacing:-0.3px;font-style:italic;-webkit-text-stroke:0.15px;color:#000;">22.0</div>
<div class="t" style="right:503.31px;top:1030.88px;font-size:10px;letter-spacing:-0.3px;font-style:italic;-webkit-text-stroke:0.15px;color:#000;">22.8</div>
<div class="t" style="right:447.35px;top:1030.88px;font-size:10px;letter-spacing:-0.3px;font-style:italic;-webkit-text-stroke:0.15px;color:#000;">23.4</div>
<div class="t" style="right:391.38px;top:1030.88px;font-size:10px;letter-spacing:-0.3px;font-style:italic;-webkit-text-stroke:0.15px;color:#000;">24.0</div>
<div class="t" style="right:335.42px;top:1030.88px;font-size:10px;letter-spacing:-0.3px;font-style:italic;-webkit-text-stroke:0.15px;color:#000;">24.6</div>
<div class="t" style="right:279.46px;top:1030.88px;font-size:10px;letter-spacing:-0.3px;font-style:italic;-webkit-text-stroke:0.15px;color:#000;">25.3</div>
<div class="t" style="right:223.50px;top:1030.88px;font-size:10px;letter-spacing:-0.3px;font-style:italic;-webkit-text-stroke:0.15px;color:#000;">26.0</div>
<div class="t" style="right:895.17px;top:1044.40px;font-size:10px;letter-spacing:-0.17px;font-weight:bold;color:#000;">164.6</div>
<div class="t" style="right:839.21px;top:1044.40px;font-size:10px;letter-spacing:-0.17px;font-weight:bold;color:#000;">181.9</div>
<div class="t" style="right:783.25px;top:1044.40px;font-size:10px;letter-spacing:-0.17px;font-weight:bold;color:#000;">191.8</div>
<div class="t" style="right:727.28px;top:1044.40px;font-size:10px;letter-spacing:-0.17px;font-weight:bold;color:#000;">203.2</div>
<div class="t" style="right:671.32px;top:1044.40px;font-size:10px;letter-spacing:-0.17px;font-weight:bold;color:#000;">211.3</div>
<div class="t" style="right:615.36px;top:1044.40px;font-size:10px;letter-spacing:-0.17px;font-weight:bold;color:#000;">219.1</div>
<div class="t" style="right:559.40px;top:1044.40px;font-size:10px;letter-spacing:-0.17px;font-weight:bold;color:#000;">227.0</div>
<div class="t" style="right:503.44px;top:1044.40px;font-size:10px;letter-spacing:-0.17px;font-weight:bold;color:#000;">234.7</div>
<div class="t" style="right:447.48px;top:1044.40px;font-size:10px;letter-spacing:-0.17px;font-weight:bold;color:#000;">241.5</div>
<div class="t" style="right:391.51px;top:1044.40px;font-size:10px;letter-spacing:-0.17px;font-weight:bold;color:#000;">248.0</div>
<div class="t" style="right:335.55px;top:1044.40px;font-size:10px;letter-spacing:-0.17px;font-weight:bold;color:#000;">254.2</div>
<div class="t" style="right:279.59px;top:1044.40px;font-size:10px;letter-spacing:-0.17px;font-weight:bold;color:#000;">261.1</div>
<div class="t" style="right:223.63px;top:1044.40px;font-size:10px;letter-spacing:-0.17px;font-weight:bold;color:#000;">268.2</div>
<div class="t" style="right:781.32px;top:1057.93px;font-size:10px;letter-spacing:-0.3px;font-style:italic;-webkit-text-stroke:0.15px;color:#000;">5.5%</div>
<div class="t" style="right:725.35px;top:1057.93px;font-size:10px;letter-spacing:-0.3px;font-style:italic;-webkit-text-stroke:0.15px;color:#000;">5.9%</div>
<div class="t" style="right:669.39px;top:1057.93px;font-size:10px;letter-spacing:-0.3px;font-style:italic;-webkit-text-stroke:0.15px;color:#000;">4.0%</div>
<div class="t" style="right:613.43px;top:1057.93px;font-size:10px;letter-spacing:-0.3px;font-style:italic;-webkit-text-stroke:0.15px;color:#000;">3.7%</div>
<div class="t" style="right:557.47px;top:1057.93px;font-size:10px;letter-spacing:-0.3px;font-style:italic;-webkit-text-stroke:0.15px;color:#000;">3.6%</div>
<div class="t" style="right:501.51px;top:1057.93px;font-size:10px;letter-spacing:-0.3px;font-style:italic;-webkit-text-stroke:0.15px;color:#000;">3.4%</div>
<div class="t" style="right:445.55px;top:1057.93px;font-size:10px;letter-spacing:-0.3px;font-style:italic;-webkit-text-stroke:0.15px;color:#000;">2.9%</div>
<div class="t" style="right:389.58px;top:1057.93px;font-size:10px;letter-spacing:-0.3px;font-style:italic;-webkit-text-stroke:0.15px;color:#000;">2.7%</div>
<div class="t" style="right:333.62px;top:1057.93px;font-size:10px;letter-spacing:-0.3px;font-style:italic;-webkit-text-stroke:0.15px;color:#000;">2.5%</div>
<div class="t" style="right:277.66px;top:1057.93px;font-size:10px;letter-spacing:-0.3px;font-style:italic;-webkit-text-stroke:0.15px;color:#000;">2.7%</div>
<div class="t" style="right:221.70px;top:1057.93px;font-size:10px;letter-spacing:-0.3px;font-style:italic;-webkit-text-stroke:0.15px;color:#000;">2.7%</div>
<div class="t" style="right:895.17px;top:1084.99px;font-size:10px;letter-spacing:-0.17px;-webkit-text-stroke:0.15px;color:#0000ff;">365.0</div>
<div class="t" style="right:839.21px;top:1084.99px;font-size:10px;letter-spacing:-0.17px;-webkit-text-stroke:0.15px;color:#0000ff;">379.0</div>
<div class="t" style="right:783.25px;top:1084.99px;font-size:10px;letter-spacing:-0.17px;-webkit-text-stroke:0.15px;color:#0000ff;">652.0</div>
<div class="t" style="right:727.28px;top:1084.99px;font-size:10px;letter-spacing:-0.17px;-webkit-text-stroke:0.15px;color:#000;">666.0</div>
<div class="t" style="right:671.32px;top:1084.99px;font-size:10px;letter-spacing:-0.17px;-webkit-text-stroke:0.15px;color:#000;">704.3</div>
<div class="t" style="right:615.36px;top:1084.99px;font-size:10px;letter-spacing:-0.17px;-webkit-text-stroke:0.15px;color:#000;">743.1</div>
<div class="t" style="right:559.40px;top:1084.99px;font-size:10px;letter-spacing:-0.17px;-webkit-text-stroke:0.15px;color:#000;">783.4</div>
<div class="t" style="right:503.44px;top:1084.99px;font-size:10px;letter-spacing:-0.17px;-webkit-text-stroke:0.15px;color:#000;">824.8</div>
<div class="t" style="right:447.48px;top:1084.99px;font-size:10px;letter-spacing:-0.17px;-webkit-text-stroke:0.15px;color:#000;">866.0</div>
<div class="t" style="right:391.51px;top:1084.99px;font-size:10px;letter-spacing:-0.17px;-webkit-text-stroke:0.15px;color:#000;">907.4</div>
<div class="t" style="right:335.55px;top:1084.99px;font-size:10px;letter-spacing:-0.17px;-webkit-text-stroke:0.15px;color:#000;">948.8</div>
<div class="t" style="right:279.59px;top:1084.99px;font-size:10px;letter-spacing:-0.17px;-webkit-text-stroke:0.15px;color:#000;">938.2</div>
<div class="t" style="right:223.63px;top:1084.99px;font-size:10px;letter-spacing:-0.17px;-webkit-text-stroke:0.15px;color:#000;">978.0</div>
<div class="t" style="right:891.87px;top:1098.53px;font-size:10px;letter-spacing:-0.17px;-webkit-text-stroke:0.15px;color:#000;">(209.0)</div>
<div class="t" style="right:835.91px;top:1098.53px;font-size:10px;letter-spacing:-0.17px;-webkit-text-stroke:0.15px;color:#000;">(313.5)</div>
<div class="t" style="right:779.95px;top:1098.53px;font-size:10px;letter-spacing:-0.17px;-webkit-text-stroke:0.15px;color:#000;">(324.0)</div>
<div class="t" style="right:723.98px;top:1098.53px;font-size:10px;letter-spacing:-0.17px;-webkit-text-stroke:0.15px;color:#000;">(318.6)</div>
<div class="t" style="right:668.02px;top:1098.53px;font-size:10px;letter-spacing:-0.17px;-webkit-text-stroke:0.15px;color:#000;">(343.0)</div>
<div class="t" style="right:612.06px;top:1098.53px;font-size:10px;letter-spacing:-0.17px;-webkit-text-stroke:0.15px;color:#000;">(368.4)</div>
<div class="t" style="right:556.10px;top:1098.53px;font-size:10px;letter-spacing:-0.17px;-webkit-text-stroke:0.15px;color:#000;">(395.2)</div>
<div class="t" style="right:500.14px;top:1098.53px;font-size:10px;letter-spacing:-0.17px;-webkit-text-stroke:0.15px;color:#000;">(423.4)</div>
<div class="t" style="right:444.18px;top:1098.53px;font-size:10px;letter-spacing:-0.17px;-webkit-text-stroke:0.15px;color:#000;">(453.0)</div>
<div class="t" style="right:388.21px;top:1098.53px;font-size:10px;letter-spacing:-0.17px;-webkit-text-stroke:0.15px;color:#000;">(483.2)</div>
<div class="t" style="right:332.25px;top:1098.53px;font-size:10px;letter-spacing:-0.17px;-webkit-text-stroke:0.15px;color:#000;">(514.1)</div>
<div class="t" style="right:276.29px;top:1098.53px;font-size:10px;letter-spacing:-0.17px;-webkit-text-stroke:0.15px;color:#000;">(491.7)</div>
<div class="t" style="right:220.33px;top:1098.53px;font-size:10px;letter-spacing:-0.17px;-webkit-text-stroke:0.15px;color:#000;">(519.5)</div>
<div class="t" style="right:895.17px;top:1112.05px;font-size:10px;letter-spacing:-0.17px;font-weight:bold;color:#000;">156.0</div>
<div class="t" style="right:839.21px;top:1112.05px;font-size:10px;letter-spacing:-0.17px;font-weight:bold;color:#000;">65.5</div>
<div class="t" style="right:783.25px;top:1112.05px;font-size:10px;letter-spacing:-0.17px;font-weight:bold;color:#000;">328.1</div>
<div class="t" style="right:727.28px;top:1112.05px;font-size:10px;letter-spacing:-0.17px;font-weight:bold;color:#000;">347.4</div>
<div class="t" style="right:671.32px;top:1112.05px;font-size:10px;letter-spacing:-0.17px;font-weight:bold;color:#000;">361.3</div>
<div class="t" style="right:615.36px;top:1112.05px;font-size:10px;letter-spacing:-0.17px;font-weight:bold;color:#000;">374.7</div>
<div class="t" style="right:559.40px;top:1112.05px;font-size:10px;letter-spacing:-0.17px;font-weight:bold;color:#000;">388.2</div>
<div class="t" style="right:503.44px;top:1112.05px;font-size:10px;letter-spacing:-0.17px;font-weight:bold;color:#000;">401.4</div>
<div class="t" style="right:447.48px;top:1112.05px;font-size:10px;letter-spacing:-0.17px;font-weight:bold;color:#000;">413.0</div>
<div class="t" style="right:391.51px;top:1112.05px;font-size:10px;letter-spacing:-0.17px;font-weight:bold;color:#000;">424.1</div>
<div class="t" style="right:335.55px;top:1112.05px;font-size:10px;letter-spacing:-0.17px;font-weight:bold;color:#000;">434.7</div>
<div class="t" style="right:279.59px;top:1112.05px;font-size:10px;letter-spacing:-0.17px;font-weight:bold;color:#000;">446.5</div>
<div class="t" style="right:223.63px;top:1112.05px;font-size:10px;letter-spacing:-0.17px;font-weight:bold;color:#000;">458.5</div>
<div class="t" style="right:781.32px;top:1125.59px;font-size:10px;letter-spacing:-0.3px;font-style:italic;-webkit-text-stroke:0.15px;color:#000;">400.8%</div>
<div class="t" style="right:725.35px;top:1125.59px;font-size:10px;letter-spacing:-0.3px;font-style:italic;-webkit-text-stroke:0.15px;color:#000;">5.9%</div>
<div class="t" style="right:669.39px;top:1125.59px;font-size:10px;letter-spacing:-0.3px;font-style:italic;-webkit-text-stroke:0.15px;color:#000;">4.0%</div>
<div class="t" style="right:613.43px;top:1125.59px;font-size:10px;letter-spacing:-0.3px;font-style:italic;-webkit-text-stroke:0.15px;color:#000;">3.7%</div>
<div class="t" style="right:557.47px;top:1125.59px;font-size:10px;letter-spacing:-0.3px;font-style:italic;-webkit-text-stroke:0.15px;color:#000;">3.6%</div>
<div class="t" style="right:501.51px;top:1125.59px;font-size:10px;letter-spacing:-0.3px;font-style:italic;-webkit-text-stroke:0.15px;color:#000;">3.4%</div>
<div class="t" style="right:445.55px;top:1125.59px;font-size:10px;letter-spacing:-0.3px;font-style:italic;-webkit-text-stroke:0.15px;color:#000;">2.9%</div>
<div class="t" style="right:389.58px;top:1125.59px;font-size:10px;letter-spacing:-0.3px;font-style:italic;-webkit-text-stroke:0.15px;color:#000;">2.7%</div>
<div class="t" style="right:333.62px;top:1125.59px;font-size:10px;letter-spacing:-0.3px;font-style:italic;-webkit-text-stroke:0.15px;color:#000;">2.5%</div>
<div class="t" style="right:277.66px;top:1125.59px;font-size:10px;letter-spacing:-0.3px;font-style:italic;-webkit-text-stroke:0.15px;color:#000;">2.7%</div>
<div class="t" style="right:221.70px;top:1125.59px;font-size:10px;letter-spacing:-0.3px;font-style:italic;-webkit-text-stroke:0.15px;color:#000;">2.7%</div>
<div class="t" style="right:895.17px;top:1152.64px;font-size:10px;letter-spacing:-0.17px;font-weight:bold;color:#000;">5,909.0</div>
<div class="t" style="right:839.21px;top:1152.64px;font-size:10px;letter-spacing:-0.17px;font-weight:bold;color:#000;">6,082.6</div>
<div class="t" style="right:783.25px;top:1152.64px;font-size:10px;letter-spacing:-0.17px;font-weight:bold;color:#000;">7,262.7</div>
<div class="t" style="right:727.28px;top:1152.64px;font-size:10px;letter-spacing:-0.17px;font-weight:bold;color:#000;">7,465.9</div>
<div class="t" style="right:671.32px;top:1152.64px;font-size:10px;letter-spacing:-0.17px;font-weight:bold;color:#000;">7,754.3</div>
<div class="t" style="right:615.36px;top:1152.64px;font-size:10px;letter-spacing:-0.17px;font-weight:bold;color:#000;">8,183.7</div>
<div class="t" style="right:559.40px;top:1152.64px;font-size:10px;letter-spacing:-0.17px;font-weight:bold;color:#000;">8,580.9</div>
<div class="t" style="right:503.44px;top:1152.64px;font-size:10px;letter-spacing:-0.17px;font-weight:bold;color:#000;">9,026.9</div>
<div class="t" style="right:447.48px;top:1152.64px;font-size:10px;letter-spacing:-0.17px;font-weight:bold;color:#000;">9,202.7</div>
<div class="t" style="right:391.51px;top:1152.64px;font-size:10px;letter-spacing:-0.17px;font-weight:bold;color:#000;">9,421.0</div>
<div class="t" style="right:335.55px;top:1152.64px;font-size:10px;letter-spacing:-0.17px;font-weight:bold;color:#000;">9,656.5</div>
<div class="t" style="right:279.59px;top:1152.64px;font-size:10px;letter-spacing:-0.17px;font-weight:bold;color:#000;">9,914.6</div>
<div class="t" style="right:223.63px;top:1152.64px;font-size:10px;letter-spacing:-0.17px;font-weight:bold;color:#000;">10,120.0</div>
<div class="t" style="right:893.24px;top:1166.17px;font-size:10px;letter-spacing:-0.3px;font-style:italic;-webkit-text-stroke:0.15px;color:#000;">63.2%</div>
<div class="t" style="right:837.28px;top:1166.17px;font-size:10px;letter-spacing:-0.3px;font-style:italic;-webkit-text-stroke:0.15px;color:#000;">62.2%</div>
<div class="t" style="right:781.32px;top:1166.17px;font-size:10px;letter-spacing:-0.3px;font-style:italic;-webkit-text-stroke:0.15px;color:#000;">63.6%</div>
<div class="t" style="right:725.35px;top:1166.17px;font-size:10px;letter-spacing:-0.3px;font-style:italic;-webkit-text-stroke:0.15px;color:#000;">62.4%</div>
<div class="t" style="right:669.39px;top:1166.17px;font-size:10px;letter-spacing:-0.3px;font-style:italic;-webkit-text-stroke:0.15px;color:#000;">62.0%</div>
<div class="t" style="right:613.43px;top:1166.17px;font-size:10px;letter-spacing:-0.3px;font-style:italic;-webkit-text-stroke:0.15px;color:#000;">61.7%</div>
<div class="t" style="right:557.47px;top:1166.17px;font-size:10px;letter-spacing:-0.3px;font-style:italic;-webkit-text-stroke:0.15px;color:#000;">61.4%</div>
<div class="t" style="right:501.51px;top:1166.17px;font-size:10px;letter-spacing:-0.3px;font-style:italic;-webkit-text-stroke:0.15px;color:#000;">61.2%</div>
<div class="t" style="right:445.55px;top:1166.17px;font-size:10px;letter-spacing:-0.3px;font-style:italic;-webkit-text-stroke:0.15px;color:#000;">61.0%</div>
<div class="t" style="right:389.58px;top:1166.17px;font-size:10px;letter-spacing:-0.3px;font-style:italic;-webkit-text-stroke:0.15px;color:#000;">61.0%</div>
<div class="t" style="right:333.62px;top:1166.17px;font-size:10px;letter-spacing:-0.3px;font-style:italic;-webkit-text-stroke:0.15px;color:#000;">61.0%</div>
<div class="t" style="right:277.66px;top:1166.17px;font-size:10px;letter-spacing:-0.3px;font-style:italic;-webkit-text-stroke:0.15px;color:#000;">60.9%</div>
<div class="t" style="right:221.70px;top:1166.17px;font-size:10px;letter-spacing:-0.3px;font-style:italic;-webkit-text-stroke:0.15px;color:#000;">60.8%</div>
<div class="t" style="right:891.87px;top:1193.23px;font-size:10px;letter-spacing:-0.17px;-webkit-text-stroke:0.15px;color:#0000ff;">(220.0)</div>
<div class="t" style="right:835.91px;top:1193.23px;font-size:10px;letter-spacing:-0.17px;-webkit-text-stroke:0.15px;color:#0000ff;">(330.0)</div>
<div class="t" style="right:779.95px;top:1193.23px;font-size:10px;letter-spacing:-0.17px;-webkit-text-stroke:0.15px;color:#0000ff;">(341.0)</div>
<div class="t" style="right:723.98px;top:1193.23px;font-size:10px;letter-spacing:-0.17px;-webkit-text-stroke:0.15px;color:#000;">(335.4)</div>
<div class="t" style="right:668.02px;top:1193.23px;font-size:10px;letter-spacing:-0.17px;-webkit-text-stroke:0.15px;color:#000;">(361.0)</div>
<div class="t" style="right:612.06px;top:1193.23px;font-size:10px;letter-spacing:-0.17px;-webkit-text-stroke:0.15px;color:#000;">(387.8)</div>
<div class="t" style="right:556.10px;top:1193.23px;font-size:10px;letter-spacing:-0.17px;-webkit-text-stroke:0.15px;color:#000;">(416.0)</div>
<div class="t" style="right:500.14px;top:1193.23px;font-size:10px;letter-spacing:-0.17px;-webkit-text-stroke:0.15px;color:#000;">(445.7)</div>
<div class="t" style="right:444.18px;top:1193.23px;font-size:10px;letter-spacing:-0.17px;-webkit-text-stroke:0.15px;color:#000;">(476.9)</div>
<div class="t" style="right:388.21px;top:1193.23px;font-size:10px;letter-spacing:-0.17px;-webkit-text-stroke:0.15px;color:#000;">(508.6)</div>
<div class="t" style="right:332.25px;top:1193.23px;font-size:10px;letter-spacing:-0.17px;-webkit-text-stroke:0.15px;color:#000;">(541.1)</div>
<div class="t" style="right:276.29px;top:1193.23px;font-size:10px;letter-spacing:-0.17px;-webkit-text-stroke:0.15px;color:#000;">(517.6)</div>
<div class="t" style="right:220.33px;top:1193.23px;font-size:10px;letter-spacing:-0.17px;-webkit-text-stroke:0.15px;color:#000;">(546.8)</div>
<div class="t" style="right:895.17px;top:1206.76px;font-size:10px;letter-spacing:-0.17px;font-weight:bold;color:#000;">5,689.0</div>
<div class="t" style="right:839.21px;top:1206.76px;font-size:10px;letter-spacing:-0.17px;font-weight:bold;color:#000;">5,752.6</div>
<div class="t" style="right:783.25px;top:1206.76px;font-size:10px;letter-spacing:-0.17px;font-weight:bold;color:#000;">6,921.7</div>
<div class="t" style="right:727.28px;top:1206.76px;font-size:10px;letter-spacing:-0.17px;font-weight:bold;color:#000;">7,130.5</div>
<div class="t" style="right:671.32px;top:1206.76px;font-size:10px;letter-spacing:-0.17px;font-weight:bold;color:#000;">7,393.3</div>
<div class="t" style="right:615.36px;top:1206.76px;font-size:10px;letter-spacing:-0.17px;font-weight:bold;color:#000;">7,795.9</div>
<div class="t" style="right:559.40px;top:1206.76px;font-size:10px;letter-spacing:-0.17px;font-weight:bold;color:#000;">8,164.9</div>
<div class="t" style="right:503.44px;top:1206.76px;font-size:10px;letter-spacing:-0.17px;font-weight:bold;color:#000;">8,581.2</div>
<div class="t" style="right:447.48px;top:1206.76px;font-size:10px;letter-spacing:-0.17px;font-weight:bold;color:#000;">8,725.8</div>
<div class="t" style="right:391.51px;top:1206.76px;font-size:10px;letter-spacing:-0.17px;font-weight:bold;color:#000;">8,912.3</div>
<div class="t" style="right:335.55px;top:1206.76px;font-size:10px;letter-spacing:-0.17px;font-weight:bold;color:#000;">9,115.4</div>
<div class="t" style="right:279.59px;top:1206.76px;font-size:10px;letter-spacing:-0.17px;font-weight:bold;color:#000;">9,397.0</div>
<div class="t" style="right:223.63px;top:1206.76px;font-size:10px;letter-spacing:-0.17px;font-weight:bold;color:#000;">9,573.2</div>
<div class="t" style="right:893.24px;top:1220.30px;font-size:10px;letter-spacing:-0.3px;font-style:italic;-webkit-text-stroke:0.15px;color:#000;">60.8%</div>
<div class="t" style="right:837.28px;top:1220.30px;font-size:10px;letter-spacing:-0.3px;font-style:italic;-webkit-text-stroke:0.15px;color:#000;">58.8%</div>
<div class="t" style="right:781.32px;top:1220.30px;font-size:10px;letter-spacing:-0.3px;font-style:italic;-webkit-text-stroke:0.15px;color:#000;">60.6%</div>
<div class="t" style="right:725.35px;top:1220.30px;font-size:10px;letter-spacing:-0.3px;font-style:italic;-webkit-text-stroke:0.15px;color:#000;">59.6%</div>
<div class="t" style="right:669.39px;top:1220.30px;font-size:10px;letter-spacing:-0.3px;font-style:italic;-webkit-text-stroke:0.15px;color:#000;">59.1%</div>
<div class="t" style="right:613.43px;top:1220.30px;font-size:10px;letter-spacing:-0.3px;font-style:italic;-webkit-text-stroke:0.15px;color:#000;">58.8%</div>
<div class="t" style="right:557.47px;top:1220.30px;font-size:10px;letter-spacing:-0.3px;font-style:italic;-webkit-text-stroke:0.15px;color:#000;">58.4%</div>
<div class="t" style="right:501.51px;top:1220.30px;font-size:10px;letter-spacing:-0.3px;font-style:italic;-webkit-text-stroke:0.15px;color:#000;">58.2%</div>
<div class="t" style="right:445.55px;top:1220.30px;font-size:10px;letter-spacing:-0.3px;font-style:italic;-webkit-text-stroke:0.15px;color:#000;">57.9%</div>
<div class="t" style="right:389.58px;top:1220.30px;font-size:10px;letter-spacing:-0.3px;font-style:italic;-webkit-text-stroke:0.15px;color:#000;">57.7%</div>
<div class="t" style="right:333.62px;top:1220.30px;font-size:10px;letter-spacing:-0.3px;font-style:italic;-webkit-text-stroke:0.15px;color:#000;">57.5%</div>
<div class="t" style="right:277.66px;top:1220.30px;font-size:10px;letter-spacing:-0.3px;font-style:italic;-webkit-text-stroke:0.15px;color:#000;">57.7%</div>
<div class="t" style="right:221.70px;top:1220.30px;font-size:10px;letter-spacing:-0.3px;font-style:italic;-webkit-text-stroke:0.15px;color:#000;">57.5%</div>
<div class="a" style="left:550.5px;top:501.04px;width:0;height:0;border-left:5px solid transparent;border-top:5px solid #ff0000;"></div>
<div class="a" style="left:606.4px;top:501.04px;width:0;height:0;border-left:5px solid transparent;border-top:5px solid #ff0000;"></div>
<div class="a" style="left:662.4px;top:501.04px;width:0;height:0;border-left:5px solid transparent;border-top:5px solid #ff0000;"></div>
<div class="a" style="left:550.5px;top:541.63px;width:0;height:0;border-left:5px solid transparent;border-top:5px solid #ff0000;"></div>
<div class="a" style="left:606.4px;top:541.63px;width:0;height:0;border-left:5px solid transparent;border-top:5px solid #ff0000;"></div>
<div class="a" style="left:662.4px;top:541.63px;width:0;height:0;border-left:5px solid transparent;border-top:5px solid #ff0000;"></div>
<div class="a" style="left:550.5px;top:663.40px;width:0;height:0;border-left:5px solid transparent;border-top:5px solid #ff0000;"></div>
<div class="a" style="left:606.4px;top:663.40px;width:0;height:0;border-left:5px solid transparent;border-top:5px solid #ff0000;"></div>
<div class="a" style="left:662.4px;top:663.40px;width:0;height:0;border-left:5px solid transparent;border-top:5px solid #ff0000;"></div>
<div class="a" style="left:550.5px;top:731.05px;width:0;height:0;border-left:5px solid transparent;border-top:5px solid #ff0000;"></div>
<div class="a" style="left:606.4px;top:731.05px;width:0;height:0;border-left:5px solid transparent;border-top:5px solid #ff0000;"></div>
<div class="a" style="left:662.4px;top:731.05px;width:0;height:0;border-left:5px solid transparent;border-top:5px solid #ff0000;"></div>
<div class="a" style="left:550.5px;top:771.64px;width:0;height:0;border-left:5px solid transparent;border-top:5px solid #ff0000;"></div>
<div class="a" style="left:606.4px;top:771.64px;width:0;height:0;border-left:5px solid transparent;border-top:5px solid #ff0000;"></div>
<div class="a" style="left:662.4px;top:771.64px;width:0;height:0;border-left:5px solid transparent;border-top:5px solid #ff0000;"></div>
<div class="a" style="left:550.5px;top:920.47px;width:0;height:0;border-left:5px solid transparent;border-top:5px solid #ff0000;"></div>
<div class="a" style="left:606.4px;top:920.47px;width:0;height:0;border-left:5px solid transparent;border-top:5px solid #ff0000;"></div>
<div class="a" style="left:662.4px;top:920.47px;width:0;height:0;border-left:5px solid transparent;border-top:5px solid #ff0000;"></div>
<div class="a" style="left:550.5px;top:961.06px;width:0;height:0;border-left:5px solid transparent;border-top:5px solid #ff0000;"></div>
<div class="a" style="left:606.4px;top:961.06px;width:0;height:0;border-left:5px solid transparent;border-top:5px solid #ff0000;"></div>
<div class="a" style="left:662.4px;top:961.06px;width:0;height:0;border-left:5px solid transparent;border-top:5px solid #ff0000;"></div>
<div class="a" style="left:550.5px;top:1082.83px;width:0;height:0;border-left:5px solid transparent;border-top:5px solid #ff0000;"></div>
<div class="a" style="left:606.4px;top:1082.83px;width:0;height:0;border-left:5px solid transparent;border-top:5px solid #ff0000;"></div>
<div class="a" style="left:662.4px;top:1082.83px;width:0;height:0;border-left:5px solid transparent;border-top:5px solid #ff0000;"></div>
<div class="a" style="left:550.5px;top:1150.48px;width:0;height:0;border-left:5px solid transparent;border-top:5px solid #ff0000;"></div>
<div class="a" style="left:606.4px;top:1150.48px;width:0;height:0;border-left:5px solid transparent;border-top:5px solid #ff0000;"></div>
<div class="a" style="left:662.4px;top:1150.48px;width:0;height:0;border-left:5px solid transparent;border-top:5px solid #ff0000;"></div>
<div class="a" style="left:550.5px;top:1191.07px;width:0;height:0;border-left:5px solid transparent;border-top:5px solid #ff0000;"></div>
<div class="a" style="left:606.4px;top:1191.07px;width:0;height:0;border-left:5px solid transparent;border-top:5px solid #ff0000;"></div>
<div class="a" style="left:662.4px;top:1191.07px;width:0;height:0;border-left:5px solid transparent;border-top:5px solid #ff0000;"></div>
<div class="a" style="left:0.0px;top:392.00px;width:1445.0px;height:1.30px;background:#a6a6a6;"></div>
<div class="a" style="left:444.0px;top:243.00px;width:1.3px;height:999.50px;background:#a6a6a6;"></div>
<div class="a" style="left:1226.5px;top:391.30px;width:77.2px;height:14.53px;box-sizing:border-box;border:2px solid #107c41;border-top:none;"></div>
<div class="a" style="left:1301.2px;top:403.33px;width:5px;height:5px;background:#107c41;border:1px solid #fff;"></div>
<div class="a" style="left:51.5px;top:392.30px;width:1.5px;height:13.53px;background:#107c41;"></div>
<div class="ob2" style="left:2.5px;top:392.8px;"><div style="position:absolute;left:2.5px;top:5px;width:6px;height:1.6px;background:#333;"></div></div>
<div class="ob2" style="left:2.5px;top:812.0px;"><div style="position:absolute;left:2.5px;top:5px;width:6px;height:1.6px;background:#333;"></div></div>
<div class="ob2" style="left:2.5px;top:1231.5px;"><div style="position:absolute;left:2.5px;top:5px;width:6px;height:1.6px;background:#333;"></div></div>
<div class="a" style="left:6.0px;top:423.36px;width:1.3px;height:391.37px;background:#8a8a8a;"></div>
<div class="a" style="left:6.0px;top:423.36px;width:6.0px;height:1.30px;background:#8a8a8a;"></div>
<div class="a" style="left:18.5px;top:425.86px;width:1.0px;height:1.00px;background:#666;"></div>
<div class="a" style="left:18.5px;top:439.39px;width:1.0px;height:1.00px;background:#666;"></div>
<div class="a" style="left:18.5px;top:452.92px;width:1.0px;height:1.00px;background:#666;"></div>
<div class="a" style="left:18.5px;top:466.45px;width:1.0px;height:1.00px;background:#666;"></div>
<div class="a" style="left:18.5px;top:479.98px;width:1.0px;height:1.00px;background:#666;"></div>
<div class="a" style="left:18.5px;top:493.51px;width:1.0px;height:1.00px;background:#666;"></div>
<div class="a" style="left:18.5px;top:507.04px;width:1.0px;height:1.00px;background:#666;"></div>
<div class="a" style="left:18.5px;top:520.57px;width:1.0px;height:1.00px;background:#666;"></div>
<div class="a" style="left:18.5px;top:534.10px;width:1.0px;height:1.00px;background:#666;"></div>
<div class="a" style="left:18.5px;top:547.63px;width:1.0px;height:1.00px;background:#666;"></div>
<div class="a" style="left:18.5px;top:561.16px;width:1.0px;height:1.00px;background:#666;"></div>
<div class="a" style="left:18.5px;top:574.69px;width:1.0px;height:1.00px;background:#666;"></div>
<div class="a" style="left:18.5px;top:588.22px;width:1.0px;height:1.00px;background:#666;"></div>
<div class="a" style="left:18.5px;top:601.75px;width:1.0px;height:1.00px;background:#666;"></div>
<div class="a" style="left:18.5px;top:615.28px;width:1.0px;height:1.00px;background:#666;"></div>
<div class="a" style="left:18.5px;top:628.81px;width:1.0px;height:1.00px;background:#666;"></div>
<div class="a" style="left:18.5px;top:642.34px;width:1.0px;height:1.00px;background:#666;"></div>
<div class="a" style="left:18.5px;top:655.87px;width:1.0px;height:1.00px;background:#666;"></div>
<div class="a" style="left:18.5px;top:669.40px;width:1.0px;height:1.00px;background:#666;"></div>
<div class="a" style="left:18.5px;top:682.93px;width:1.0px;height:1.00px;background:#666;"></div>
<div class="a" style="left:18.5px;top:696.46px;width:1.0px;height:1.00px;background:#666;"></div>
<div class="a" style="left:18.5px;top:709.99px;width:1.0px;height:1.00px;background:#666;"></div>
<div class="a" style="left:18.5px;top:723.52px;width:1.0px;height:1.00px;background:#666;"></div>
<div class="a" style="left:18.5px;top:737.05px;width:1.0px;height:1.00px;background:#666;"></div>
<div class="a" style="left:18.5px;top:750.58px;width:1.0px;height:1.00px;background:#666;"></div>
<div class="a" style="left:18.5px;top:764.11px;width:1.0px;height:1.00px;background:#666;"></div>
<div class="a" style="left:18.5px;top:777.64px;width:1.0px;height:1.00px;background:#666;"></div>
<div class="a" style="left:18.5px;top:791.17px;width:1.0px;height:1.00px;background:#666;"></div>
<div class="a" style="left:18.5px;top:804.70px;width:1.0px;height:1.00px;background:#666;"></div>
<div class="a" style="left:6.0px;top:842.79px;width:1.3px;height:391.37px;background:#8a8a8a;"></div>
<div class="a" style="left:6.0px;top:842.79px;width:6.0px;height:1.30px;background:#8a8a8a;"></div>
<div class="a" style="left:18.5px;top:845.29px;width:1.0px;height:1.00px;background:#666;"></div>
<div class="a" style="left:18.5px;top:858.82px;width:1.0px;height:1.00px;background:#666;"></div>
<div class="a" style="left:18.5px;top:872.35px;width:1.0px;height:1.00px;background:#666;"></div>
<div class="a" style="left:18.5px;top:885.88px;width:1.0px;height:1.00px;background:#666;"></div>
<div class="a" style="left:18.5px;top:899.41px;width:1.0px;height:1.00px;background:#666;"></div>
<div class="a" style="left:18.5px;top:912.94px;width:1.0px;height:1.00px;background:#666;"></div>
<div class="a" style="left:18.5px;top:926.47px;width:1.0px;height:1.00px;background:#666;"></div>
<div class="a" style="left:18.5px;top:940.00px;width:1.0px;height:1.00px;background:#666;"></div>
<div class="a" style="left:18.5px;top:953.53px;width:1.0px;height:1.00px;background:#666;"></div>
<div class="a" style="left:18.5px;top:967.06px;width:1.0px;height:1.00px;background:#666;"></div>
<div class="a" style="left:18.5px;top:980.59px;width:1.0px;height:1.00px;background:#666;"></div>
<div class="a" style="left:18.5px;top:994.12px;width:1.0px;height:1.00px;background:#666;"></div>
<div class="a" style="left:18.5px;top:1007.65px;width:1.0px;height:1.00px;background:#666;"></div>
<div class="a" style="left:18.5px;top:1021.18px;width:1.0px;height:1.00px;background:#666;"></div>
<div class="a" style="left:18.5px;top:1034.71px;width:1.0px;height:1.00px;background:#666;"></div>
<div class="a" style="left:18.5px;top:1048.24px;width:1.0px;height:1.00px;background:#666;"></div>
<div class="a" style="left:18.5px;top:1061.77px;width:1.0px;height:1.00px;background:#666;"></div>
<div class="a" style="left:18.5px;top:1075.30px;width:1.0px;height:1.00px;background:#666;"></div>
<div class="a" style="left:18.5px;top:1088.83px;width:1.0px;height:1.00px;background:#666;"></div>
<div class="a" style="left:18.5px;top:1102.36px;width:1.0px;height:1.00px;background:#666;"></div>
<div class="a" style="left:18.5px;top:1115.89px;width:1.0px;height:1.00px;background:#666;"></div>
<div class="a" style="left:18.5px;top:1129.42px;width:1.0px;height:1.00px;background:#666;"></div>
<div class="a" style="left:18.5px;top:1142.95px;width:1.0px;height:1.00px;background:#666;"></div>
<div class="a" style="left:18.5px;top:1156.48px;width:1.0px;height:1.00px;background:#666;"></div>
<div class="a" style="left:18.5px;top:1170.01px;width:1.0px;height:1.00px;background:#666;"></div>
<div class="a" style="left:18.5px;top:1183.54px;width:1.0px;height:1.00px;background:#666;"></div>
<div class="a" style="left:18.5px;top:1197.07px;width:1.0px;height:1.00px;background:#666;"></div>
<div class="a" style="left:18.5px;top:1210.60px;width:1.0px;height:1.00px;background:#666;"></div>
<div class="a" style="left:18.5px;top:1224.13px;width:1.0px;height:1.00px;background:#666;"></div>
</body></html>
